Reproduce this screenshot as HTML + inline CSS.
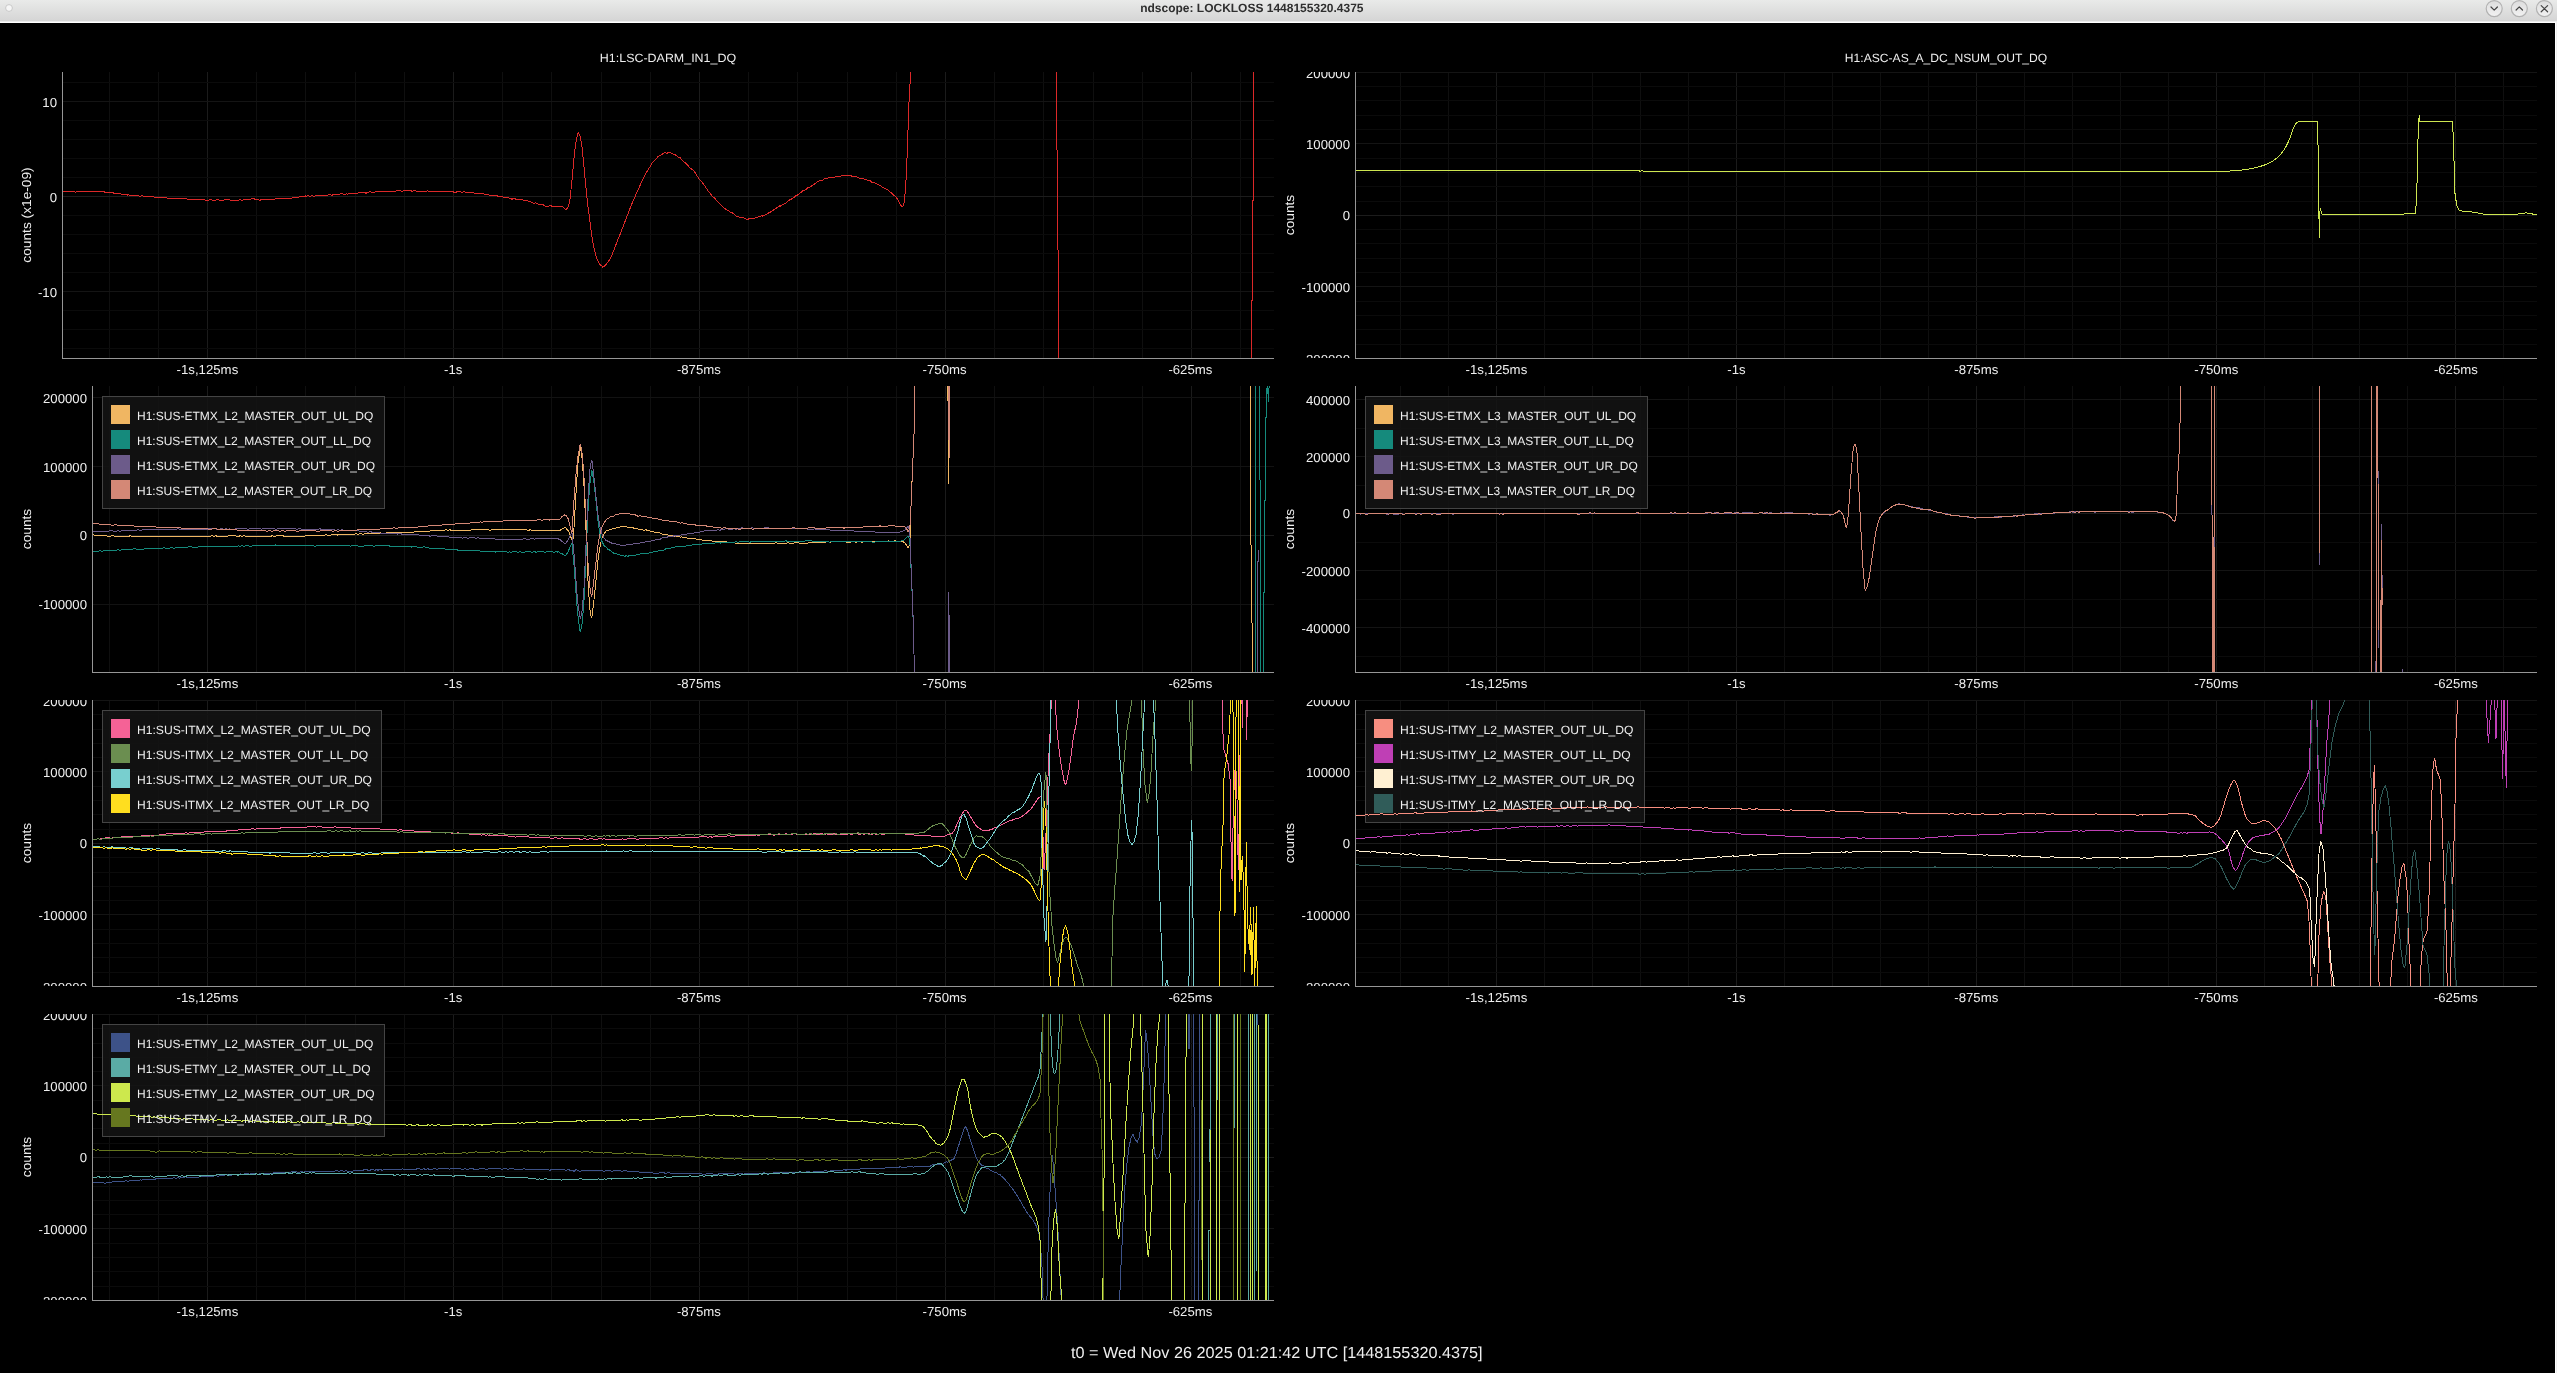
<!DOCTYPE html>
<html lang="en"><head><meta charset="utf-8"><title>ndscope: LOCKLOSS 1448155320.4375</title>
<style>html,body{margin:0;padding:0;background:#000;overflow:hidden}svg{display:block;will-change:transform}text{font-family:"Liberation Sans", sans-serif;text-rendering:geometricPrecision}</style></head><body>
<svg width="2557" height="1373" viewBox="0 0 2557 1373">
<defs>
<linearGradient id="tb" x1="0" y1="0" x2="0" y2="1"><stop offset="0" stop-color="#e9eae9"/><stop offset="1" stop-color="#d4d4d4"/></linearGradient>
<linearGradient id="bt" x1="0" y1="0" x2="0" y2="1"><stop offset="0" stop-color="#dcdcdc"/><stop offset="1" stop-color="#f2f2f2"/></linearGradient>
<clipPath id="c1"><rect x="62" y="72" width="1212" height="286"/></clipPath>
<clipPath id="a1"><rect x="-30" y="72" width="92" height="286"/></clipPath>
<clipPath id="c2"><rect x="1355" y="72" width="1182" height="286"/></clipPath>
<clipPath id="a2"><rect x="1263" y="72" width="92" height="286"/></clipPath>
<clipPath id="c3"><rect x="92" y="386" width="1182" height="286"/></clipPath>
<clipPath id="a3"><rect x="0" y="386" width="92" height="286"/></clipPath>
<clipPath id="c4"><rect x="1355" y="386" width="1182" height="286"/></clipPath>
<clipPath id="a4"><rect x="1263" y="386" width="92" height="286"/></clipPath>
<clipPath id="c5"><rect x="92" y="700" width="1182" height="286"/></clipPath>
<clipPath id="a5"><rect x="0" y="700" width="92" height="286"/></clipPath>
<clipPath id="c6"><rect x="1355" y="700" width="1182" height="286"/></clipPath>
<clipPath id="a6"><rect x="1263" y="700" width="92" height="286"/></clipPath>
<clipPath id="c7"><rect x="92" y="1014" width="1182" height="286"/></clipPath>
<clipPath id="a7"><rect x="0" y="1014" width="92" height="286"/></clipPath>
</defs>
<rect width="2557" height="1373" fill="#000"/>
<g id="plot1">
<g shape-rendering="crispEdges" fill="none" stroke-width="1">
<path stroke="#0f0f0f" d="M256.5 72V358M305.5 72V358M355.5 72V358M404.5 72V358M502.5 72V358M551.5 72V358M601.5 72V358M650.5 72V358M748.5 72V358M797.5 72V358M847.5 72V358M896.5 72V358M994.5 72V358M1043.5 72V358M1093.5 72V358M1142.5 72V358M158.5 72V358M1240.5 72V358M109.5 72V358"/>
<path stroke="#1b1b1b" d="M207.5 72V358M453.5 72V358M699.5 72V358M945.5 72V358M1191.5 72V358"/>
<path stroke="#0b0b0b" d="M62 82.5H1274M62 120.5H1274M62 139.5H1274M62 158.5H1274M62 177.5H1274M62 215.5H1274M62 234.5H1274M62 253.5H1274M62 272.5H1274M62 310.5H1274M62 329.5H1274M62 348.5H1274"/>
<path stroke="#141414" d="M62 101.5H1274M62 291.5H1274"/>
<path stroke="#1c1c1c" d="M62 196.5H1274"/>
</g>
<g clip-path="url(#c1)" fill="none" stroke-width="1" stroke-linejoin="round" shape-rendering="crispEdges">
<path stroke="#dc2828" d="M62 191.6L64 191.7L66 191.5L68 191.3L70 191.6L72 191.4L74 191.8L76 192.1L78 191.4L80 191.4L82 191.8L84 191.7L86 191.5L88 191L89.2 191.5L90 191.7L92 191L94 191.5L96 191L98 191.3L100 191.3L102 192L104 191.8L106 192.6L108 192.9L110 193L112 192.4L114 193.2L116 193.6L118 193.9L120 193.6L122 194.3L124 194.1L126 194.3L127.5 195.1L128 194.6L130 195.3L132 195.8L134 195.3L136 195.7L138 195.9L140 196.1L142 195.8L144 196.3L146 196.9L148 195.9L150 197L152 196.9L154 196.8L156 197.9L158 197.6L160 197L162 197.7L164 198L166 197.9L168 198.3L170 198.1L172 198.5L174 199L176 198.3L178 198.7L180 198.6L182 198.9L184 198.6L186 198.9L188 199.2L190 199.7L192 199.9L194 199.2L196 199.4L198 200L200 199.1L202 199.7L204 199.8L206 200.4L208 200.2L209 199.9L210 199.9L212 200L214 200.6L216 199.9L218 199.9L220 200.2L222 200L224 200.1L226 199.6L228 200L230 199.9L232 200.5L234 200.3L236 200L238 200.2L240 199.8L242 200.1L244 199.8L246 199.8L248 199L250 199.4L252 198.7L254 198.7L254.9 199.2L256 199.1L258 199.7L260 200.3L262 199.2L264 199.3L266 199.5L268 199.4L270 199.1L272 199L274 199.2L276 198.9L278 198.2L280 198.5L282 198.5L284 198.1L286 198.4L288 197.9L290 198.4L292 197.9L294 197.6L296 197.3L298 197.3L300 196.5L302 196.5L304 196.8L305.9 195.8L306 196.8L308 195.6L310 196.5L312 195.8L314 196.2L316 195.8L318 195.1L320 196L322 195.8L324 195.1L326 195.1L328 195L330 194.6L332 195.2L334 194.5L336 194.5L338 194.1L340 194.1L342 193.7L344 194.5L346 193.9L348 194.1L350 193.5L352 193.1L354 193.2L356 193L356.9 193.2L358 193L360 192.8L362 192.2L364 192.4L366 193.2L368 192.2L370 191.8L372 192.2L374 192.4L376 191.2L378 191.6L380 191.4L382 190.9L384 191.6L386 191.4L388 191.4L390 191.1L392 191.4L394 191L396 191.1L398 190.6L400 190.5L402 191.5L404 190.7L406 190.9L407.9 190.7L408 190.7L410 190.7L412 191.1L414 190.9L416 191L418 191.2L420 191.7L422 191.5L424 191.6L426 191.2L428 190.9L430 191.8L432 191.8L434 191.3L436 191.4L438 191.4L440 191.5L442 191.4L444 191L446 191.8L448 190.9L450 191.7L452 191.7L453.7 191.9L454 192.4L456 192.2L458 191.4L460 191.4L462 192.3L464 191.8L466 192.3L468 192.8L470 192L472 192L474 193.1L476 193.3L478 193.4L480 193.8L482 193.7L484 193.9L484.3 194.3L486 194.3L488 194.4L490 195.5L492 195.4L494 195.8L496 195.7L498 196.1L500 196.2L502 196.6L504 197.2L506 197.2L508 197.9L510 198.2L512 199.2L514 198.2L516 199.2L518 199.1L520 199.4L522 199.4L522.6 199.8L524 200.5L526 200.5L528 201.1L530 201.5L532 202.8L534 203.1L536 202.9L538 204L540 204L542 204L544 205.5L546 206.5L548 206.2L550 205.9L551.9 205.8L552 206.6L554 206.2L556 206L558 206L560 206.1L562 206.5L562.3 206.4L564 208.1L566 210L568 207.4L569.3 203.2L570 199.2L572 180L574 157.8L574.7 151.5L576 141.7L578 132.9L578.3 132.5L580 135.8L581.8 145.4L582 146.7L584 166.6L584.5 172L586 188.2L586.9 197.3L588 206.7L590 222L592 237L593 243L594 247.9L596 256.1L597.6 260.5L598 261.3L600 264.7L602 265.9L602.2 267.1L604 266.4L606 264.5L608 262.1L608.3 261.5L610 259L612 254.9L614 250L616 244.6L618 239.4L619 236.9L620 234.5L622 229.4L624 224.2L626 219L628 213.7L630 208.6L632 203.6L634 199L634.2 198.5L636 194.4L638 189.9L640 185.5L642 181.2L644 177.1L646 173.3L648 169.8L649.5 167.5L650 166.8L652 163.2L654 161L656 159.1L658 156.6L658.6 156.2L660 155.6L662 154.3L664 152.9L666 152.9L667.2 153.3L668 152.5L670 152.9L672 153.3L674 154.7L676 155.1L676.9 155.7L678 157.1L680 157.6L682 159.8L684 161.8L686 163.3L688 165.4L690 168L692 169.4L692.2 169.4L694 171L696 174L698 177.3L700 180L702 182L704 184.9L706 187.7L708 190.8L710 193.1L712 195.7L713.5 197.4L714 197.6L716 199.7L718 201.9L720 203.7L722 205.9L724 208.1L726 209.4L728 210.7L728.8 210.5L730 212L732 212.6L734 214L736 216L738 216.9L740 217.3L741 217L742 217.6L744 218L746 218.9L748 219.7L748.6 219L750 218.5L752 218.3L754 218.2L756 217.6L758 216.9L760 216.8L762 215.5L762.3 216.2L764 215.5L766 214.8L768 213.2L770 212.4L772 211.1L774 209.7L776 208.4L778 207L780 205.7L780.7 206.2L782 204.9L784 203.9L786 203.1L788 200.8L790 199.8L792 198.7L794 197.4L796 195.7L798 194.8L800 193.2L802 191.4L804 190.1L805 190.1L806 189.4L808 187.3L810 187.1L812 185.5L814 184.6L816 182.8L818 181.6L820 180.2L822 180.7L824 178.9L826 179L826.4 178L828 178.1L830 177.1L832 177.3L834 177.4L836 176.3L838 176.8L840 176.4L842 175.8L844 175.9L846 175.8L846.2 175.8L848 175.7L850 175.7L852 176.1L854 176.2L856 176.6L858 177.4L860 178.4L862 178L864 179L866 179.3L866.1 179.2L868 180.5L870 180.7L872 182.3L874 182.3L876 183.6L878 184.4L880 185.5L882 186.9L884 187.9L884.4 188.3L886 189L888 190L890 191.8L892 193.4L894 195.5L896 196.8L896.6 198L898 200.1L900 204.1L902 206.8L902.7 206.7L904 202.8L904.8 197.3L906 180.4L907.3 151.5L908 130.3L908.8 105.8L910 84.6L910.6 72.2L911.5 40"/>
<path stroke="#dc2828" d="M1056.5 72V150H1057.5V250H1058.5V358M1253.5 72V200H1252.5V300H1251.5V358"/>
</g>
<path d="M62.5 72V358.5H1274" fill="none" stroke="#969696" stroke-width="1" shape-rendering="crispEdges"/>
<g font-size="13" fill="#eeeeee">
<g text-anchor="end" clip-path="url(#a1)">
<text x="57" y="106.7" textLength="14.7" lengthAdjust="spacingAndGlyphs">10</text>
<text x="57" y="201.7" textLength="7.3" lengthAdjust="spacingAndGlyphs">0</text>
<text x="57" y="296.7" textLength="19.1" lengthAdjust="spacingAndGlyphs">-10</text>
</g>
<g text-anchor="middle">
<text x="207.4" y="374" textLength="61.7" lengthAdjust="spacingAndGlyphs">-1s,125ms</text>
<text x="453.2" y="374" textLength="18.3" lengthAdjust="spacingAndGlyphs">-1s</text>
<text x="698.9" y="374" textLength="44" lengthAdjust="spacingAndGlyphs">-875ms</text>
<text x="944.6" y="374" textLength="44" lengthAdjust="spacingAndGlyphs">-750ms</text>
<text x="1190.4" y="374" textLength="44" lengthAdjust="spacingAndGlyphs">-625ms</text>
</g>
<text transform="translate(31 215) rotate(-90)" text-anchor="middle" textLength="95.3" lengthAdjust="spacingAndGlyphs">counts (x1e-09)</text>
</g>
<text x="668" y="61.5" font-size="12" fill="#eeeeee" text-anchor="middle" textLength="136.3" lengthAdjust="spacingAndGlyphs">H1:LSC-DARM_IN1_DQ</text>
</g>
<g id="plot2">
<g shape-rendering="crispEdges" fill="none" stroke-width="1">
<path stroke="#0f0f0f" d="M1544.5 72V358M1592.5 72V358M1640.5 72V358M1688.5 72V358M1784.5 72V358M1832.5 72V358M1880.5 72V358M1928.5 72V358M2024.5 72V358M2072.5 72V358M2120.5 72V358M2168.5 72V358M2264.5 72V358M2312.5 72V358M2359.5 72V358M2407.5 72V358M1448.5 72V358M2503.5 72V358M1400.5 72V358"/>
<path stroke="#1b1b1b" d="M1496.5 72V358M1736.5 72V358M1976.5 72V358M2216.5 72V358M2455.5 72V358"/>
<path stroke="#0b0b0b" d="M1355 86.5H2537M1355 100.5H2537M1355 115.5H2537M1355 129.5H2537M1355 158.5H2537M1355 172.5H2537M1355 186.5H2537M1355 201.5H2537M1355 229.5H2537M1355 243.5H2537M1355 258.5H2537M1355 272.5H2537M1355 301.5H2537M1355 315.5H2537M1355 329.5H2537M1355 344.5H2537"/>
<path stroke="#141414" d="M1355 72.5H2537M1355 143.5H2537M1355 286.5H2537"/>
<path stroke="#1c1c1c" d="M1355 215.5H2537"/>
</g>
<g clip-path="url(#c2)" fill="none" stroke-width="1" stroke-linejoin="round" shape-rendering="crispEdges">
<path stroke="#cde650" d="M1355 170.5L1638 170.5L1639 170L1640 171.8L1641.5 170.6L1644 171.5L2180 171.5L2215 171.5M2215 171.5L2216.5 171.5L2218 171.5L2219.5 171.4L2221 171.4L2222.5 171.3L2224 171.3L2225.5 171.2L2226.6 171.2L2227 171.2L2228.5 171.1L2230 171L2231.5 170.9L2233 170.8L2234.5 170.7L2236 170.6L2237.5 170.4L2238 170.4L2239 170.3L2240.5 170.1L2242 170L2243.5 169.8L2245 169.6L2246.5 169.4L2248 169.1L2249.5 168.9L2249.9 168.8L2251 168.6L2252.5 168.3L2254 168L2255.5 167.7L2257 167.3L2258.5 166.9L2260 166.5L2261.5 166L2263 165.5L2264.5 165L2266 164.4L2267.5 163.7L2269 163L2270.5 162.3L2272 161.4L2273.2 160.7L2273.5 160.5L2275 159.5L2276.5 158.3L2278 157L2279.5 155.5L2281 153.8L2282.5 152L2284 149.9L2285.5 147.4L2287 144.5L2288.5 141.4L2289.5 139.2L2290 138L2291.5 133.7L2293 129.2L2294.2 126.4L2294.5 125.8L2296 123.4L2296.5 122.9L2297.5 122.2L2299 121.5L2299.3 121.5M2299.3 121.5L2317.5 121.5L2318.2 153.2L2318.9 211.4L2319.3 237.5L2319.8 211.4L2320.5 209L2322.1 214.2L2403.7 214.2L2404.5 213.2L2415.3 213.1L2416.7 199.8L2417.7 148.5L2418.6 120.6L2419.5 115.2L2420 121.5L2452.6 121.5L2453.8 153.2L2454.9 192.8M2454.9 192.8L2456.4 203.2L2457.3 206.8L2457.9 208.1L2459.4 210.2L2459.6 210.3L2460.9 210.7L2462.4 211L2463.9 211.2L2465.4 211.3L2466.9 211.4L2468.4 211.6L2469.9 211.7L2471.2 211.9L2471.4 211.9L2472.9 212.2L2474.4 212.4L2475.9 212.7L2477.4 212.9L2478.9 213.2L2480.4 213.5L2481.9 213.8L2482.9 214M2482.9 214L2517.8 214L2522 213.4L2526 212.8L2531 213.8L2536 214.5L2537 214.5"/>
</g>
<path d="M1355.5 72V358.5H2537" fill="none" stroke="#969696" stroke-width="1" shape-rendering="crispEdges"/>
<g font-size="13" fill="#eeeeee">
<g text-anchor="end" clip-path="url(#a2)">
<text x="1350" y="77.5" textLength="44" lengthAdjust="spacingAndGlyphs">200000</text>
<text x="1350" y="149" textLength="44" lengthAdjust="spacingAndGlyphs">100000</text>
<text x="1350" y="219.9" textLength="7.3" lengthAdjust="spacingAndGlyphs">0</text>
<text x="1350" y="292" textLength="48.4" lengthAdjust="spacingAndGlyphs">-100000</text>
<text x="1350" y="363.5" textLength="48.4" lengthAdjust="spacingAndGlyphs">-200000</text>
</g>
<g text-anchor="middle">
<text x="1496.4" y="374" textLength="61.7" lengthAdjust="spacingAndGlyphs">-1s,125ms</text>
<text x="1736.4" y="374" textLength="18.3" lengthAdjust="spacingAndGlyphs">-1s</text>
<text x="1976.3" y="374" textLength="44" lengthAdjust="spacingAndGlyphs">-875ms</text>
<text x="2216.3" y="374" textLength="44" lengthAdjust="spacingAndGlyphs">-750ms</text>
<text x="2455.9" y="374" textLength="44" lengthAdjust="spacingAndGlyphs">-625ms</text>
</g>
<text transform="translate(1294 215) rotate(-90)" text-anchor="middle" textLength="40.4" lengthAdjust="spacingAndGlyphs">counts</text>
</g>
<text x="1946" y="61.5" font-size="12" fill="#eeeeee" text-anchor="middle" textLength="202.3" lengthAdjust="spacingAndGlyphs">H1:ASC-AS_A_DC_NSUM_OUT_DQ</text>
</g>
<g id="plot3">
<g shape-rendering="crispEdges" fill="none" stroke-width="1">
<path stroke="#0f0f0f" d="M256.5 386V672M305.5 386V672M355.5 386V672M404.5 386V672M502.5 386V672M551.5 386V672M601.5 386V672M650.5 386V672M748.5 386V672M797.5 386V672M847.5 386V672M896.5 386V672M994.5 386V672M1043.5 386V672M1093.5 386V672M1142.5 386V672M158.5 386V672M1240.5 386V672M109.5 386V672"/>
<path stroke="#1b1b1b" d="M207.5 386V672M453.5 386V672M699.5 386V672M945.5 386V672M1191.5 386V672"/>
<path stroke="#121212" d="M92 397.5H1274M92 466.5H1274M92 604.5H1274"/>
<path stroke="#1c1c1c" d="M92 535.5H1274"/>
</g>
<rect x="102.5" y="396.5" width="282" height="112" fill="#141414" fill-opacity="0.85" stroke="#444444" stroke-width="1" shape-rendering="crispEdges"/>
<g clip-path="url(#c3)" fill="none" stroke-width="1" stroke-linejoin="round" shape-rendering="crispEdges">
<path stroke="#f0b662" d="M92 534.8L94 535L96 535.1L98 535L100 535.6L102 535.1L104 535.6L106 535.6L108 536.3L110 536.3L112 535.6L114 535.9L116 536.4L118 536.4L120 536.4L122 536.3L124 536.4L126 536.5L128 536.3L128.9 536.5L130 535.7L132 536.5L134 536.2L136 536.7L138 536.3L140 536.2L142 536.5L144 536.3L146 536.3L148 536.2L150 536.6L152 536.6L154 536.7L156 536.3L158 536.6L160 536.3L162 536.2L164 536.3L166 536.4L168 536.1L170 536.1L172 536.1L174 536.2L176 536L178 536.6L180 536.3L182 536.5L184 536.2L186 536.5L188 536.6L190 536.4L192 536.9L194 536.6L196 536.9L198 536.6L200 536.2L202 536.2L204 536.5L206 536.3L208 536.3L210 536.3L212 535.8L214 536.2L216 535.8L218 536.5L220 536.2L222 536.2L224 536.3L226 536.4L228 536L230 535.9L232 536L234 535.8L236 535.9L238 536.6L240 535.8L242 536.3L244 535.9L246 536.3L248 536.1L250 536.1L252 536.3L254 536.7L256 536.3L258 536.4L260 536.2L262 536.6L264 536.3L266 536.6L268 536.3L270 536.7L272 535.8L274 536.1L275.5 536.3L276 536L278 535.8L280 535.9L282 535.7L284 536.1L286 536.8L288 536.5L290 536L292 536L294 536.1L296 536.5L298 536L300 536L302 536.4L304 536.3L306 535.9L308 535.6L310 535.4L312 535.6L314 535L316 535.7L318 535.2L320 535.3L322 535.6L324 535.4L326 534.6L328 535.2L330 535.2L332 534.7L334 534.6L334.2 534.9L336 534.5L338 535.2L340 534.1L342 534.4L344 534.6L346 534.4L348 534.5L350 534.5L352 534.3L354 534.6L356 533.6L358 534.2L360 533.9L362 534L364 534L366 533.6L368 533.5L370 533.9L372 533.6L374 533.3L376 533.9L378 533.9L380 532.8L382 533.1L384 533.6L386 533L388 532.7L390 532.7L392 532.4L392.9 532.5L394 532.4L396 532.6L398 532.4L400 532.3L402 532.1L404 532.3L406 532L408 532.1L410 532.4L412 532.1L414 532L416 531.8L418 531.7L420 531.6L422 531.4L424 531.5L426 530.9L428 531.5L430 531L432 530.7L434 530.7L436 530.4L438 530.5L440 530.3L442 530.7L444 530.2L446 529.8L448 530.1L450 529.8L451.5 530.4L452 530.7L454 530.6L456 530.1L458 530.3L460 530.8L462 530.4L464 530.2L466 530.4L468 530.6L470 530.2L472 529.9L474 529.8L476 529.8L478 529.5L480 529.4L482 529.6L484 529.5L486 529.6L488 529.6L490 530.3L492 529.5L494 529.6L496 529.7L498 529.8L500 530L502 529.6L504 529.6L506 529.3L508 529.4L510 529.7L510.2 529.6L512 529.2L514 529.4L516 529.5L518 529.7L520 529.4L522 529.7L524 529.4L526 529.7L528 530.6L530 529.8L532 530.3L534 530.6L536 530.5L538 530.5L540 530.8L542 530.8L544 530.8L546 530.4L548 530.8L549.3 530.7L550 530.7L552 530.9L554 530.9L556 530.9L558 530.4L559 530.7L560 530.4L562 529.1L564 527.9L564.9 527.4L566 528L568 530.7L568.5 531L570 534.7L572 540.3L572.8 541L574 527.8L575 510L576 492.8L577.8 465L578 463.2L580 448.6L580.5 447.5L582 457.9L583.3 475L584 486.3L586 530L588 581.1L588.5 590L590 609.7L591.4 617.8L592 616.6L594 599.6L594.5 595L596 579.7L598 560L600 546.6L602 538L604 533.9L606 531.2L606.7 530.7L608 530.2L610 529.6L612 529.1L614 528.7L616 528.1L618 527.6L620 527L622 526.1L623.1 526.5L624 526.6L626 526.6L628 527.2L630 527.1L632 527.3L634 528.3L636 528.7L638 529L640 529.5L642 529.9L644 530.1L646 529.8L648 530.6L650 531.1L652 531.4L654 532L656 532.6L658 532.7L660 532.9L662 534.2L664 534L666 534.3L668 535L670 535.4L672 535.6L674 536.3L676 536.2L676.6 536.1L678 536.6L680 537.1L682 536.9L684 537.4L686 537.6L688 538.6L690 537.9L692 538.7L694 538.7L696 538.9L698 539.4L700 539.7L702 540L704 540L706 540L708 540.3L710 540.8L712 541L714 541.4L716 541.3L718 541.7L720 542.1L720.3 541.7L722 541.4L724 541.7L726 541.7L728 542.7L730 542.2L732 542.9L734 542.8L736 543.2L738 543.2L740 543.1L742 543.2L744 543.4L746 543.4L748 543.2L750 543.3L752 543.9L753.1 542.9L754 543.5L756 543.2L758 543.4L760 543.6L762 543.4L764 543.7L766 543.1L768 543.8L770 543.4L772 543.6L774 543.4L776 542.8L778 543.2L780 543.3L782 543.6L784 543.2L786 543.2L788 542.7L790 543.5L792 543.6L794 543L796 542.9L798 542.6L800 543.3L802 543.8L804 543.2L806 543.3L808 543.1L810 542.6L812 543.1L814 542.4L816 542.6L818 542.6L820 542.7L822 542.5L824 542.4L826 542L828 541.9L830 542.2L832 541.9L834 541.7L836 541.6L838 541.9L840 541.5L842 541.6L844 541.6L846 542L848 542.1L850 542.4L852 541.6L854 541.8L856 542.2L858 541.8L860 541.9L862 542.2L864 541.7L866 541.5L868 541.4L870 541.7L872 541.8L874 541.3L876 541.3L878 541.7L880 541.6L882 541.4L884 541.6L886 541.5L888 540.9L890 541.2L892 541.3L894 541L895.1 540.6L896 541.1L898 541.4L900 541.6L902 540.9L903 542.3L904 541.8L906 544.6L908 547.9L908.2 547.9L909.8 544L910 540.9L910.8 511L912 481.6L912.6 467.4L914 434.8L914.3 423.7L914.8 386L915 350"/>
<path stroke="#158a7c" d="M92 551.2L94 551.6L96 551.3L98 551.3L100 550.9L102 551.1L104 550.9L106 550.8L108 550.4L110 550.3L112 550.1L114 550L116 550.2L118 549.7L120 550.2L122 549.6L124 549.8L126 549.6L128 549.4L130 549.9L132 549.3L134 548.9L136 549L138 549L140 549.6L142 549L144 549.1L146 548.6L148 548.9L150 548.8L152 549L154 548.3L156 548.6L158 548.4L158.2 548.2L160 548.4L162 548.2L164 547.6L166 548.4L168 548.4L170 548L172 547.7L174 548.3L176 547.8L178 547.9L180 547.9L182 547.4L184 547.5L186 547.1L188 547L190 546.9L192 547L194 547.3L196 547.1L198 547L200 546.9L202 547L204 546.5L206 546.6L208 546.7L210 546.5L212 546.6L214 546.3L216 546.9L216.9 546.8L218 546.6L220 546.5L222 547.1L224 546.5L226 546.4L228 546.5L230 546.4L232 546.6L234 546.2L236 546.6L238 545.9L240 546.2L242 545.8L244 546.4L246 545.8L248 545.8L250 546.1L252 546.1L254 545.5L256 545.7L258 545.4L260 545.8L262 545.7L264 545.5L266 545.4L268 545.5L270 545.4L272 545.7L274 545.9L275.5 545L276 545.4L278 545.3L280 545.5L282 545.2L284 545.4L286 545.2L288 545.6L290 545.5L292 545.5L294 545.6L296 545.5L298 545.2L300 545.7L302 545.6L304 545.5L306 545.8L308 545.9L310 545.3L312 545.4L314 546L316 546L318 545.5L320 545.4L322 545.4L324 545.5L326 545.2L328 545.7L330 545.3L332 545.2L334 545.7L336 545.3L338 545.4L340 545.7L342 545.7L344 545.4L346 545.5L348 545.4L350 546.1L352 545.8L354 545.4L356 545.8L358 546L360 546.1L362 546.4L363.5 546.3L364 545.7L366 545.8L368 545.5L370 545.9L372 545.7L374 546.3L376 545.5L378 545L380 545.4L382 545.6L384 545.3L386 545.5L388 545.7L390 546.1L392 546.2L394 546.1L396 546.6L398 546.4L400 546.5L402 546.4L404 546.6L406 547L408 546.4L410 546.7L412 547.1L412.4 546.7L414 546.9L416 546.6L418 547.3L420 547.4L422 547.2L424 546.9L426 547.2L428 547.9L430 548.3L432 548.1L434 548.5L436 548.2L438 548.4L440 548.7L442 549L444 548.7L446 549.5L448 549.8L450 549.2L451.5 549.3L452 549.8L454 549.7L456 549.3L458 550.3L460 550.2L462 550.2L464 551L466 550.5L468 550.4L470 550.7L472 550.4L474 550.6L476 550.9L478 550.9L480 551L482 551.5L484 551.5L486 551.5L488 551.6L490 551.7L492 552L494 551.7L496 552.1L498 551.4L500 551.6L502 551.4L504 551.8L506 551.9L508 552.2L510 551.7L510.2 552L512 552L514 551.9L516 551.9L518 552.2L520 551.6L522 552.2L524 552.1L526 551.8L528 551.7L530 551.6L532 552.4L534 551.5L536 552.2L538 551.9L540 551.6L542 551.3L544 552L546 552.1L548 551.4L549.3 551.6L550 552L552 551.8L554 552.4L556 551.7L558 552.1L559 551.7L560 552.9L562 553.7L564 554.9L564.9 555.6L566 555L568 551.9L568.5 551L570 546.8L571.8 543.1L572 543.3L574 565.4L574.5 572L576 593.2L577.5 612L578 616.4L580 630.5L580.5 631L582 624L583.5 608L584 600.6L586 556L588 511.3L588.8 498L590 483L591.9 470.4L592 470.6L594 482.9L595 492L596 501.3L598 521.3L598.5 525L600 533.9L601.5 540L602 541.4L604 545.6L604.5 546.2L606 547L608 549.3L610 550.2L612 551.9L614 553.3L616 553.5L618 554.5L620 555L622 555.7L624 556L625.3 556.2L626 555.6L628 556.2L630 555.4L632 555.4L634 555.4L636 555L638 554.3L640 554L642 553.8L644 553.5L645 553.7L646 553L648 553.2L650 552.7L652 552.3L654 551.9L656 551.8L658 551L660 550.7L662 550.2L664 550L666 548.6L668 549L670 548.2L672 547.8L674 547.2L676 546.6L676.6 547L678 546.7L680 546.7L682 545.9L684 546.4L686 545.9L688 545.5L690 545.3L692 545L694 544.6L696 544.5L698 544.5L700 544.4L702 543.9L704 544L706 543.6L708 543.7L710 543.9L712 543.6L714 543.3L716 542.8L718 542.7L720 542.5L720.3 543.2L722 542.7L724 542.8L726 542.6L728 542.6L730 542.9L732 542.2L734 542.2L736 541.9L738 542.2L740 541.6L742 541.6L744 541.5L746 541.4L748 541.8L750 542.3L752 541.3L754 541.7L756 541.5L758 541.2L760 541.3L762 541.3L764 541.2L766 541.9L768 540.9L770 541.4L772 541.4L774 541.1L776 541.2L778 541.4L780 541.2L782 541.3L784 541.5L786 540.8L788 541.8L790 542L792 541.7L794 541.7L796 541L798 541.3L800 541.1L802 541L804 541.3L806 540.8L808 541L810 540.6L812 541.1L814 541.2L816 541.1L818 541.1L820 541.8L822 541L824 541.3L826 541.4L828 541.9L830 542.1L832 541.7L834 541.3L836 541.3L838 541.7L840 541.3L842 541.8L844 541.8L846 541.4L848 541.6L850 541.6L852 541.9L854 541.3L856 541.8L858 541.5L860 541.4L862 541.7L864 541.6L866 541.4L868 541.2L870 541.4L872 542L874 542.2L876 541.7L878 542L880 541.4L882 541.6L884 541.7L886 541.4L888 541.4L890 541.8L892 541.6L894 541.5L895.1 541.8L896 541.6L898 541.7L900 541.3L902 540.9L903 540.9L904 540.2L905.5 538.6L906 538.1L907.8 536.2L908 536.4L909.2 538L910 545L911.5 580L912 591.4L913.2 622L914 654.2L914.3 671.7L914.6 700"/>
<path stroke="#6c5b8a" d="M92 532L94 531.8L96 531.8L98 531.4L100 531.1L102 531.5L104 531.3L106 531.3L108 531.3L110 530.9L112 530.9L114 531.1L116 531.1L118 530.8L120 531.1L122 530.9L124 530.5L126 530.7L128 531L130 530.2L132 530.6L134 530.6L136 530.5L138 529.7L140 530.4L142 529.9L144 529.7L146 529.8L148 530L150 529.7L152 529.6L154 530L156 529.5L158 529.4L158.2 529.9L160 529.8L162 529.8L164 529.2L166 529.8L168 529.6L170 529.9L172 529.1L174 529.4L176 529.3L178 528.9L180 529.1L182 529.6L184 529.2L186 529.2L188 529.6L190 529.6L192 529.6L194 529.2L196 529.4L198 529.7L200 529.3L202 529.2L204 529.5L206 529.6L208 528.9L210 528.5L212 528.7L214 528.8L216 529L218 529.2L220 529L222 528.9L224 529.2L226 528.9L228 529.1L230 528.9L232 529.8L234 529.2L236 528.9L238 528.8L240 528.9L242 528.5L244 528.8L246 528.8L248 529.3L250 528.9L252 528.8L254 528.5L256 528.6L258 528.8L260 528.8L262 529.1L264 528.7L266 529L268 528.9L270 528.8L272 528.4L274 528.6L275.5 529.2L276 529.3L278 528.9L280 529L282 528.7L284 528.7L286 528.7L288 529L290 528.9L292 528.8L294 528.7L296 529L298 529L300 528.8L302 529.4L304 529.1L306 529.2L308 529.5L310 529.4L312 529.1L314 529.4L316 529L318 529.2L320 528.8L322 529.7L324 528.9L326 529.7L328 529.3L330 529.3L332 529.6L334 529.8L334.2 529.9L336 530.2L338 529.9L340 530.1L342 529.8L344 530.2L346 530.2L348 530.1L350 530.3L352 530.5L354 530.6L356 531L358 530.9L360 531.1L362 531.7L364 531.2L366 531.7L368 532.5L370 531.5L372 532.2L373.3 532.6L374 532L376 533.2L378 532L380 533.2L382 533.3L384 533.2L386 533.1L388 533.4L390 533.1L392 533.7L394 533.3L396 533.7L398 534.1L400 533.7L402 534.1L404 534.3L406 534L408 534.8L410 534.7L412 534.3L414 534.8L416 534.6L418 534.8L420 535.2L422 535.1L422.2 535.6L424 535.2L426 535.8L428 535.7L430 536.1L432 535.9L434 536L436 535.8L438 536.4L440 536.6L442 537L444 536.9L446 536.8L448 536.8L450 537.1L452 537.1L454 537.7L456 537.6L458 537.3L460 537.4L462 538.1L464 537.8L466 537.8L468 538.2L470 537.9L471.1 537.9L472 537.9L474 537.5L476 538.4L478 537.8L480 538.2L482 538.2L484 538.7L486 538.5L488 538.7L490 538.4L492 539L494 538.7L496 539.2L498 539.3L500 539.3L502 540L504 539.7L506 539.7L508 539.6L510 539.5L510.2 539.9L512 539.8L514 539.2L516 539.7L518 539.5L520 539.6L522 539.3L524 538.9L526 538.9L528 539.5L530 539L532 538.6L534 539.1L536 538.8L538 538.2L540 538.2L542 538.4L544 538.8L546 538.7L548 538.7L549.3 538.8L550 538.8L552 538.2L554 538.8L556 538.7L558 538.8L559 539.2L560 539.7L562 541.4L564 542.9L564.9 543.3L566 543.2L568 539.8L568.5 539L570 535.8L571.8 533L572 533.3L574 553.8L574.5 560L576 581.2L577.5 600L578 604.2L580 617.3L580.5 618.3L582 610.8L583.5 595L584 587.9L586 545L588 498.6L588.5 490L590 469.1L591.4 460.2L592 461.1L594 477.6L594.5 482L596 496.6L598 515L600 526.6L602 534L604 537.7L606 540.6L606.7 540.5L608 541.3L610 542.3L612 543.3L614 543.2L616 544.1L618 544.6L620 545.1L622 545.2L623.1 545.4L624 545L626 545.1L628 544.7L630 544.4L632 544.2L634 543.9L636 543.4L638 543.7L640 543.1L642 542.3L644 542.6L646 541.7L648 541.6L650 541.1L652 540.8L654 540.4L656 539.7L658 539.3L660 539.4L662 537.9L664 537.9L666 537.6L668 536.8L670 536.2L672 536.7L674 535.7L676 536.1L676.6 535.5L678 535.2L680 535.2L682 534.8L684 534.7L686 534.2L688 533.7L690 533.4L692 533.4L694 533L696 532.2L698 532L700 532L702 531.4L704 531.1L706 530.7L708 530.7L710 530.6L712 530.7L714 530.2L716 530.4L718 529.7L720 530.4L720.3 529.9L722 529.7L724 529.3L726 528.6L728 529.1L730 529L732 529.4L734 528.5L736 529.2L738 528.6L740 528.7L742 527.8L744 528.4L746 528.2L748 528.5L750 528.2L752 527.9L754 528.3L756 528.2L758 528.2L760 528.3L762 528.3L764 528L766 527.7L768 527.8L770 528.4L772 528.3L774 528.2L776 528.2L778 528.3L780 528.3L782 528.2L784 528.2L786 529L788 528.6L790 528.5L792 528.3L794 528.5L796 528.9L798 528.9L800 528.7L802 528.8L804 528.7L806 528.5L808 529.3L810 529.1L812 529.6L814 528.9L816 529.2L818 529.6L820 529.3L822 529.2L824 529.4L826 529.7L828 529.9L829.6 529.9L830 530.1L832 530.2L834 530.1L836 530.1L838 530.2L840 530.4L842 530.5L844 530.4L846 530.7L848 530.6L850 530.4L852 530.6L854 531.1L856 531.1L858 531.6L860 531.4L862 531.7L864 531.9L866 531.9L868 531.7L870 531.8L872 532L874 531.8L876 532.2L878 532.4L880 532.1L882 532.8L884 532.2L884.2 532.3L886 532.4L888 532.4L890 532.6L892 532.4L894 532.8L896 532.4L898 532.3L900 532L901.7 531.4L902 531.7L904 530.5L905 530.2L906 528.5L907.8 526.4L908 526.2L909.2 529L910 537.3L911.5 576.6L912 588.7L913.2 620.3L914 653.7L914.3 671.7L914.6 700"/>
<path stroke="#d48876" d="M92 523.6L94 523.6L96 523.4L98 523.7L100 524.2L102 524.5L104 524.1L106 524.2L108 525L110 524.5L112 525.3L114 525L116 524.8L118 525.4L120 525.7L122 524.9L124 525.8L126 525.4L128 526L130 525.6L132 525.4L134 526L136 526.2L138 526.5L140 526.5L142 526.4L144 526.3L146 526.3L148 526.6L150 526.5L152 526.8L154 526.3L156 527.1L158 527.2L160 527.9L162 527.5L164 527.2L166 527.6L168 527.2L170 527.4L172 527.1L174 528L176 527.9L178 527.5L180 527.9L182 528.2L184 528.2L186 528.2L188 528L190 528.2L192 528.4L194 528.7L196 528.3L198 528.3L200 528.9L202 528.5L204 529L206 528.8L207.1 528.9L208 529.1L210 529L212 529.1L214 528.7L216 528.9L218 529.2L220 529.6L222 529.6L224 530.1L226 529.6L228 529.6L230 530L232 529.8L234 529.8L236 529.7L238 530.4L240 530L242 530.3L244 530.1L246 530.8L248 530.3L250 530.9L252 530.3L254 530.6L256 531.1L258 530.6L260 530.9L262 530.8L264 530.5L266 531.1L268 531.1L270 530.7L272 531.2L274 530.9L275.5 530.8L276 531L278 530.8L280 531.4L282 530.5L284 531L286 531.1L288 530.3L290 530.3L292 530.9L294 530.7L296 531L298 531.2L300 530.8L302 530.6L304 530.2L306 531L308 530.8L310 530.9L312 530.9L314 530.3L316 531.1L318 531L320 531L322 530.4L324 530.6L326 530.6L328 530.7L330 530.6L332 531.1L334 531L334.2 531L336 530.8L338 531.2L340 530.9L342 530L344 530.5L346 530.7L348 530.8L350 530.5L352 530.3L354 530.1L356 530.3L358 529.8L360 529.7L362 529.7L364 529.8L366 529.4L368 529.1L370 529.7L372 529.3L374 529.4L376 529.4L378 529.4L380 529.1L382 528.7L384 528.6L386 528.1L388 528.8L390 528.3L392 528.5L392.9 528.1L394 527.7L396 528.5L398 527.9L400 527.9L402 527.7L404 527.8L406 527.7L408 527L410 527.6L412 527.1L414 527L416 527.4L418 527L420 526.6L422 526.1L424 526.4L426 526.3L428 526.1L430 525.6L432 525.6L434 525.3L436 525.6L438 525.6L440 525.5L442 524.9L444 525L446 524.8L448 524.3L450 524.3L451.5 524.8L452 524.3L454 524.2L456 523.7L458 523.7L460 523.1L462 523.5L464 523.7L466 523.7L468 523.3L470 523L472 522.7L474 522.4L476 522.4L478 522.4L480 521.9L482 522.2L484 521.7L486 521.3L488 521.5L490 521.2L492 521.2L494 521.7L496 521.2L498 521.2L500 521.3L502 521.3L504 520.7L506 521L508 520.7L510 520.5L510.2 520.6L512 520.1L514 520.2L516 520.3L518 520.4L520 520.1L522 520.2L524 520.5L526 520.6L528 520.4L530 520.5L532 520L534 520L536 520.1L538 519.9L540 519.8L542 520.2L544 519.7L546 519.5L548 519.8L549.3 520.1L550 519.5L552 519.7L554 519.2L556 519.1L558 519L559 519L560 519.1L562 516.6L564 515.7L564.9 514.8L566 515.5L568 518.6L568.5 519.5L570 526.1L571.8 533L572 532.4L574 500L576 474.4L577.5 460L578 456.4L580 445.2L580.5 444.5L582 452.7L583.5 470L584 477.5L586 520L588 562.4L588.5 570L590 588.2L591.4 596.1L592 594.9L594 579.2L594.5 575L596 561.7L598 545L600 533.8L601.5 528L602 526.7L604 522.8L604.5 522.1L606 520L608 518.5L610 517.1L612 516.4L614 516L616 514.5L618 514.5L620 513.5L622 513.3L623.1 513L624 514L626 513.6L628 513.9L630 514L632 514.8L634 514.3L636 515.3L638 516.3L640 515.9L642 516.3L644 516.8L646 516.7L648 517.2L650 517.8L652 518L654 518.4L656 518.6L658 519.1L660 519.3L662 520L664 520.2L666 520.4L668 520.2L670 521.4L672 521.7L674 521.6L676 521.7L678 522.3L680 523.1L682 522.9L684 523.3L686 523.7L688 524.3L690 524.2L692 524.4L694 524.5L696 525.2L698 525.4L698.5 525.2L700 525.1L702 525.4L704 526L706 525.8L708 526.6L710 526.7L712 526.9L714 527.2L716 527.3L718 527.1L720 527.5L722 528.4L724 527.7L726 528L728 528.6L730 528.4L732 528.3L734 528.2L736 528.7L738 529L740 529.1L742 528.8L742.2 529L744 528.5L746 528.8L748 528.5L750 528.9L752 529L754 529L756 528.4L758 528.9L760 528.3L762 528.2L764 528.4L766 528L768 528.3L770 528.3L772 528.2L774 528.4L776 528.3L778 528.5L780 528.1L782 528.4L784 528.2L786 528.2L788 528.4L790 528.5L792 528L794 527.9L796 528.1L798 528.2L800 528.3L802 528.3L804 528.4L806 528.2L808 528L810 527.7L812 527.8L814 527.9L816 528.1L818 528.1L820 528.1L822 528L824 528.2L826 528L828 527.9L830 527.9L832 527.6L834 527.4L836 527.8L838 527.6L840 527.5L842 527.5L844 528.2L846 527.5L848 527.6L850 527.6L852 527.2L854 527.4L856 527.9L858 527.6L860 527.3L862 527.2L864 526.8L866 526.9L868 526.7L870 526.7L872 526.7L874 526.8L876 526.6L878 526.6L880 525.8L882 526.6L884 526.9L886 526.6L888 526L890 525.9L892 526L894 525.7L895.1 526.2L896 526L898 526.3L900 526.6L902 525.9L903.9 526.8L904 526.5L906 527.7L906.5 528.3L908 531.6L908.2 532.1L909.6 529L910 525.3L910.8 511L912 482.9L912.6 467.4L914 434.8L914.3 423.7L914.8 386L915 350"/>
<path stroke="#f0b662" d="M948.5 386V484M947.5 386V401"/>
<path stroke="#d48876" d="M949.5 386V458M948.5 386V440"/>
<path stroke="#6c5b8a" d="M948.5 592V672M949.5 615V672"/>
<path stroke="#f0b662" d="M1250.5 386V545H1251.5V623H1252.5V672"/>
<path stroke="#158a7c" d="M1255.5 386V672M1259.5 386V480H1260.5V672M1263.5 672V592H1264.5V500H1265.5V417H1266.5V390L1267.5 386M1267.5 386L1268.5 402L1269 388L1269.5 386"/>
<path stroke="#6c5b8a" d="M1258.5 550V561H1257.5V672"/>
</g>
<rect x="111" y="405" width="19" height="19" fill="#f0b662" shape-rendering="crispEdges"/>
<text x="137" y="420.0" font-size="12" fill="#eeeeee" textLength="236.4" lengthAdjust="spacingAndGlyphs">H1:SUS-ETMX_L2_MASTER_OUT_UL_DQ</text>
<rect x="111" y="430" width="19" height="19" fill="#158a7c" shape-rendering="crispEdges"/>
<text x="137" y="445.0" font-size="12" fill="#eeeeee" textLength="234" lengthAdjust="spacingAndGlyphs">H1:SUS-ETMX_L2_MASTER_OUT_LL_DQ</text>
<rect x="111" y="455" width="19" height="19" fill="#6c5b8a" shape-rendering="crispEdges"/>
<text x="137" y="470.0" font-size="12" fill="#eeeeee" textLength="238" lengthAdjust="spacingAndGlyphs">H1:SUS-ETMX_L2_MASTER_OUT_UR_DQ</text>
<rect x="111" y="480" width="19" height="19" fill="#d48876" shape-rendering="crispEdges"/>
<text x="137" y="495.0" font-size="12" fill="#eeeeee" textLength="235.1" lengthAdjust="spacingAndGlyphs">H1:SUS-ETMX_L2_MASTER_OUT_LR_DQ</text>
<path d="M92.5 386V672.5H1274" fill="none" stroke="#969696" stroke-width="1" shape-rendering="crispEdges"/>
<g font-size="13" fill="#eeeeee">
<g text-anchor="end" clip-path="url(#a3)">
<text x="87" y="403.1" textLength="44" lengthAdjust="spacingAndGlyphs">200000</text>
<text x="87" y="471.8" textLength="44" lengthAdjust="spacingAndGlyphs">100000</text>
<text x="87" y="539.9" textLength="7.3" lengthAdjust="spacingAndGlyphs">0</text>
<text x="87" y="609.2" textLength="48.4" lengthAdjust="spacingAndGlyphs">-100000</text>
</g>
<g text-anchor="middle">
<text x="207.4" y="688" textLength="61.7" lengthAdjust="spacingAndGlyphs">-1s,125ms</text>
<text x="453.2" y="688" textLength="18.3" lengthAdjust="spacingAndGlyphs">-1s</text>
<text x="698.9" y="688" textLength="44" lengthAdjust="spacingAndGlyphs">-875ms</text>
<text x="944.6" y="688" textLength="44" lengthAdjust="spacingAndGlyphs">-750ms</text>
<text x="1190.4" y="688" textLength="44" lengthAdjust="spacingAndGlyphs">-625ms</text>
</g>
<text transform="translate(31 529) rotate(-90)" text-anchor="middle" textLength="40.4" lengthAdjust="spacingAndGlyphs">counts</text>
</g>
</g>
<g id="plot4">
<g shape-rendering="crispEdges" fill="none" stroke-width="1">
<path stroke="#0f0f0f" d="M1544.5 386V672M1592.5 386V672M1640.5 386V672M1688.5 386V672M1784.5 386V672M1832.5 386V672M1880.5 386V672M1928.5 386V672M2024.5 386V672M2072.5 386V672M2120.5 386V672M2168.5 386V672M2264.5 386V672M2312.5 386V672M2359.5 386V672M2407.5 386V672M1448.5 386V672M2503.5 386V672M1400.5 386V672"/>
<path stroke="#1b1b1b" d="M1496.5 386V672M1736.5 386V672M1976.5 386V672M2216.5 386V672M2455.5 386V672"/>
<path stroke="#0b0b0b" d="M1355 428.5H2537M1355 485.5H2537M1355 542.5H2537M1355 599.5H2537M1355 656.5H2537"/>
<path stroke="#141414" d="M1355 399.5H2537M1355 456.5H2537M1355 570.5H2537M1355 627.5H2537"/>
<path stroke="#1c1c1c" d="M1355 513.5H2537"/>
</g>
<rect x="1365.5" y="396.5" width="282" height="112" fill="#141414" fill-opacity="0.85" stroke="#444444" stroke-width="1" shape-rendering="crispEdges"/>
<g clip-path="url(#c4)" fill="none" stroke-width="1" stroke-linejoin="round" shape-rendering="crispEdges">
<path stroke="#f0b662" d="M1355 513.3L1357 513.8L1359 513.9L1361 514L1363 513.6L1365 514L1367 514.2L1369 513.6L1371 513.9L1373 513.2L1375 513.1L1377 513.7L1379 513.6L1381 513.6L1383 513.4L1385 513.5L1387 513.8L1389 514.1L1391 513.6L1393 513.2L1395 514L1397 513.8L1399 513.8L1401 513.8L1403 514.4L1405 513.9L1407 514L1409 513.3L1411 513.7L1413 513.7L1415 514L1417 514L1419 513.7L1421 514.3L1423 513.6L1425 513.8L1427 514L1429 513.5L1431 514L1433 514L1435 513.8L1437 514.4L1439 514L1441 514.1L1443 513.6L1445 513.4L1447 513.6L1449 513.7L1451 513.7L1453 514L1455 513.1L1457 513.3L1459 513.1L1461 514L1463 513.5L1465 513.6L1467 513.3L1469 513.8L1471 513.5L1473 513.7L1475 513.1L1477 513.8L1479 513.6L1481 513.7L1483 513.8L1485 513.6L1487 513.6L1489 513.9L1491 513.7L1493 513.6L1495 513.8L1497 513.6L1499 514L1500 514.1L1501 513.8L1503 514.2L1505 513.3L1507 513.6L1509 514.1L1511 513.5L1513 513.2L1515 513.9L1517 513.6L1519 513.1L1521 513.6L1523 513.2L1525 513.1L1527 513.4L1529 513.3L1531 513.1L1533 513.3L1535 513.2L1537 513.4L1539 513.5L1541 513.6L1543 513.4L1545 513.2L1547 513.2L1549 513.6L1551 514L1553 513.8L1555 513.5L1557 513.9L1559 513.4L1561 513.9L1563 513.5L1565 513.9L1567 513.8L1569 513.5L1571 513.6L1573 513.2L1575 513.5L1577 513.8L1579 514.5L1581 513.6L1583 513.5L1585 513.1L1587 513.6L1589 512.9L1591 513L1593 513.3L1595 512.9L1597 513.6L1599 513.6L1601 513.2L1603 513.2L1605 513.2L1607 513.2L1609 513.7L1611 513.7L1613 513.7L1615 513.7L1617 513.4L1619 513.5L1621 513L1623 513.2L1625 513.6L1627 513.5L1629 513L1631 513L1633 513.4L1635 513.6L1637 512.7L1639 513.1L1641 513.3L1643 513.5L1645 513.1L1647 513.5L1649 513.3L1650 514L1651 513.6L1653 513.6L1655 513.5L1657 513.8L1659 513.8L1661 513.3L1663 513.6L1665 513.2L1667 513.3L1669 513.1L1671 512.9L1673 513.1L1675 512.9L1677 513.3L1679 513.5L1681 513.2L1683 513L1685 513.6L1687 512.9L1689 513L1691 513.8L1693 513.8L1695 513.8L1697 513.4L1699 513L1701 513.1L1703 513.4L1705 513L1707 512.9L1709 512.8L1711 512.9L1713 513.4L1715 513.3L1717 512.9L1719 513L1721 513.1L1723 513.3L1725 512.9L1727 513L1729 512.4L1731 512.7L1733 513.2L1735 513.3L1737 512.8L1739 512.9L1741 513.4L1743 513L1745 513L1747 513.3L1749 513.2L1751 513.5L1753 513.4L1755 513L1757 513L1759 513L1761 512.8L1763 512.9L1765 513.4L1767 512.6L1769 513.3L1771 513.1L1773 513L1775 513.2L1777 513.3L1779 513.4L1780 513L1781 513.1L1783 513.2L1785 513.8L1787 513.5L1789 513.1L1791 513.3L1793 513.2L1795 513.4L1797 513.5L1799 514.1L1801 513.2L1803 513.8L1805 513.8L1807 513.6L1809 513.8L1811 513.9L1813 514.1L1815 514.5L1817 513.8L1819 514.6L1821 514.4L1823 514.8L1825 514.7L1827 515L1829 514.8L1831 515L1832.4 514.8L1833 514.5L1835 513.3L1836 512.6L1837 512.4L1839 510.5L1841 511.9L1841.5 512.7L1843 514.7L1843.4 515.5L1845 523.4L1846.2 527.6L1847 525L1848.2 515.5L1849 504.7L1849.6 495L1851 473.9L1853 451.4L1853.2 449.9L1854.2 444.6L1854.9 444.3L1855 444.2L1855.6 444.6L1856.9 452.1L1857 453L1859 491.6L1859.1 493.6L1861 531.7L1861.3 537.3L1863 567.8L1863.5 574.4L1865 589.3L1865.4 590.4L1867 587.1L1868.5 581L1869 578.6L1871 564.8L1871.8 559.2L1873 550.7L1875 536.7L1876.1 530.8L1877 527L1879 519.9L1880.5 516.5L1881 515.8L1883 513.3L1885 511.3L1887 510L1887.1 510.3L1889 509L1891 507.4L1893 506.1L1895 505.4L1897 504.1L1899 504.3L1899.1 504.3L1901 504.2L1903 504.7L1905 504.9L1907 505.5L1909 506.7L1911 506.9L1911.1 507.1L1913 507.2L1915 507.8L1917 508.1L1919 508.6L1921 509.2L1923 509L1925 509.5L1927 509.8L1929 509.2L1931 510.1L1932.9 510.9L1933 511L1935 511.1L1937 512.1L1939 512.7L1941 512.6L1943 513.5L1945 514.1L1947 514.2L1949 514.2L1951 515.2L1953 515.2L1954.8 515.2L1955 515.2L1957 515.3L1959 516.1L1961 516.3L1963 516.6L1965 516.7L1967 516.6L1969 516.9L1971 517.5L1973 517.4L1975 518.4L1976.6 517.6L1977 517.5L1979 518L1981 517.8L1983 517.5L1985 517.5L1987 517.6L1989 517.6L1991 517.5L1993 517.1L1995 517.3L1997 517.2L1998.5 517.2L1999 516.2L2001 516.6L2003 516.5L2005 516.6L2007 516.6L2009 516.6L2011 516.3L2013 516L2015 515.8L2017 516.2L2019 515.4L2021 515.4L2023 515.5L2025 514.9L2027 514.2L2029 514.7L2031 514.4L2033 514.3L2035 514.4L2037 514.1L2039 513.8L2041 514.1L2042.2 513.9L2043 513.8L2045 513.7L2047 513.5L2049 513.3L2051 513.1L2053 513.1L2055 512.7L2057 512.4L2059 512.9L2061 512.4L2063 512.4L2065 512.2L2067 512.1L2069 512L2071 512L2073 511.8L2075 512.2L2077 511.8L2079 512.2L2081 511.2L2083 511.4L2085 512L2085.9 511.7L2087 511.5L2089 511.8L2091 511.5L2093 511.9L2095 511.2L2097 511.7L2099 511.7L2101 511.9L2103 512L2105 511.5L2107 512.1L2109 511.6L2111 511.1L2113 511.1L2115 512.1L2117 511.6L2119 511.6L2121 511.5L2123 511.6L2125 512.1L2127 511.7L2129 512.2L2131 511.7L2133 511.1L2135 512L2137 511.5L2139 511.6L2141 512L2143 511.6L2145 511.9L2147 511.5L2149 511.3L2151 511.6L2151.4 511.4L2153 511.9L2155 511.9L2157 511.9L2159 512.2L2161 512.6L2163 512.8L2164.5 513.4L2165 513.2L2167 514.4L2169 515.5L2171 517.4L2171.1 517.6L2173 520L2174.4 521.4L2175 520.7L2176.1 515.5L2177 495L2177.6 478.3L2179 454.3L2179.4 445.5L2180.3 412.8L2180.7 386L2181 350"/>
<path stroke="#158a7c" d="M1355 513.3L1357 513.8L1359 513.9L1361 514L1363 513.6L1365 514L1367 514.2L1369 513.6L1371 513.9L1373 513.2L1375 513.1L1377 513.7L1379 513.6L1381 513.6L1383 513.4L1385 513.5L1387 513.8L1389 514.1L1391 513.6L1393 513.2L1395 514L1397 513.8L1399 513.8L1401 513.8L1403 514.4L1405 513.9L1407 514L1409 513.3L1411 513.7L1413 513.7L1415 514L1417 514L1419 513.7L1421 514.3L1423 513.6L1425 513.8L1427 514L1429 513.5L1431 514L1433 514L1435 513.8L1437 514.4L1439 514L1441 514.1L1443 513.6L1445 513.4L1447 513.6L1449 513.7L1451 513.7L1453 514L1455 513.1L1457 513.3L1459 513.1L1461 514L1463 513.5L1465 513.6L1467 513.3L1469 513.8L1471 513.5L1473 513.7L1475 513.1L1477 513.8L1479 513.6L1481 513.7L1483 513.8L1485 513.6L1487 513.6L1489 513.9L1491 513.7L1493 513.6L1495 513.8L1497 513.6L1499 514L1500 514.1L1501 513.8L1503 514.2L1505 513.3L1507 513.6L1509 514.1L1511 513.5L1513 513.2L1515 513.9L1517 513.6L1519 513.1L1521 513.6L1523 513.2L1525 513.1L1527 513.4L1529 513.3L1531 513.1L1533 513.3L1535 513.2L1537 513.4L1539 513.5L1541 513.6L1543 513.4L1545 513.2L1547 513.2L1549 513.6L1551 514L1553 513.8L1555 513.5L1557 513.9L1559 513.4L1561 513.9L1563 513.5L1565 513.9L1567 513.8L1569 513.5L1571 513.6L1573 513.2L1575 513.5L1577 513.8L1579 514.5L1581 513.6L1583 513.5L1585 513.1L1587 513.6L1589 512.9L1591 513L1593 513.3L1595 512.9L1597 513.6L1599 513.6L1601 513.2L1603 513.2L1605 513.2L1607 513.2L1609 513.7L1611 513.7L1613 513.7L1615 513.7L1617 513.4L1619 513.5L1621 513L1623 513.2L1625 513.6L1627 513.5L1629 513L1631 513L1633 513.4L1635 513.6L1637 512.7L1639 513.1L1641 513.3L1643 513.5L1645 513.1L1647 513.5L1649 513.3L1650 514L1651 513.6L1653 513.6L1655 513.5L1657 513.8L1659 513.8L1661 513.3L1663 513.6L1665 513.2L1667 513.3L1669 513.1L1671 512.9L1673 513.1L1675 512.9L1677 513.3L1679 513.5L1681 513.2L1683 513L1685 513.6L1687 512.9L1689 513L1691 513.8L1693 513.8L1695 513.8L1697 513.4L1699 513L1701 513.1L1703 513.4L1705 513L1707 512.9L1709 512.8L1711 512.9L1713 513.4L1715 513.3L1717 512.9L1719 513L1721 513.1L1723 513.3L1725 512.9L1727 513L1729 512.4L1731 512.7L1733 513.2L1735 513.3L1737 512.8L1739 512.9L1741 513.4L1743 513L1745 513L1747 513.3L1749 513.2L1751 513.5L1753 513.4L1755 513L1757 513L1759 513L1761 512.8L1763 512.9L1765 513.4L1767 512.6L1769 513.3L1771 513.1L1773 513L1775 513.2L1777 513.3L1779 513.4L1780 513L1781 513.1L1783 513.2L1785 513.8L1787 513.5L1789 513.1L1791 513.3L1793 513.2L1795 513.4L1797 513.5L1799 514.1L1801 513.2L1803 513.8L1805 513.8L1807 513.6L1809 513.8L1811 513.9L1813 514.1L1815 514.5L1817 513.8L1819 514.6L1821 514.4L1823 514.8L1825 514.7L1827 515L1829 514.8L1831 515L1832.4 514.8L1833 514.5L1835 513.3L1836 512.6L1837 512.4L1839 510.5L1841 511.9L1841.5 512.7L1843 514.7L1843.4 515.5L1845 523.4L1846.2 527.6L1847 525L1848.2 515.5L1849 504.7L1849.6 495L1851 473.9L1853 451.4L1853.2 449.9L1854.2 444.6L1854.9 444.3L1855 444.2L1855.6 444.6L1856.9 452.1L1857 453L1859 491.6L1859.1 493.6L1861 531.7L1861.3 537.3L1863 567.8L1863.5 574.4L1865 589.3L1865.4 590.4L1867 587.1L1868.5 581L1869 578.6L1871 564.8L1871.8 559.2L1873 550.7L1875 536.7L1876.1 530.8L1877 527L1879 519.9L1880.5 516.5L1881 515.8L1883 513.3L1885 511.3L1887 510L1887.1 510.3L1889 509L1891 507.4L1893 506.1L1895 505.4L1897 504.1L1899 504.3L1899.1 504.3L1901 504.2L1903 504.7L1905 504.9L1907 505.5L1909 506.7L1911 506.9L1911.1 507.1L1913 507.2L1915 507.8L1917 508.1L1919 508.6L1921 509.2L1923 509L1925 509.5L1927 509.8L1929 509.2L1931 510.1L1932.9 510.9L1933 511L1935 511.1L1937 512.1L1939 512.7L1941 512.6L1943 513.5L1945 514.1L1947 514.2L1949 514.2L1951 515.2L1953 515.2L1954.8 515.2L1955 515.2L1957 515.3L1959 516.1L1961 516.3L1963 516.6L1965 516.7L1967 516.6L1969 516.9L1971 517.5L1973 517.4L1975 518.4L1976.6 517.6L1977 517.5L1979 518L1981 517.8L1983 517.5L1985 517.5L1987 517.6L1989 517.6L1991 517.5L1993 517.1L1995 517.3L1997 517.2L1998.5 517.2L1999 516.2L2001 516.6L2003 516.5L2005 516.6L2007 516.6L2009 516.6L2011 516.3L2013 516L2015 515.8L2017 516.2L2019 515.4L2021 515.4L2023 515.5L2025 514.9L2027 514.2L2029 514.7L2031 514.4L2033 514.3L2035 514.4L2037 514.1L2039 513.8L2041 514.1L2042.2 513.9L2043 513.8L2045 513.7L2047 513.5L2049 513.3L2051 513.1L2053 513.1L2055 512.7L2057 512.4L2059 512.9L2061 512.4L2063 512.4L2065 512.2L2067 512.1L2069 512L2071 512L2073 511.8L2075 512.2L2077 511.8L2079 512.2L2081 511.2L2083 511.4L2085 512L2085.9 511.7L2087 511.5L2089 511.8L2091 511.5L2093 511.9L2095 511.2L2097 511.7L2099 511.7L2101 511.9L2103 512L2105 511.5L2107 512.1L2109 511.6L2111 511.1L2113 511.1L2115 512.1L2117 511.6L2119 511.6L2121 511.5L2123 511.6L2125 512.1L2127 511.7L2129 512.2L2131 511.7L2133 511.1L2135 512L2137 511.5L2139 511.6L2141 512L2143 511.6L2145 511.9L2147 511.5L2149 511.3L2151 511.6L2151.4 511.4L2153 511.9L2155 511.9L2157 511.9L2159 512.2L2161 512.6L2163 512.8L2164.5 513.4L2165 513.2L2167 514.4L2169 515.5L2171 517.4L2171.1 517.6L2173 520L2174.4 521.4L2175 520.7L2176.1 515.5L2177 495L2177.6 478.3L2179 454.3L2179.4 445.5L2180.3 412.8L2180.7 386L2181 350"/>
<path stroke="#6c5b8a" d="M1355 513.9L1357 514L1359 513.8L1361 514.1L1363 513.4L1365 513.6L1367 513.9L1369 513.5L1371 513.9L1373 513.6L1375 513.9L1377 513.7L1379 513.8L1381 513.9L1383 513.9L1385 513.8L1387 514.2L1389 513.8L1391 513.6L1393 514L1395 514L1397 514L1399 514.1L1401 513.6L1403 514L1405 514L1407 513.8L1409 513.9L1411 513.2L1413 513.7L1415 514L1417 513.4L1419 513.6L1421 513.8L1423 513.8L1425 514L1427 513.3L1429 513.6L1431 513.7L1433 513.3L1435 513.5L1437 513.8L1439 513.8L1441 513.6L1443 513L1445 513.5L1447 513.7L1449 513.6L1451 513.7L1453 514.3L1455 513.6L1457 513.4L1459 513.6L1461 513.6L1463 513.5L1465 513.6L1467 513.7L1469 513.6L1471 513.3L1473 513.6L1475 513.7L1477 513.5L1479 513.8L1481 513.7L1483 513.4L1485 513.6L1487 513.9L1489 513.8L1491 513.5L1493 513.7L1495 513.5L1497 513.3L1499 513.7L1500 513.7L1501 513.8L1503 513.7L1505 513.7L1507 513.6L1509 513.7L1511 513.8L1513 513.6L1515 513.8L1517 513.3L1519 513.4L1521 513.9L1523 514L1525 513.6L1527 513.6L1529 513.4L1531 513.7L1533 513.7L1535 513.4L1537 513.8L1539 513.8L1541 513.7L1543 513.5L1545 513.8L1547 513.5L1549 514L1551 513.8L1553 513.5L1555 514L1557 513.9L1559 513.6L1561 514L1563 513.4L1565 513.6L1567 513.7L1569 513.1L1571 513.6L1573 513.4L1575 513.5L1577 513.3L1579 513.6L1581 513.3L1583 513.3L1585 513.5L1587 513.4L1589 513.9L1591 513.4L1593 513.5L1595 513.5L1597 513.6L1599 513.7L1601 513.7L1603 513.5L1605 513.5L1607 513.5L1609 513.7L1611 513.7L1613 513.5L1615 513.2L1617 513.9L1619 513.7L1621 513.5L1623 513.5L1625 513.3L1627 513.2L1629 513.3L1631 513.4L1633 513.3L1635 513.2L1637 513.4L1639 513.6L1641 513.4L1643 513.6L1645 513.1L1647 513.4L1649 513.4L1650 513.2L1651 513.1L1653 513.5L1655 513.3L1657 513.5L1659 513.2L1661 513.5L1663 513.3L1665 513.1L1667 513.2L1669 513.3L1671 513.4L1673 513.2L1675 513.2L1677 513.4L1679 513.5L1681 513.5L1683 513.5L1685 513.5L1687 513.4L1689 513.4L1691 513.4L1693 513.3L1695 513.4L1697 513.8L1699 513.3L1701 513.2L1703 513.1L1705 513.2L1707 513.3L1709 512.9L1711 512.8L1713 513.2L1715 512.8L1717 513.2L1719 513.2L1721 513.4L1723 513.5L1725 513.3L1727 513.1L1729 513L1731 513L1733 513.1L1735 512.8L1737 513.1L1739 513L1741 513.1L1743 512.9L1745 513L1747 512.8L1749 512.9L1751 512.7L1753 513L1755 513.3L1757 513L1759 513L1761 512.8L1763 513.3L1765 512.9L1767 513.1L1769 513L1771 512.8L1773 513.2L1775 513.1L1777 513.1L1779 513.2L1780 513L1781 512.9L1783 513.1L1785 512.9L1787 513L1789 512.9L1791 512.8L1793 513L1795 513.1L1797 513.4L1799 513.7L1801 513.4L1803 513.9L1805 513.6L1807 513.9L1809 514.1L1811 513.9L1813 514L1815 514.4L1817 514.5L1819 514.5L1821 514.4L1823 515.1L1825 514.6L1827 514.6L1829 515.1L1831 515L1832.4 514.8L1833 515L1835 513.3L1836 512.7L1837 512L1839 511L1841 512.2L1841.5 512.5L1843 514.7L1843.4 515.5L1845 523.4L1846.2 527.3L1847 525L1848.2 515.5L1849 504.7L1849.6 495L1851 473.9L1853 451.4L1853.2 449.9L1854.2 444.6L1854.9 443.9L1855 444L1855.6 444.6L1856.9 452.1L1857 453L1859 491.6L1859.1 493.6L1861 531.7L1861.3 537.3L1863 567.8L1863.5 574.4L1865 589.3L1865.4 590.4L1867 587.1L1868.5 581L1869 578.6L1871 564.8L1871.8 559.2L1873 550.7L1875 536.7L1876.1 530.8L1877 527L1879 519.9L1880.5 516.5L1881 515.9L1883 513.6L1885 511.7L1887 510.2L1887.1 510.1L1889 508.9L1891 507.2L1893 506.1L1895 505L1897 504.3L1899 503.9L1899.1 503.9L1901 504.1L1903 504.3L1905 505.1L1907 505.6L1909 506.1L1911 506.7L1911.1 506.8L1913 507L1915 507.5L1917 507.6L1919 507.9L1921 508.3L1923 509.3L1925 509.1L1927 509.8L1929 510.3L1931 510.4L1932.9 511.1L1933 511.1L1935 511.5L1937 512.3L1939 512.4L1941 512.7L1943 513.3L1945 513.7L1947 513.9L1949 514.3L1951 515.3L1953 515.1L1954.8 515.5L1955 515.3L1957 515.7L1959 515.9L1961 516.1L1963 516.3L1965 516.6L1967 517L1969 517.4L1971 517.8L1973 517.8L1975 518L1976.6 517.8L1977 517.7L1979 517.4L1981 517.6L1983 517.1L1985 517.3L1987 517.6L1989 517.2L1991 517.4L1993 517.1L1995 516.9L1997 517L1998.5 516.9L1999 517.3L2001 517.4L2003 516.8L2005 516.8L2007 516.6L2009 516.4L2011 516L2013 516.1L2015 516L2017 515.8L2019 515.3L2021 515.3L2023 514.9L2025 515.1L2027 514.6L2029 514.5L2031 514.4L2033 514.2L2035 513.9L2037 513.6L2039 514.2L2041 513.7L2042.2 513.6L2043 513.9L2045 513.4L2047 513.4L2049 513.2L2051 513.3L2053 513.1L2055 513L2057 512.7L2059 512.7L2061 512.7L2063 512L2065 512.3L2067 512.1L2069 512.1L2071 511.7L2073 512.1L2075 511.8L2077 511.8L2079 511.7L2081 511.5L2083 511.6L2085 511.5L2085.9 511.5L2087 511.7L2089 511.7L2091 511.7L2093 511.7L2095 512.1L2097 511.8L2099 511.5L2101 511.6L2103 511.5L2105 511.6L2107 511.5L2109 511.5L2111 511.9L2113 511.6L2115 511.5L2117 511.5L2119 511.6L2121 512L2123 511.8L2125 511.9L2127 511.2L2129 511.8L2131 512L2133 512.2L2135 511.9L2137 511.5L2139 511.8L2141 511.6L2143 511.4L2145 511.6L2147 511.9L2149 512L2151 511.8L2151.4 511.5L2153 512.1L2155 511.5L2157 512L2159 512.1L2161 512.9L2163 513L2164.5 513.5L2165 513.4L2167 514.3L2169 515.9L2171 517.3L2171.1 517.8L2173 520.4L2174.4 521.4L2175 520.7L2176.1 515.5L2177 495L2177.6 478.3L2179 454.3L2179.4 445.5L2180.3 412.8L2180.7 386L2181 350"/>
<path stroke="#d48876" d="M1355 513.3L1357 513.8L1359 513.9L1361 514L1363 513.6L1365 514L1367 514.2L1369 513.6L1371 513.9L1373 513.2L1375 513.1L1377 513.7L1379 513.6L1381 513.6L1383 513.4L1385 513.5L1387 513.8L1389 514.1L1391 513.6L1393 513.2L1395 514L1397 513.8L1399 513.8L1401 513.8L1403 514.4L1405 513.9L1407 514L1409 513.3L1411 513.7L1413 513.7L1415 514L1417 514L1419 513.7L1421 514.3L1423 513.6L1425 513.8L1427 514L1429 513.5L1431 514L1433 514L1435 513.8L1437 514.4L1439 514L1441 514.1L1443 513.6L1445 513.4L1447 513.6L1449 513.7L1451 513.7L1453 514L1455 513.1L1457 513.3L1459 513.1L1461 514L1463 513.5L1465 513.6L1467 513.3L1469 513.8L1471 513.5L1473 513.7L1475 513.1L1477 513.8L1479 513.6L1481 513.7L1483 513.8L1485 513.6L1487 513.6L1489 513.9L1491 513.7L1493 513.6L1495 513.8L1497 513.6L1499 514L1500 514.1L1501 513.8L1503 514.2L1505 513.3L1507 513.6L1509 514.1L1511 513.5L1513 513.2L1515 513.9L1517 513.6L1519 513.1L1521 513.6L1523 513.2L1525 513.1L1527 513.4L1529 513.3L1531 513.1L1533 513.3L1535 513.2L1537 513.4L1539 513.5L1541 513.6L1543 513.4L1545 513.2L1547 513.2L1549 513.6L1551 514L1553 513.8L1555 513.5L1557 513.9L1559 513.4L1561 513.9L1563 513.5L1565 513.9L1567 513.8L1569 513.5L1571 513.6L1573 513.2L1575 513.5L1577 513.8L1579 514.5L1581 513.6L1583 513.5L1585 513.1L1587 513.6L1589 512.9L1591 513L1593 513.3L1595 512.9L1597 513.6L1599 513.6L1601 513.2L1603 513.2L1605 513.2L1607 513.2L1609 513.7L1611 513.7L1613 513.7L1615 513.7L1617 513.4L1619 513.5L1621 513L1623 513.2L1625 513.6L1627 513.5L1629 513L1631 513L1633 513.4L1635 513.6L1637 512.7L1639 513.1L1641 513.3L1643 513.5L1645 513.1L1647 513.5L1649 513.3L1650 514L1651 513.6L1653 513.6L1655 513.5L1657 513.8L1659 513.8L1661 513.3L1663 513.6L1665 513.2L1667 513.3L1669 513.1L1671 512.9L1673 513.1L1675 512.9L1677 513.3L1679 513.5L1681 513.2L1683 513L1685 513.6L1687 512.9L1689 513L1691 513.8L1693 513.8L1695 513.8L1697 513.4L1699 513L1701 513.1L1703 513.4L1705 513L1707 512.9L1709 512.8L1711 512.9L1713 513.4L1715 513.3L1717 512.9L1719 513L1721 513.1L1723 513.3L1725 512.9L1727 513L1729 512.4L1731 512.7L1733 513.2L1735 513.3L1737 512.8L1739 512.9L1741 513.4L1743 513L1745 513L1747 513.3L1749 513.2L1751 513.5L1753 513.4L1755 513L1757 513L1759 513L1761 512.8L1763 512.9L1765 513.4L1767 512.6L1769 513.3L1771 513.1L1773 513L1775 513.2L1777 513.3L1779 513.4L1780 513L1781 513.1L1783 513.2L1785 513.8L1787 513.5L1789 513.1L1791 513.3L1793 513.2L1795 513.4L1797 513.5L1799 514.1L1801 513.2L1803 513.8L1805 513.8L1807 513.6L1809 513.8L1811 513.9L1813 514.1L1815 514.5L1817 513.8L1819 514.6L1821 514.4L1823 514.8L1825 514.7L1827 515L1829 514.8L1831 515L1832.4 514.8L1833 514.5L1835 513.3L1836 512.6L1837 512.4L1839 510.5L1841 511.9L1841.5 512.7L1843 514.7L1843.4 515.5L1845 523.4L1846.2 527.6L1847 525L1848.2 515.5L1849 504.7L1849.6 495L1851 473.9L1853 451.4L1853.2 449.9L1854.2 444.6L1854.9 444.3L1855 444.2L1855.6 444.6L1856.9 452.1L1857 453L1859 491.6L1859.1 493.6L1861 531.7L1861.3 537.3L1863 567.8L1863.5 574.4L1865 589.3L1865.4 590.4L1867 587.1L1868.5 581L1869 578.6L1871 564.8L1871.8 559.2L1873 550.7L1875 536.7L1876.1 530.8L1877 527L1879 519.9L1880.5 516.5L1881 515.8L1883 513.3L1885 511.3L1887 510L1887.1 510.3L1889 509L1891 507.4L1893 506.1L1895 505.4L1897 504.1L1899 504.3L1899.1 504.3L1901 504.2L1903 504.7L1905 504.9L1907 505.5L1909 506.7L1911 506.9L1911.1 507.1L1913 507.2L1915 507.8L1917 508.1L1919 508.6L1921 509.2L1923 509L1925 509.5L1927 509.8L1929 509.2L1931 510.1L1932.9 510.9L1933 511L1935 511.1L1937 512.1L1939 512.7L1941 512.6L1943 513.5L1945 514.1L1947 514.2L1949 514.2L1951 515.2L1953 515.2L1954.8 515.2L1955 515.2L1957 515.3L1959 516.1L1961 516.3L1963 516.6L1965 516.7L1967 516.6L1969 516.9L1971 517.5L1973 517.4L1975 518.4L1976.6 517.6L1977 517.5L1979 518L1981 517.8L1983 517.5L1985 517.5L1987 517.6L1989 517.6L1991 517.5L1993 517.1L1995 517.3L1997 517.2L1998.5 517.2L1999 516.2L2001 516.6L2003 516.5L2005 516.6L2007 516.6L2009 516.6L2011 516.3L2013 516L2015 515.8L2017 516.2L2019 515.4L2021 515.4L2023 515.5L2025 514.9L2027 514.2L2029 514.7L2031 514.4L2033 514.3L2035 514.4L2037 514.1L2039 513.8L2041 514.1L2042.2 513.9L2043 513.8L2045 513.7L2047 513.5L2049 513.3L2051 513.1L2053 513.1L2055 512.7L2057 512.4L2059 512.9L2061 512.4L2063 512.4L2065 512.2L2067 512.1L2069 512L2071 512L2073 511.8L2075 512.2L2077 511.8L2079 512.2L2081 511.2L2083 511.4L2085 512L2085.9 511.7L2087 511.5L2089 511.8L2091 511.5L2093 511.9L2095 511.2L2097 511.7L2099 511.7L2101 511.9L2103 512L2105 511.5L2107 512.1L2109 511.6L2111 511.1L2113 511.1L2115 512.1L2117 511.6L2119 511.6L2121 511.5L2123 511.6L2125 512.1L2127 511.7L2129 512.2L2131 511.7L2133 511.1L2135 512L2137 511.5L2139 511.6L2141 512L2143 511.6L2145 511.9L2147 511.5L2149 511.3L2151 511.6L2151.4 511.4L2153 511.9L2155 511.9L2157 511.9L2159 512.2L2161 512.6L2163 512.8L2164.5 513.4L2165 513.2L2167 514.4L2169 515.5L2171 517.4L2171.1 517.6L2173 520L2174.4 521.4L2175 520.7L2176.1 515.5L2177 495L2177.6 478.3L2179 454.3L2179.4 445.5L2180.3 412.8L2180.7 386L2181 350"/>
<path stroke="#d48876" d="M2211.5 386V515H2212.5V672M2214.5 386V672M2213.5 537V672M2319.5 386V553M2371.5 386V672M2376.5 386V672M2377.5 386V478M2378.5 471V648M2381.5 524V672M2382.5 575V605M2380.5 600V672"/>
<path stroke="#6c5b8a" d="M2211.5 505V515M2214.5 537V547M2319.5 553V565M2378.5 471V484M2381.5 524V540M2382.5 575V588M2378.5 630V648M2375.5 661V672M2402.5 669V672"/>
</g>
<rect x="1374" y="405" width="19" height="19" fill="#f0b662" shape-rendering="crispEdges"/>
<text x="1400" y="420.0" font-size="12" fill="#eeeeee" textLength="236.2" lengthAdjust="spacingAndGlyphs">H1:SUS-ETMX_L3_MASTER_OUT_UL_DQ</text>
<rect x="1374" y="430" width="19" height="19" fill="#158a7c" shape-rendering="crispEdges"/>
<text x="1400" y="445.0" font-size="12" fill="#eeeeee" textLength="233.8" lengthAdjust="spacingAndGlyphs">H1:SUS-ETMX_L3_MASTER_OUT_LL_DQ</text>
<rect x="1374" y="455" width="19" height="19" fill="#6c5b8a" shape-rendering="crispEdges"/>
<text x="1400" y="470.0" font-size="12" fill="#eeeeee" textLength="237.7" lengthAdjust="spacingAndGlyphs">H1:SUS-ETMX_L3_MASTER_OUT_UR_DQ</text>
<rect x="1374" y="480" width="19" height="19" fill="#d48876" shape-rendering="crispEdges"/>
<text x="1400" y="495.0" font-size="12" fill="#eeeeee" textLength="235" lengthAdjust="spacingAndGlyphs">H1:SUS-ETMX_L3_MASTER_OUT_LR_DQ</text>
<path d="M1355.5 386V672.5H2537" fill="none" stroke="#969696" stroke-width="1" shape-rendering="crispEdges"/>
<g font-size="13" fill="#eeeeee">
<g text-anchor="end" clip-path="url(#a4)">
<text x="1350" y="404.7" textLength="44" lengthAdjust="spacingAndGlyphs">400000</text>
<text x="1350" y="461.7" textLength="44" lengthAdjust="spacingAndGlyphs">200000</text>
<text x="1350" y="518.1" textLength="7.3" lengthAdjust="spacingAndGlyphs">0</text>
<text x="1350" y="575.7" textLength="48.4" lengthAdjust="spacingAndGlyphs">-200000</text>
<text x="1350" y="632.7" textLength="48.4" lengthAdjust="spacingAndGlyphs">-400000</text>
</g>
<g text-anchor="middle">
<text x="1496.4" y="688" textLength="61.7" lengthAdjust="spacingAndGlyphs">-1s,125ms</text>
<text x="1736.4" y="688" textLength="18.3" lengthAdjust="spacingAndGlyphs">-1s</text>
<text x="1976.3" y="688" textLength="44" lengthAdjust="spacingAndGlyphs">-875ms</text>
<text x="2216.3" y="688" textLength="44" lengthAdjust="spacingAndGlyphs">-750ms</text>
<text x="2455.9" y="688" textLength="44" lengthAdjust="spacingAndGlyphs">-625ms</text>
</g>
<text transform="translate(1294 529) rotate(-90)" text-anchor="middle" textLength="40.4" lengthAdjust="spacingAndGlyphs">counts</text>
</g>
</g>
<g id="plot5">
<g shape-rendering="crispEdges" fill="none" stroke-width="1">
<path stroke="#0f0f0f" d="M256.5 700V986M305.5 700V986M355.5 700V986M404.5 700V986M502.5 700V986M551.5 700V986M601.5 700V986M650.5 700V986M748.5 700V986M797.5 700V986M847.5 700V986M896.5 700V986M994.5 700V986M1043.5 700V986M1093.5 700V986M1142.5 700V986M158.5 700V986M1240.5 700V986M109.5 700V986"/>
<path stroke="#1b1b1b" d="M207.5 700V986M453.5 700V986M699.5 700V986M945.5 700V986M1191.5 700V986"/>
<path stroke="#0b0b0b" d="M92 714.5H1274M92 729.5H1274M92 743.5H1274M92 757.5H1274M92 786.5H1274M92 800.5H1274M92 814.5H1274M92 829.5H1274M92 857.5H1274M92 872.5H1274M92 886.5H1274M92 900.5H1274M92 929.5H1274M92 943.5H1274M92 957.5H1274M92 972.5H1274"/>
<path stroke="#141414" d="M92 700.5H1274M92 771.5H1274M92 914.5H1274"/>
<path stroke="#1c1c1c" d="M92 843.5H1274"/>
</g>
<rect x="102.5" y="710.5" width="279" height="112" fill="#141414" fill-opacity="0.85" stroke="#444444" stroke-width="1" shape-rendering="crispEdges"/>
<g clip-path="url(#c5)" fill="none" stroke-width="1" stroke-linejoin="round" shape-rendering="crispEdges">
<path stroke="#f56296" d="M92 839.5L94 839L96 839.3L98 838.9L100 839.1L102 838.5L104 838.2L106 837.6L108 837.6L110 838L112 838.4L114 837.1L116 837.1L118 837.3L120 837.3L122 836.9L124 837L126 836.4L128 836.6L130 836.7L132 836.8L134 836.2L136 836.1L138 836.1L140 836.2L142 835.9L144 835.5L146 835.7L148 835.8L150 835.3L152 835.1L154 835.4L156 835.2L158 835.2L160 834.9L162 834.5L164 834.3L166 834L168 833.9L170 833.8L172 833.7L174 834L176 833.3L178 833.5L180 833.2L182 833.7L184 833.2L186 832.8L188 833.1L190 832.9L192 832.5L194 832.9L196 832.6L198 832.8L200 832.6L202 832.4L204 832.1L206 831.7L208 831.9L210 831.7L211.4 831.9L212 831.6L214 831.3L216 831L218 831.4L220 831.5L222 831L224 831L226 831.2L228 830.5L230 830.7L232 830.4L234 830.9L236 830.4L238 830.1L240 829.7L242 829.9L244 830L246 829.5L248 829.2L250 829.4L252 828.7L254 829L256 829L258 828.7L260 828.6L262 828.8L264 828.6L266 828.5L268 828.5L270 828.3L272 828L274 828L276 828.2L278 828.3L280 828.2L282 827.5L284 827.9L286 827.8L288 827.5L290 827.6L292 827.6L294 827.7L296 827L298 827.5L300 827.2L302 827.2L304 827.4L306 827.3L308 826.8L310 826.8L312 827L314 826.5L316 827.1L318 826.9L320 826.9L322 827L324 827.4L326 827L328 827L330 827.6L332 827L334 827L336 826.9L338 827.7L340 827.5L342 827.7L344 827.9L346 827.8L348 827.8L350 827.8L352 828.2L354 828.2L356 828.5L358 828L360 828.2L362 828.1L364 828.8L366 828.2L368 828.8L370 829L372 828.7L374 829L375.7 828.3L376 828.7L378 828.5L380 829L382 829.1L384 829.2L386 829.7L388 829.6L390 829.4L392 829.5L394 829.4L396 829.7L398 830.4L400 829.7L402 830L404 830L406 830.4L408 830.6L410 830.6L412 830.3L414 830.9L416 831.5L418 831.2L420 831.5L422 831.4L424 831.3L426 831.9L428 832L430 831.9L432 832.1L434 832.4L436 832.3L438 832.6L440 832.5L441.4 832L442 832.6L444 832.6L446 832.6L448 833L450 832.9L452 833.2L454 833.5L456 833.3L458 832.9L460 833.2L462 833.7L464 833.6L466 833.6L468 833.9L470 834.3L472 834.4L474 834.7L476 834.5L478 834.8L480 834.9L482 835.1L484 834.7L486 835.2L488 834.9L490 835.7L492 835.8L494 835.8L496 835.7L498 835.5L500 835.9L502 835.7L504 836L506 835.7L507.1 835.8L508 836.1L510 836.6L512 836.3L514 836.9L516 837.1L518 836.1L520 836.6L522 836.6L524 836.8L526 836.8L528 836.9L530 837.2L532 837.3L534 837.3L536 837.3L538 837.4L540 837.4L542 837.6L544 837.6L546 837.8L548 837.4L550 838L552 838.3L554 838L556 837.7L558 838.5L560 838.2L562 837.6L564 838.4L566 838.7L568 838.8L570 838.9L572 838.9L574 838.8L576 838.4L578 838.7L580 839.1L582 839.3L584 838.9L586 839L588 839.4L590 838.8L592 838.7L594 839.2L596 839.3L598 839.1L600 838.5L602 839.1L604 838.8L605.6 839.3L606 839.2L608 839.3L610 839.4L612 839.1L614 839.4L616 839.5L618 839.3L620 839.5L622 838.9L624 839.2L626 839.1L628 838.9L630 839L632 838.9L634 838.8L636 839L638 839.2L640 838.7L642 838.8L644 838.3L646 838.6L648 838.8L650 838.6L652 838.6L654 838.2L656 838.1L658 838.3L660 837.8L662 837.8L664 838.3L666 837.8L668 838.4L670 837.5L672 837.9L674 837.4L676 837.7L678 837.5L680 837.7L682 837.5L684 837.4L686 837.6L688 837.7L690 837.2L692 837.5L694 837.2L696 837L698 837.5L700 836.3L702 836.6L704 836.2L704.2 836.7L706 836.6L708 837.6L710 836.7L712 837.1L714 836.9L716 836.4L718 836.6L720 836.9L722 836.4L724 836.4L726 836.4L728 835.8L730 836L732 836.2L734 836.2L736 835.8L738 835.8L740 835.8L742 835.7L744 835.8L746 835.7L748 835.6L750 835.1L752 835.2L754 835.4L756 834.9L758 835.2L760 835L762 834.9L764 835L766 834.6L768 834.6L770 834.6L772 834.7L774 835.4L776 834.1L778 834.6L780 834.5L782 834.8L784 834.4L786 833.8L788 834.8L790 834.1L792 834.3L794 833.9L796 834L798 834L800 834.4L802 834.4L802.7 834L804 834.2L806 834L808 834.1L810 834.2L812 834.2L814 833.8L816 834L818 834.1L820 834L822 833.8L824 834.4L826 833.9L828 834.2L830 834.2L832 834.6L834 833.7L836 834.7L838 834.2L840 834L842 834.3L844 834.9L846 834.4L848 833.9L850 834L852 834.5L854 833.7L856 833.9L858 833.9L860 834.5L862 833.8L864 834.2L866 833.7L868 833.7L870 834.1L872 834.2L874 833.6L876 834.2L878 834.3L880 833.9L882 834.1L884 834.1L886 833.9L888 833.9L890 833.9L892 834L894 833.7L896 833.9L898 833.6L900 834L902 833.9L904 833.7L906 834.4L908 834.8L910 834.7L912 834.2L914 835.1L916 835L918 835L920 835L922 835.4L924 835.9L926 835.9L928 835.8L930 835.9L932 836.2L934 836.6L936 837L938 836.4L939.3 836.6L940 836.5L942 836.3L944 836.2L946 835.8L948 834.6L950 833.8L952 833.4L952.4 832.9L954 830.8L956 826.6L958 821.7L960 817.6L960.1 817.4L962 814.2L964 811.1L965.6 810.4L966 809.9L968 812.5L970 816L972 819L972.1 819.4L974 822.4L976 825.5L978 827.8L978.7 827.8L980 828.6L982 830.1L984 830.5L986 830.9L986.3 830.9L988 830.9L990 829.6L992 829.4L994 827.9L996 827.4L996.2 827.5L998 826L1000 825.5L1002 824.4L1004 823.5L1006 822.7L1008 821.5L1009.3 820.9L1010 821L1012 820.3L1014 819.3L1016 818.4L1018 818.7L1020 817.6L1022 816.5L1022.4 815.8L1024 814.9L1026 813.5L1028 811.4L1030 810.1L1031.1 808.6L1032 807.6L1034 804.6L1036 801.4L1038 798.5L1040 797L1041 796.6L1042 809.2L1042.3 815L1044 868.5L1044.2 869.8L1046 833.6L1046.5 820L1048 777L1048.6 760.7L1050 734.5L1051.4 699.8L1052 660M1054.5 660L1055.2 699.8L1056.5 724.2L1058 740L1058.5 744.8L1060.5 760.9L1062 770L1062.5 772.8L1064.5 783L1065.4 784.8L1066.5 782.6L1068.5 772.7L1069 770L1070.5 760L1072.5 743.8L1073 740L1074.5 731.8L1076.5 722.8L1078.5 704.2L1078.8 699.8L1079.5 660M1222 660L1222.5 699.8L1222.6 727.8L1224 749.6L1226 756.5L1227.3 760.6L1228 763.4L1230 779L1230.2 782.4L1230.6 826.1L1232 878.7L1232.3 880.8L1232.8 837L1233.9 793.3L1234 790.5L1235 770L1236 771L1236.5 771.5L1238 854.6L1238.5 869.8L1239.5 800L1240 756.1L1240.5 720L1241.5 690"/>
<path stroke="#6b8e50" d="M92 839.7L94 839.5L96 839.3L98 838.6L100 839.2L102 839L104 838.6L106 838.4L108 838.6L110 838.1L112 838.4L114 837.8L116 837.8L118 837.9L120 837.6L122 837.8L124 837.8L126 837.2L128 837.6L130 837.1L132 837.1L134 836.9L136 836.7L138 836.4L140 836L142 836.3L144 836.2L146 836.7L148 836.5L150 835.9L152 836.3L154 836L156 835.8L158 836L160 835.9L162 835.4L164 835.4L166 835.4L168 835L170 835.2L172 835.1L174 834.8L176 834.7L178 834.8L180 834.9L182 834.7L184 834.3L186 834.6L188 834.3L190 834.4L192 834.5L194 833.9L196 834L198 833.9L200 833.8L202 834.5L204 834.2L206 833.6L208 834L210 833.7L211.4 834.2L212 834L214 833.9L216 833.8L218 833.9L220 833.8L222 833.7L224 833.7L226 833.8L228 833.3L230 833.5L232 833.4L234 833.3L236 833.5L238 833L240 833.1L242 832.9L244 833.2L246 832.9L248 832.9L250 832.8L252 832.3L254 832.7L256 832.3L258 832.4L260 832.3L262 832.4L264 832.4L266 832.5L268 832.2L270 832L272 832L274 832.1L276 832.3L278 832L280 831.7L282 831.9L284 831.8L286 831.7L288 831.4L290 831L292 831.5L294 831.8L296 831.6L298 831L300 831.6L302 831.1L304 831.9L306 831.7L308 831.2L310 831.7L312 831.3L314 831.6L316 831.3L318 831L320 831.5L322 831L324 831.5L326 831.2L328 830.9L330 830.6L332 831.4L334 831.3L336 830.7L338 831.4L340 831L342 830.9L342.8 831L344 831L346 831.5L348 831.2L350 830.8L352 831.8L354 831.4L356 830.9L358 831.1L360 830.9L362 831.2L364 831.3L366 831.4L368 831.2L370 831.2L372 831.6L374 831.4L376 832L378 831.3L380 831.7L382 831.5L384 831.3L386 831.8L388 831.5L390 831.4L392 831.6L394 832L396 831.6L398 832.2L400 832L402 831.9L404 832.3L406 832.5L408 832.2L410 832.1L412 832.5L414 832.5L416 832L418 832.3L420 832.3L422 832.4L424 832.2L426 832.8L428 832.7L430 832.7L432 832.9L434 832.5L436 832.6L438 832.7L440 832.6L441.4 832.6L442 832.8L444 832.7L446 833.1L448 832.7L450 833L452 832.8L454 833.2L456 833.1L458 833.6L460 833.5L462 833.5L464 833.9L466 833.8L468 833.5L470 833.2L472 833L474 833.4L476 833.3L478 833.3L480 833.5L482 833.2L484 834.1L486 833.5L488 833.7L490 834.1L492 833.7L494 834.3L496 834.3L498 834L500 833.8L502 834L504 833.8L506 834.6L508 834.4L510 834.1L512 834.3L514 834.7L516 835L518 834.4L520 834.6L522 834.3L524 834.9L526 834.8L528 835.4L530 834.8L532 834.7L534 834.8L536 835.2L538 834.8L540 835.4L542 835.3L544 835.2L546 835.2L548 835.9L550 836.1L552 835.5L554 835.7L556 836L558 835.3L560 835.5L562 835.3L564 835.4L566 835.4L568 835.4L570 835.4L572 835.3L574 835.4L576 835.5L578 835.9L580 835.6L582 835.6L584 836.1L586 836.1L588 835.8L590 835.8L592 836.1L594 836.1L596 835.8L598 836.1L600 836L602 836.3L604 835.8L605.6 836.1L606 836L608 835.7L610 836.1L612 835.9L614 835.5L616 836.3L618 835.5L620 835.4L622 835.6L624 835.9L626 835.8L628 835.7L630 836.1L632 835.7L634 836L636 836.3L638 835.8L640 835L642 835.5L644 835.3L646 835.7L648 835.6L650 835.3L652 835.3L654 835.5L656 835.5L658 834.9L660 835.8L662 835.5L664 835.4L666 835.5L668 835L670 835.2L672 835.4L674 835.4L676 835.2L678 835L680 834.8L682 835.4L684 835.1L686 834.9L688 834.4L690 834.7L692 834.4L694 835.1L696 834.9L698 834.6L700 834.7L702 835.5L704 835.1L706 834.5L708 834.9L710 834.6L712 834.4L714 834.8L716 835.3L718 835.1L720 834.7L722 834.5L724 834.5L726 834.7L728 834L730 833.8L732 834.7L734 834.3L736 834.6L737 834.2L738 834.6L740 834.1L742 834.3L744 834.7L746 834.5L748 834.2L750 834.6L752 834.2L754 834L756 834.4L758 834.7L760 834.5L762 833.9L764 834.5L766 834.4L768 834L770 833.5L772 834.4L774 834.5L776 834.5L778 833.9L780 834L782 834.5L784 834.4L786 834.4L788 834.2L790 834.3L792 833.9L794 833.8L796 833.8L798 834.1L800 834L802 834.3L804 834.2L806 833.8L808 834.4L810 833.7L812 834.1L814 834.2L816 834.1L818 833.3L820 834.1L822 834.1L824 834.2L826 833.3L828 833.7L830 833.8L832 833.7L834 834.3L836 833.8L838 834.2L840 834.1L842 833.5L844 833.6L846 833.8L848 833.9L850 834L852 833.7L854 834L856 833.2L858 832.8L860 833.5L862 833.8L864 833.6L866 833.6L868 834L870 834.4L872 833.8L874 833.6L876 833.6L878 834.3L880 833.7L882 833.7L884 833.8L886 833.7L888 833.2L890 833.7L892 833.7L894 833.6L896 833.7L898 833.3L900 833.4L902 833.3L904 833.6L906 833.2L908 833.5L910 833L912 833.3L914 833.2L916 833.1L918 833.1L920 832.9L921.9 832.8L922 832.3L924 832.5L926 830.9L928 829.3L930 827.6L932 826.7L932.8 825.8L934 825.5L936 824.7L938 824L940 823.3L940.4 823.2L942 823.2L944 825.5L946 827.9L948 830.5L948.1 830.6L950 834.1L952 839.2L954 844.5L955.7 848L956 848.5L958 852L960 855.4L962 857.7L963.4 858L964 857.9L966 854.6L968 849.8L969.9 845.8L970 845.6L972 841.8L974 837.8L976 836.2L976.5 835.7L978 836.4L980 836.8L982 836.7L983 837.3L984 837.7L986 839.9L988 842.7L990 845.9L991.8 847.9L992 848.2L994 850L996 852L998 853.5L1000 855.1L1002 856.5L1002.7 856.6L1004 857.5L1006 858.1L1008 858.8L1010 859L1012 860L1014 860.6L1016 861L1018 862.2L1020 863.4L1022 864.6L1024 866.7L1026 869L1028 870.7L1028.9 871.4L1030 873.5L1032 877.2L1034 881.1L1036 884.2L1037.7 885.1L1038 884.8L1040 876.3L1040.3 874.2L1042 832.8L1043.1 804.3L1044 789.7L1045.8 772.6L1046 774L1047.5 826.1L1048 842.2L1049.7 891.7L1050 897.2L1052 925.6L1053 935.4L1054 944L1056 958.2L1057.3 962.2L1058 960.8L1060 953.2L1061.7 946.3L1062 945.4L1064 939.1L1065.4 937.1L1066 936.9L1068 939.5L1070 943.2L1070.5 944.1L1072 947.6L1074 953.7L1076 960.5L1077 963.8L1078 966.7L1080 971.9L1082 978.4L1083.6 986.3L1084 989.5L1086 1020M1111 1020L1111.3 986.3L1113 915.7L1113.1 913.5L1115 885.4L1116.3 869.8L1117 859.5L1119 828.8L1120.7 804.3L1121 800.4L1123 774.3L1125 750.3L1127 730.3L1127.3 727.8L1129 717.9L1131 706L1131.6 699.8L1133 660M1141 660L1141.5 699.8L1142.6 738.7L1143 748.9L1144.8 782.4L1145 784.6L1147 801.4L1147.4 802.2L1149 794L1150.2 782.4L1151 771.9L1153 735.7L1153.5 727.8L1155 711.6L1155.7 699.8L1156.5 660M1189 660L1189.5 700L1191 764.4L1191.5 770.4L1193 700L1193.3 660"/>
<path stroke="#78cfcf" d="M92 846.5L94 846.6L96 846.5L98 846.3L100 847L102 847.1L104 846.9L106 847.3L108 847.2L110 847.2L112 846.9L114 847.2L116 847.5L118 848.1L120 847.6L122 847.7L124 847.7L126 848L128 848.4L130 847.8L132 847.7L134 848.6L136 848.5L138 848.4L140 849L142 849L144 848.2L146 848.7L148 849.1L150 848.7L152 848.8L154 849.2L156 849L158 848.8L160 849L162 849L164 849.5L166 849L168 849.8L170 849.1L172 849.7L174 849.4L176 849.7L178 850.1L180 850.1L182 850.3L184 849.9L186 850L188 850.2L190 850.3L192 850.1L194 850.5L196 850.5L198 850.8L200 850.7L202 850.9L204 850.6L206 850.7L208 850.6L210 850.8L211.4 850.8L212 851.1L214 850.5L216 851.7L218 850.9L220 851.4L222 851.3L224 850.3L226 851.1L228 851.8L230 850.7L232 851.6L234 851.3L236 851.3L238 851.5L240 851L242 851.6L244 851.5L246 851.5L248 852.1L250 852.8L252 852.1L254 852.4L256 852.2L258 852.2L260 852.5L262 852.8L264 852.5L266 852.7L268 852.5L270 853.2L272 852.2L274 852.8L276 852.9L278 852.8L280 852.6L282 852.6L284 852.9L286 853L288 852.8L290 853L292 853.4L294 853.7L296 853.4L298 853.3L300 853.3L302 854.1L304 853.5L306 853.3L308 853.6L310 853.8L312 853.4L314 852.7L316 853L318 853L320 853L322 852.8L324 852.9L326 852.8L328 853.1L330 853L332 852.6L334 852.5L336 852.8L338 853L340 852.9L342 852.9L344 852L346 852.8L348 852.7L350 852.8L352 852.6L354 852.7L356 852.9L358 853.7L360 853.2L362 852.9L364 853L366 853L368 853L370 852.9L372 853L374 853.2L376 853.2L378 853L380 853.2L382 852.9L384 852.6L386 852.3L388 852.5L390 852.6L392 852.7L394 852.9L396 852.5L398 852.5L400 852.8L402 852.9L404 852.6L406 852.7L408 853L410 852.8L412 852.6L414 852L416 852.8L418 852.7L420 852.5L422 852.2L424 852.1L426 852.4L428 852.2L430 852.6L432 852L434 852.5L436 852.1L438 852.5L440 852L441.4 852.4L442 852.6L444 852.4L446 851.9L448 852.2L450 852.7L452 852.2L454 852.1L456 852.4L458 852L460 852.4L462 851.9L464 851.7L466 852L468 852.5L470 851.9L472 852.1L474 852.2L476 852L478 852.6L480 852.2L482 852.4L484 851.8L486 851.9L488 851.4L490 852.1L492 852L494 852.2L496 852.4L498 851.9L500 851.9L502 852.1L504 852.2L506 851.8L508 852.1L510 851.9L512 851.8L514 852.2L516 851.8L518 851.7L520 852.1L522 852L524 851.9L526 852L528 852.3L530 851.9L532 852.2L534 852.1L536 852.2L538 852.1L540 852L542 851.6L544 851.7L546 851.4L548 852.3L550 851.4L552 851.6L554 851.9L556 851.2L558 851.4L560 851.5L562 851.3L564 851.3L566 851.4L568 852L570 851.8L572 851.6L574 851.5L576 851.1L578 851.7L580 851.6L582 851.2L584 851.5L586 851.3L588 851.2L590 851.1L592 851.3L594 851.2L596 851.4L598 851.4L600 851.4L602 851.2L604 851.2L605.6 851.8L606 850.8L608 851.5L610 851.3L612 851.2L614 851.1L616 851.2L618 851.1L620 851L622 851.3L624 850.9L626 851.7L628 851.7L630 850.6L632 851.1L634 851.5L636 851.4L638 851.5L640 851.5L642 851.7L644 851.7L646 851.9L648 851.4L650 851.5L652 850.9L654 851.3L656 851L658 851.6L660 851.8L662 851.3L664 851L666 851.3L668 851.5L670 851.6L672 851.8L674 851.8L676 850.9L678 851.9L680 851.5L682 851.5L684 852L686 851.5L688 851.1L690 851.1L692 851.5L694 851.8L696 851.8L698 851.3L700 851.2L702 851.7L704 851.2L706 851.7L708 851.5L710 851.5L712 851.3L714 851.6L716 851.5L718 851.4L720 851.7L722 851.6L724 851.9L726 851.8L728 851.7L730 851.7L732 851.6L734 852.1L736 851.7L738 851.4L740 851.5L742 851.8L744 851.6L746 851.6L748 851.7L750 851.8L752 851.9L754 851.9L756 851.4L758 851.6L760 851.2L762 852.1L764 852.1L766 852.1L768 851.8L770 852L772 851.8L774 851.7L776 851.3L778 851.5L780 851.6L782 852.2L784 852.3L786 851.7L788 852L790 851.8L792 851.7L794 851.5L796 851.7L798 851.5L800 851.8L802 851.9L804 851.9L806 851.9L808 852L810 851.6L812 852L814 851.3L816 851.8L818 851.9L820 851.5L822 851.4L824 851.9L826 851.7L828 852L830 852.1L832 852L834 852L836 852.2L838 852.1L840 851.8L842 852.2L844 852.2L846 852.2L848 852.2L850 852.2L852 852.2L854 852L856 851.9L858 852.6L860 852.2L862 852.4L864 852L866 852.3L868 852L870 853.1L872 852.1L874 852.1L876 852.7L878 852.7L880 851.9L882 852.5L884 852.8L886 852.2L888 852.7L890 852.4L892 852.2L894 852.3L896 852.3L898 852.2L900 853.1L902 852.4L904 852.4L906 852.7L908 852.4L910 852.9L912 852.4L914 852.7L916 852.7L918 853L920 853.7L922 854.8L923.7 856.1L924 855.7L926 857L928 858.8L930 860.8L932 862.4L934 864.2L936 865L938 866.3L939.3 866.3L940 866.2L942 865.4L944 863.2L946 861.6L948 859.1L948.1 858.7L950 855.4L952 850L954 843.8L956 837.3L956.8 834.9L958 830.7L960 822.5L962 815.8L963.4 814.4L964 814.5L966 818.2L968 824.6L969.9 830.5L970 830.8L972 837.2L974 843.4L975.4 845.4L976 846.6L978 847.2L980 848.6L980.9 848.1L982 848.1L984 846.6L986 844.1L988 840.9L989.6 839.2L990 838.9L992 835.8L994 832.5L996 829.3L998 826.6L998.3 826.4L1000 824.1L1002 822.3L1004 820.3L1006 818.8L1008 816.7L1009.3 815.4L1010 815.1L1012 813.1L1014 812.5L1016 811L1018 809.7L1020 808.8L1022 806.9L1022.4 806.8L1024 804.2L1026 801.3L1028 797.5L1030 793.4L1031.1 791.2L1032 789.2L1034 783.6L1036 777.9L1038 773.8L1039.2 773.1L1040 775L1041 782.4L1042 848L1043.8 913.5L1044 917.6L1045.8 941.9L1046 940.5L1046.9 913.5L1048 844.4L1048.6 804.3L1050 743.7L1050.8 699.8L1051.2 660M1116 660L1116.3 699.8L1118 732.5L1118.5 738.7L1120 759.8L1122 784L1122.9 793.3L1124 804.2L1126 822.6L1128 835.5L1128.4 837L1130 841.7L1132 844.6L1132.1 844.7L1134 841.9L1136 834.9L1138 817.3L1140 788.5L1140.4 782.4L1142 751.6L1143.7 716.9L1144 712.6L1144.8 699.8L1145.5 660M1153 660L1153.5 699.8L1154.6 727.8L1155 738.9L1156.8 793.3L1157 799.8L1159 869.8L1161 932.4L1161.1 935.4L1162.9 986.3L1163 990.7L1163.5 1020M1165.3 1020L1165.5 986L1166.6 980.2L1167.3 980.9L1168.3 986.3L1168.5 1020M1188.5 1020L1188.9 986L1190.2 869.8L1190.5 855.4L1191.7 820.7L1192.5 847.9L1192.8 869.8L1193.3 986L1193.5 1020"/>
<path stroke="#ffde1f" d="M92 847.3L94 847.4L96 847.8L98 847.5L100 847.7L102 847.6L104 848.3L106 847.8L108 848.2L110 848.7L112 847.7L114 848.2L116 848.5L118 848.9L120 848.5L122 848.8L124 848.7L126 849.2L128 848.7L130 849.3L132 848.4L134 848.9L136 850L138 849.8L140 849.5L142 850.3L144 850L146 850.2L148 849.7L150 850L152 850L154 849.4L156 850.1L158 850L160 850.6L162 850.7L164 850.2L166 850.3L168 850.8L170 850.9L172 850.8L174 850.9L176 851.3L178 851.3L180 851.5L182 851.4L184 851.2L186 851L188 851.8L190 851.6L192 851.8L194 851.8L196 851.5L198 852L200 851.5L202 852.2L204 852.1L206 852.8L208 852.5L210 852.4L211.4 852.6L212 852.6L214 852.2L216 852.4L218 852.5L220 853.3L222 852.8L224 852.3L226 853.1L228 853.8L230 853L232 854.3L234 853.5L236 853.8L238 853.4L240 853.6L242 853.5L244 853.8L246 853.4L248 854.4L250 854L252 854.4L254 854.6L256 854.4L258 854.7L260 854.9L262 854.8L264 855.1L266 855.2L268 855L270 855.1L272 855.3L274 855.7L276 856.1L278 856.2L280 855.9L282 856.1L284 856L286 856.3L288 856.1L290 856.3L292 856.2L294 856.3L296 856.7L298 856L300 856.3L302 856.2L304 856.6L306 856.8L308 856.2L310 855.5L312 856.5L314 856.5L316 855.9L318 856.3L320 856.2L322 855.6L324 856.3L326 856.3L328 856.2L330 855.8L332 855.9L334 855.7L336 855.8L338 855.4L340 856L342 855.6L344 854.8L346 855.7L348 855.2L350 855L352 855.2L354 854.6L356 855.1L358 854.4L360 854.7L362 855.3L364 855.2L366 854.6L368 854.3L370 854.8L372 854.5L374 854.5L375.7 854.6L376 854.2L378 854.6L380 853.7L382 854.6L384 853.7L386 853.6L388 853.5L390 853.8L392 853.5L394 853.4L396 853.2L398 853.1L400 852.9L402 852.3L404 852.1L406 852.1L408 852.6L410 852.6L412 852.5L414 852.5L416 852.3L418 852L420 851.7L422 851.6L424 852.2L426 851.9L428 851.1L430 851.3L432 851.3L434 851.5L436 850.9L438 850.9L440 851L441.4 850.2L442 850.5L444 850.6L446 850.3L448 851L450 850.5L452 850.3L454 849.9L456 850.3L458 850.3L460 850L462 850L464 849.7L466 850L468 850.3L470 850.3L472 850.1L474 850.1L476 849.6L478 849.5L480 849.9L482 849.6L484 849.2L486 849.5L488 849.5L490 849.5L492 849.3L494 849L496 849.1L498 849.4L500 848.8L502 848.5L504 848.7L506 848.2L507.1 848.5L508 848.2L510 848.3L512 848L514 848.3L516 848.5L518 847.8L520 847.4L522 847.7L524 847.5L526 847.6L528 847.5L530 847.9L532 847.6L534 847L536 847.4L538 847.5L540 847.5L542 847L544 846.8L546 847.2L548 846.6L550 846.7L552 846.7L554 846.8L556 846.6L558 846.3L560 846.6L562 846.2L564 846.1L566 846.6L568 846.2L570 845.6L572 845.7L574 845.7L576 845.5L578 845.2L580 845.8L582 845.8L584 845.6L586 845.5L588 845.5L590 845.5L592 845.1L594 845.3L596 845.1L598 845.4L600 845.2L602 844.8L604 844.9L605.6 845.6L606 844.9L608 845.3L610 845L612 845.5L614 845.3L616 845.2L618 845.1L620 845.3L622 845.6L624 845.7L626 845L628 845.8L630 845.4L632 845L634 845.3L636 845L638 845.1L640 845L642 845.2L644 845.3L646 844.9L648 845.5L650 845.3L652 845.8L654 845.8L656 845.8L658 845.6L660 846L662 845.5L664 845.4L666 845.9L668 845.1L670 845.8L671.3 845.8L672 845.7L674 846.2L676 846.1L678 846L680 846L682 846.4L684 846.1L686 846.3L688 846.8L690 846.9L692 847.4L694 846.7L696 846.6L698 847.4L700 847.6L702 847.4L704 847.9L706 848.2L708 847.7L710 847.8L712 847.7L714 848.2L716 848.3L718 848.4L720 848L722 848.2L724 848L726 848.1L728 848.3L730 848.4L732 848.9L734 849.2L736 849.2L737 849.2L738 849L740 849.2L742 849.3L744 849.1L746 849.2L748 849.1L750 849.1L752 849.3L754 849L756 849.5L758 848.8L760 849.4L762 849L764 849.9L766 849.8L768 849.3L770 849.4L772 849.2L774 849.6L776 849.9L778 850.5L780 849.5L782 850.2L784 849.8L786 850.1L788 850.2L790 850.1L792 850.1L794 849.9L796 849.9L798 850L800 850.3L802 849.6L804 849.8L806 849.7L808 849.8L810 849.9L812 850.5L814 850.8L816 850.5L818 849.8L820 850.2L822 849.9L824 850.3L826 850.5L828 850.3L830 850.3L832 850.1L834 849.6L835.6 849.6L836 850.1L838 850.2L840 850.4L842 850L844 850.1L846 850.1L848 850.4L850 850.1L852 849.7L854 850.2L856 850L858 850.1L860 849.5L862 849.9L864 849.4L866 849.3L868 849.8L870 849.9L872 850.1L874 850.3L876 849.8L878 850.4L880 849.8L882 850.1L884 849.6L886 850L888 849.8L890 849.9L892 850.1L894 849.5L896 850L898 849.8L900 850L902 849.9L904 849.6L906 849.5L908 849.1L910 849.4L912 848.9L914 849L916 848.2L918 848.7L920 847.9L921.9 848.3L922 847.9L924 847.9L926 847.3L928 847L930 846.3L932 846.2L934 845.7L936 845.5L936.1 845.8L938 845.3L940 846.2L942 846.4L944 846.8L946 848.2L948 849.1L948.1 849.7L950 850.7L952 853.1L954 856.1L956 859.6L956.8 861.1L958 864.1L960 870.6L962 875.9L962.3 876.4L964 878L965.6 879.5L966 879.4L968 876.3L969.9 872L970 871.8L972 867.5L974 863L976 859.9L976.5 858.7L978 857.2L980 855.7L982 854.4L983 854.5L984 854.6L986 855.2L988 856.4L990 858.2L991.8 859.1L992 858.8L994 860.2L996 861.9L998 862.9L1000 864.6L1002 866L1004 867.4L1004.9 867.7L1006 868.3L1008 869.1L1010 870.3L1012 870.9L1014 872.5L1016 872.9L1018 873.9L1020 875.4L1020.2 875.4L1022 876.6L1024 878.1L1026 879.5L1028 881.4L1030 883.6L1031.1 885.3L1032 886.4L1034 890.6L1036 895.2L1038 898.9L1039.9 900.8L1040 900.3L1041.6 880.7L1042 869L1043.1 826.1L1044 808.2L1044.7 801.6L1046 826.1L1047.5 891.7L1048 911L1049 946.3L1050 975.9L1050.3 986.3L1051 1020M1058 1020L1058.4 986.3L1060 962.7L1060.6 957.2L1062 942L1063.5 931L1064 929.1L1065.4 925.9L1066 926.8L1067.8 933.2L1068 934.1L1070 950.1L1071.5 963.8L1072 967.1L1074 980.7L1074.4 986.3L1075 1020M1219 1020L1219.2 986.3L1220.1 902.7L1221 869.4L1221.4 858.9L1223 826.1L1223.6 782.4L1225 768L1226.2 760.6L1227 753.9L1229 734.8L1229.5 727.8L1230.6 699.8L1231 660"/>
<path stroke="#f56296" d="M1242 690L1242.3 727.8L1242.8 690M1246.3 690L1246.4 739.8L1247 690L1247.5 716.9L1248 690"/>
<path stroke="#ffde1f" d="M1232.8 690L1233.9 804L1235 916L1235.6 780L1236.2 690M1238 690L1239 800L1239.6 891.7L1240.4 690M1240.4 690L1241 880L1242.2 856.7L1243.7 885.2L1244.8 971.5L1246.3 842.5L1247.6 922.3L1249.2 946.4L1250.7 907L1252 974.8L1253.6 907L1254.6 986.3L1256.4 906L1257.3 986.3L1257.5 1020M1249.5 925V950M1250.5 930V955"/>
</g>
<rect x="111" y="719" width="19" height="19" fill="#f56296" shape-rendering="crispEdges"/>
<text x="137" y="734.0" font-size="12" fill="#eeeeee" textLength="233.8" lengthAdjust="spacingAndGlyphs">H1:SUS-ITMX_L2_MASTER_OUT_UL_DQ</text>
<rect x="111" y="744" width="19" height="19" fill="#6b8e50" shape-rendering="crispEdges"/>
<text x="137" y="759.0" font-size="12" fill="#eeeeee" textLength="231.1" lengthAdjust="spacingAndGlyphs">H1:SUS-ITMX_L2_MASTER_OUT_LL_DQ</text>
<rect x="111" y="769" width="19" height="19" fill="#78cfcf" shape-rendering="crispEdges"/>
<text x="137" y="784.0" font-size="12" fill="#eeeeee" textLength="235" lengthAdjust="spacingAndGlyphs">H1:SUS-ITMX_L2_MASTER_OUT_UR_DQ</text>
<rect x="111" y="794" width="19" height="19" fill="#ffde1f" shape-rendering="crispEdges"/>
<text x="137" y="809.0" font-size="12" fill="#eeeeee" textLength="232.3" lengthAdjust="spacingAndGlyphs">H1:SUS-ITMX_L2_MASTER_OUT_LR_DQ</text>
<path d="M92.5 700V986.5H1274" fill="none" stroke="#969696" stroke-width="1" shape-rendering="crispEdges"/>
<g font-size="13" fill="#eeeeee">
<g text-anchor="end" clip-path="url(#a5)">
<text x="87" y="705.6" textLength="44" lengthAdjust="spacingAndGlyphs">200000</text>
<text x="87" y="777.1" textLength="44" lengthAdjust="spacingAndGlyphs">100000</text>
<text x="87" y="848" textLength="7.3" lengthAdjust="spacingAndGlyphs">0</text>
<text x="87" y="920.1" textLength="48.4" lengthAdjust="spacingAndGlyphs">-100000</text>
<text x="87" y="991.6" textLength="48.4" lengthAdjust="spacingAndGlyphs">-200000</text>
</g>
<g text-anchor="middle">
<text x="207.4" y="1002" textLength="61.7" lengthAdjust="spacingAndGlyphs">-1s,125ms</text>
<text x="453.2" y="1002" textLength="18.3" lengthAdjust="spacingAndGlyphs">-1s</text>
<text x="698.9" y="1002" textLength="44" lengthAdjust="spacingAndGlyphs">-875ms</text>
<text x="944.6" y="1002" textLength="44" lengthAdjust="spacingAndGlyphs">-750ms</text>
<text x="1190.4" y="1002" textLength="44" lengthAdjust="spacingAndGlyphs">-625ms</text>
</g>
<text transform="translate(31 843) rotate(-90)" text-anchor="middle" textLength="40.4" lengthAdjust="spacingAndGlyphs">counts</text>
</g>
</g>
<g id="plot6">
<g shape-rendering="crispEdges" fill="none" stroke-width="1">
<path stroke="#0f0f0f" d="M1544.5 700V986M1592.5 700V986M1640.5 700V986M1688.5 700V986M1784.5 700V986M1832.5 700V986M1880.5 700V986M1928.5 700V986M2024.5 700V986M2072.5 700V986M2120.5 700V986M2168.5 700V986M2264.5 700V986M2312.5 700V986M2359.5 700V986M2407.5 700V986M1448.5 700V986M2503.5 700V986M1400.5 700V986"/>
<path stroke="#1b1b1b" d="M1496.5 700V986M1736.5 700V986M1976.5 700V986M2216.5 700V986M2455.5 700V986"/>
<path stroke="#0b0b0b" d="M1355 714.5H2537M1355 729.5H2537M1355 743.5H2537M1355 757.5H2537M1355 786.5H2537M1355 800.5H2537M1355 814.5H2537M1355 829.5H2537M1355 857.5H2537M1355 872.5H2537M1355 886.5H2537M1355 900.5H2537M1355 929.5H2537M1355 943.5H2537M1355 957.5H2537M1355 972.5H2537"/>
<path stroke="#141414" d="M1355 700.5H2537M1355 771.5H2537M1355 914.5H2537"/>
<path stroke="#1c1c1c" d="M1355 843.5H2537"/>
</g>
<rect x="1365.5" y="710.5" width="279" height="112" fill="#141414" fill-opacity="0.85" stroke="#444444" stroke-width="1" shape-rendering="crispEdges"/>
<g clip-path="url(#c6)" fill="none" stroke-width="1" stroke-linejoin="round" shape-rendering="crispEdges">
<path stroke="#f78e80" d="M1355 815.6L1357 815.6L1359 815.3L1361 815.1L1363 815L1365 815L1367 814.9L1369 815.1L1371 814.7L1373 814.6L1375 814.6L1377 814.4L1379 814.4L1381 813.8L1383 814L1385 814L1387 814.4L1389 814.2L1391 814.1L1393 814.4L1395 813.8L1397 814.2L1399 813.9L1401 813.5L1403 814.1L1405 813.3L1407 813.3L1409 813.4L1411 813.4L1413 813.2L1415 812.7L1417 813.1L1419 813.1L1421 813.6L1423 813.2L1425 812.7L1427 812.4L1429 812.7L1431 812.2L1433 812.4L1435 812.4L1437 812.2L1439 812.3L1441 812.2L1443 812L1445 812.4L1447 812.2L1449 811.9L1451 811.7L1453 811.8L1455 811.8L1457 811.8L1459 811.9L1461 811.6L1463 811.2L1465 811.9L1467 811.7L1469 811.6L1471 811.7L1471.4 810.9L1473 811.1L1475 811L1477 811.4L1479 810.7L1481 810.8L1483 811.2L1485 810.9L1487 810.5L1489 811L1491 810L1493 810.4L1495 810.1L1497 810.2L1499 809.8L1501 809.5L1503 809.8L1505 809.3L1507 809.8L1509 809.6L1511 809.8L1513 809.4L1515 809.4L1517 809.6L1519 809.8L1521 808.8L1523 809.2L1525 809.2L1527 808.6L1529 808.8L1531 809.1L1533 808.7L1535 808.7L1537 809.3L1539 808.7L1541 808.7L1543 808.4L1545 808.7L1547 808.5L1549 809.2L1551 809L1553 808.3L1555 809L1557 808.5L1559 808.2L1561 808.3L1563 808.1L1565 807.7L1567 807.3L1569 807.5L1571 807.7L1573 807.5L1575 807.3L1577 807.7L1579 807L1581 807.6L1583 807.3L1585 807.4L1587 806.9L1589 807.3L1591 807.2L1593 807L1595 807.4L1597 807.5L1599 807.6L1601 807.4L1602.8 807.1L1603 807.3L1605 806.8L1607 807L1609 807.6L1611 807.6L1613 807.4L1615 807.3L1617 807.5L1619 807.5L1621 806.8L1623 807.1L1625 807.7L1627 807.6L1629 807.4L1631 807.3L1633 807.2L1635 807.1L1637 807L1639 806.9L1641 807.4L1643 807.3L1645 807.4L1647 808L1649 807.7L1651 807.4L1653 807.8L1655 807.3L1657 807.9L1659 807.8L1661 807.7L1663 807.9L1665 808.1L1667 807.7L1669 807.6L1671 808.4L1673 807.9L1675 808.3L1677 807.6L1679 807.9L1681 807.7L1683 808L1685 807.8L1687 807.7L1689 808.4L1691 808.1L1693 807.5L1695 808L1697 807.9L1699 807.7L1701 807.9L1701.4 807.9L1703 808.1L1705 807.9L1707 807.7L1709 808.2L1711 808.6L1713 808L1715 808.6L1717 808.7L1719 808.5L1721 808.7L1723 808.5L1725 808.5L1727 808.4L1729 808.8L1731 809.1L1733 808.6L1735 809.1L1737 808.4L1739 808.9L1741 808.8L1743 809.5L1745 809L1747 809.3L1749 808.5L1751 809.1L1753 809.3L1755 809.2L1757 808.5L1759 809.4L1761 809.6L1763 809.9L1765 809.7L1767 809.3L1769 809.7L1771 810L1773 809.7L1775 810L1777 809.7L1779 809.9L1781 810.1L1783 809.8L1785 810.8L1787 810.2L1789 810.2L1791 809.9L1793 810.1L1795 810.2L1797 810L1799 810.1L1801 810.6L1803 810.6L1805 810L1807 810.2L1809 810.7L1811 810.8L1813 810.9L1815 810.4L1817 810.9L1819 810.7L1821 810.5L1823 810.6L1825 811L1827 811L1829 811.2L1831 810.8L1832.8 811L1833 810.8L1835 811L1837 811L1839 811.1L1841 811.4L1843 811.4L1845 811.5L1847 811.5L1849 811.8L1851 811.6L1853 811.9L1855 811.9L1857 812L1859 811.9L1861 811.6L1863 811.6L1865 812.5L1867 812.2L1869 812.3L1871 812L1873 812.1L1875 813L1877 812L1879 812.3L1881 812.2L1883 812.1L1885 812L1887 812.3L1889 812.5L1891 812.4L1893 812.8L1895 812.3L1897 812.7L1899 813.1L1901 813.1L1903 812.6L1905 812.2L1907 813.2L1909 813.3L1911 813.1L1913 813.6L1915 813.3L1917 813.4L1919 813.2L1921 813.6L1923 813.4L1925 813.4L1927 813.8L1929 813.5L1931 813.2L1931.3 813.8L1933 813.9L1935 813.5L1937 813.6L1939 813.7L1941 813.7L1943 813.8L1945 814L1947 813.6L1949 814.4L1951 813.7L1953 813.7L1955 814.3L1957 814.4L1959 813.9L1961 813.8L1963 813.6L1965 814.2L1967 813.8L1969 813.6L1971 814L1973 814.2L1975 814L1977 814.4L1979 814.1L1981 814L1983 813.9L1985 814.1L1987 814.3L1989 814.2L1991 814.3L1993 814.2L1995 814.3L1997 814.4L1999 814.1L2001 813.7L2003 814.5L2005 814.2L2007 813.8L2009 813.9L2011 813.7L2013 813.5L2015 813.8L2017 813.5L2019 813.9L2021 813.8L2023 814.1L2025 813.9L2027 814L2029 813.9L2031 813.7L2033 813.5L2035 814.1L2037 813.8L2039 813.7L2041 814L2043 813.8L2045 813.8L2047 814.1L2049 814.5L2051 814L2053 813.9L2055 814.2L2057 814.7L2059 814.1L2061 814.7L2063 814.3L2065 814.7L2067 814.4L2069 814L2071 814.2L2073 814.9L2075 814.3L2077 814.5L2079 814.2L2081 814.2L2083 814.3L2085 814.3L2087 814.8L2089 814.3L2091 814.2L2093 814.2L2095 814L2097 813.9L2099 814.5L2101 813.9L2103 814.7L2105 814.6L2107 814.4L2109 814.2L2111 814.4L2113 814.4L2115 814.6L2117 814.3L2119 814.3L2121 814.5L2123 814.4L2125 814.3L2127 814L2129 814.2L2131 814.5L2133 814.7L2135 814.8L2137 815.1L2139 815.1L2141 814.7L2143 815.1L2145 814.6L2147 814.4L2149 815.1L2151 814.3L2153 814.6L2155 814.6L2157 815L2159 814.5L2160 814.8L2161 814.4L2163 814.1L2165 814.4L2167 814.3L2169 813.8L2171 813.7L2173 813.6L2175 814L2177 813.8L2179 813.7L2181 813.8L2181.8 813.5L2183 813.7L2185 813.6L2187 813.7L2189 814.1L2191 814.8L2192.8 815L2193 815.3L2195 815.6L2197 817.7L2199 820L2201 821.6L2203 823.5L2203.7 824L2205 824.4L2207 826.2L2209 826.5L2211 827.6L2211.8 827.3L2213 826.7L2215 825L2217 822.4L2219 819.5L2221 814.8L2223 808.1L2225 801.4L2225.5 799.9L2227 795.3L2229 789.3L2231 784.6L2233 781.1L2234.3 780.2L2235 780.7L2237 785.2L2237.6 786.8L2239 791.8L2241 800.8L2241.9 804.2L2243 808L2245 814.5L2247 819.1L2247.4 819.3L2249 821.1L2251 823L2253 823.4L2254 823.9L2255 823.5L2257 823L2259 822.4L2261 821.4L2263 820.7L2264.9 820.8L2265 820.7L2267 821.3L2269 821.9L2271 823.7L2271.4 824.3L2273 825.7L2275 828.1L2277 831.2L2279 834.6L2279.1 834.8L2281 838.6L2283 843.2L2285 848.1L2286.7 852.3L2287 853L2289 858L2291 863L2293 868.1L2295 873L2295.5 874.2L2297 877.6L2299 882L2301 886.4L2303 890.9L2304.2 893.8L2305 895.5L2307 900.5L2307.5 902.6L2309 921.3L2309.7 935.3L2311 976.3L2311.2 986.2L2311.6 1020M2317.3 1020L2317.7 986L2319 935.3L2319.3 928.9L2321.2 902.6L2321.3 902L2323.3 892.3L2323.9 891.6L2325.3 896.1L2326 900.4L2327.3 919.2L2328.2 935.3L2329.3 952.1L2330.4 968.1L2331.3 977.1L2331.8 986.2L2332.2 1020M2370 1020L2370.2 986.2L2371.5 891.6L2372 858.5L2373 804.2L2374 772L2374.5 766L2375.9 826.1L2376 831.2L2377.4 913.5L2378 938.4L2379.1 986.2L2379.5 1020M2390 1020L2390.5 986.2L2392 960.6L2394 943.9L2394.9 935.3L2396 921.5L2398 896.2L2399.2 885.1L2400 879.4L2402 867.2L2403.6 863.3L2404 863.7L2406 877.2L2406.9 887.3L2408 913.2L2409.1 946.3L2410 963.7L2410.8 986.2L2411.2 1020M2419.5 1020L2420 986.2L2421.5 955.2L2423.3 939.7L2423.5 938.9L2425.5 935L2427 931L2427.5 926.7L2429.2 891.6L2429.5 882.6L2431.4 804.2L2431.5 801.4L2433.1 767.1L2433.5 763.6L2434.6 758.1L2435.5 762.9L2436.4 769.3L2437.5 772.5L2439.5 776.8L2440.3 780.2L2441.5 803.2L2442.3 826.1L2443.5 865.1L2444 880.7L2445.5 915.6L2446.2 935.3L2447.3 986.2L2447.5 1007.2L2447.6 1020M2449.8 1020L2450.1 986.2L2451.7 935.3L2451.8 931.5L2453.2 869.8L2453.8 848.6L2455 804.2L2455.8 748.7L2456 738.7L2457.6 699.8L2457.8 683.4L2458 660"/>
<path stroke="#bf3fb5" d="M1355 839.4L1357 838.8L1359 838.9L1361 838.6L1363 838.1L1365 838L1367 837.6L1369 837.7L1371 837L1373 837.4L1375 837.1L1377 837L1379 836.9L1381 837.3L1383 836.8L1385 836.8L1387 836.8L1389 836.8L1391 836.5L1393 836L1395 835.6L1397 835.5L1399 835.4L1401 835.4L1403 835.1L1405 835.3L1407 834.8L1409 835.1L1411 834.9L1413 834.3L1415 834.5L1417 833.3L1419 834.3L1421 833.9L1423 833.8L1425 833.2L1427 834.1L1429 833.3L1431 833.2L1433 833.5L1435 832.9L1437 832.6L1438.6 832.8L1439 832.3L1441 832.6L1443 832.3L1445 832.4L1447 831.8L1449 832.1L1451 831.9L1453 832.1L1455 831.2L1457 831.7L1459 831.3L1461 831.2L1463 830.5L1465 830.7L1467 830.7L1469 830.1L1471 829.9L1473 830L1475 830.5L1477 830L1479 830L1481 829.7L1483 829.5L1485 829.4L1487 829.1L1489 829.5L1491 829.1L1493 828.9L1495 828.4L1497 828.6L1499 828.3L1501 828.3L1503 828.5L1505 827.9L1507 828L1509 828.1L1511 828L1513 827.5L1515 827.7L1517 827.6L1519 827L1521 826.6L1523 826.6L1525 827.1L1527 826.9L1529 826.6L1531 826.7L1533 826.7L1535 826.7L1537 826.8L1537.1 827.5L1539 826.7L1541 826.9L1543 826.6L1545 826.6L1547 826.5L1549 826.5L1551 826.3L1553 826.5L1555 826.3L1557 825.8L1559 826.5L1561 825.6L1563 825.9L1565 826.4L1567 825.6L1569 826.1L1571 826.1L1573 825.8L1575 825.2L1577 826.1L1579 825.8L1581 825.6L1583 826L1585 825.5L1587 825.9L1589 825.6L1591 825.9L1593 825.4L1595 825.4L1597 825.3L1599 825.3L1601 825.5L1602.8 825.2L1603 825.4L1605 825.6L1607 825.2L1609 824.8L1611 825.3L1613 825.4L1615 825.8L1617 825.9L1619 825.9L1621 825.7L1623 826L1625 825.5L1627 826.4L1629 826.2L1631 826.2L1633 826.1L1635 826.4L1637 826.4L1639 826.8L1641 826.4L1643 827.1L1645 827.1L1647 827.7L1649 827.5L1651 827.6L1653 827.8L1655 827.9L1657 828L1659 827.8L1661 828L1663 828.2L1665 828.4L1667 828.2L1668.5 828.2L1669 828.5L1671 829L1673 828.9L1675 829.3L1677 829.5L1679 829.7L1681 829.4L1683 829.5L1685 829.3L1687 829.7L1689 830.1L1691 829.7L1693 830.5L1695 830.7L1697 830.4L1699 830.9L1701 830.6L1703 830.8L1705 831.1L1707 831.4L1709 831.6L1711 831.5L1713 832.3L1715 832L1717 832.2L1719 832.4L1721 832.4L1723 832.5L1725 832.5L1727 832.3L1729 833.2L1731 832.7L1733 832.7L1734.2 832.9L1735 832.8L1737 833.9L1739 833.6L1741 834.1L1743 834.2L1745 834.2L1747 834.3L1749 834.1L1751 834.4L1753 834.3L1755 834.5L1757 834.4L1759 835L1761 834.9L1763 834.7L1765 834.4L1767 835.2L1769 835.3L1771 835.2L1773 835.1L1775 835.6L1777 835.9L1779 835.3L1781 835.9L1783 835.4L1785 835.9L1787 836.5L1789 836.1L1791 836.2L1793 836L1795 836.1L1797 836.8L1799 836.8L1801 836.4L1803 836.5L1805 836.7L1807 837.4L1809 837L1811 837.4L1813 837.2L1815 837.1L1817 837.7L1819 837.5L1821 837.3L1823 837.4L1825 837.5L1827 837.5L1829 837.3L1831 838L1832.8 837.9L1833 838L1835 837.7L1837 838L1839 837.9L1841 838.2L1843 838.2L1845 838L1847 837.7L1849 837.5L1851 837.8L1853 837.8L1855 837.9L1857 837.8L1859 838.6L1861 838.3L1863 837.7L1865 838L1867 838L1869 838.4L1871 838.6L1873 838.1L1875 838.4L1877 838.3L1879 838.5L1881 838.6L1883 838.3L1885 838.4L1887 838.2L1889 838.2L1891 838.1L1893 838.5L1895 838.4L1897 838.4L1898.5 838.6L1899 838.6L1901 838.4L1903 838.5L1905 839L1907 838.6L1909 838.9L1911 838.1L1913 838L1915 838.3L1917 838.4L1919 837.9L1921 838.3L1923 838.2L1925 838.1L1927 837.7L1929 837.7L1931 837.1L1933 837.4L1935 837.4L1937 837.6L1939 836.7L1941 836.7L1943 836.5L1945 836.9L1947 835.9L1949 836.2L1951 836.9L1953 836.4L1955 835.7L1957 835.9L1959 836L1961 835.9L1963 835.6L1964.2 835.5L1965 835.8L1967 835.5L1969 835.6L1971 835.4L1973 835.1L1975 835.6L1977 834.9L1979 835.1L1981 834.7L1983 834.8L1985 834.7L1987 834.5L1989 834.7L1991 834.9L1993 834.9L1995 834.7L1997 834.2L1999 834.5L2001 834.1L2003 834.3L2005 833.4L2007 834L2009 833.3L2011 833.7L2013 833.2L2015 833.4L2017 833L2019 832.5L2021 832.7L2023 832.8L2025 832.8L2027 832L2029 832.2L2029.9 832.3L2031 832.5L2033 832.5L2035 832.1L2037 831.9L2039 832.2L2041 832L2043 832.3L2045 831.8L2047 831.9L2049 831.4L2051 831.7L2053 831.5L2055 831.6L2057 831.1L2059 831.2L2061 831L2063 831.1L2065 831.3L2067 831.8L2069 831L2071 831.1L2073 830.8L2075 831L2077 830.9L2079 831.1L2081 830.9L2083 831.3L2085 831L2087 830.3L2089 830.8L2091 830.7L2093 830.1L2095 830.4L2095.6 830.4L2097 830.4L2099 830.7L2101 830.2L2103 830.8L2105 830.9L2107 830.8L2109 830.7L2111 830.9L2113 830.8L2115 831.2L2117 831L2119 831.4L2121 830.8L2123 831.3L2125 830.7L2127 830.9L2129 830.6L2131 831L2133 830.8L2135 831.1L2137 831.4L2139 831.1L2141 831.2L2143 831.4L2145 831.2L2147 831.1L2149 831.4L2151 831.6L2153 831.7L2155 831.7L2157 831.3L2159 831.7L2160 831.9L2161 831.5L2163 831.8L2165 831.7L2167 832.1L2169 832.6L2171 832.4L2173 832.4L2175 832.9L2177 833L2179 833.4L2181 832.8L2181.8 832.9L2183 833.1L2185 832.6L2187 833.2L2189 832.3L2191 832.6L2193 832.3L2195 832.6L2197 832.9L2199 832.8L2201 832.8L2203 832.7L2205 831.9L2207 832.5L2209 831.9L2211 832.2L2211.8 832.2L2213 832.3L2215 833.7L2217 835L2219 837.5L2221 839L2223 841.3L2225 843.7L2227 846.6L2227.7 847.9L2229 851.8L2231 860.5L2233 867.2L2233.2 867.6L2235 869.9L2235.8 870.3L2237 868.9L2239 864.8L2239.7 863.2L2241 859.8L2243 853.5L2245 848.3L2245.2 847.9L2247 844.8L2249 841.5L2251 839.7L2253 837.3L2254 837.3L2255 836.9L2257 836.7L2259 835.9L2261 835.9L2263 835.5L2264.9 834.9L2265 834.9L2267 834.4L2269 834.2L2271 833.2L2273 832.1L2275 831L2275.8 830.3L2277 829.5L2279 827.4L2281 824.9L2283 821.8L2284.5 819.5L2285 818.7L2287 815.2L2289 811.2L2291 807L2293 802.7L2295 798.7L2295.5 797.7L2297 795L2299 791.7L2301 788.5L2303 785.1L2305 781.2L2306.4 778L2307 776.7L2309 770.4L2309.2 769.3L2310.8 727.8L2311 720.3L2311.4 699.8L2311.8 660M2316.3 660L2316.7 699.8L2317.3 738.7L2318.3 781.2L2319.1 804.2L2320.3 828.2L2321 833.7L2322.3 821.7L2323.4 804.2L2324.3 789.6L2326.3 752.1L2327.1 738.7L2328.3 726L2330 699.8L2330.3 679.1L2330.5 660"/>
<path stroke="#fff0d2" d="M1355 850.3L1357 850.5L1359 851.1L1361 851.1L1363 851.2L1365 851L1367 851.3L1369 851.8L1371 852.1L1373 851.6L1375 851.9L1377 852.1L1379 852.3L1381 852.3L1383 852.6L1385 852.2L1387 853.2L1389 852.6L1391 853.1L1393 853.4L1395 853.7L1397 853.7L1399 853.9L1401 854.1L1403 853.9L1405 854.2L1407 854.5L1409 854L1411 853.9L1413 854.2L1415 854.9L1417 855.1L1419 854.9L1421 855.1L1423 855.3L1425 855.6L1427 855L1429 855.5L1431 855.6L1433 855.9L1435 855.9L1437 855.8L1438.6 856.1L1439 855.5L1441 857L1443 856.6L1445 856.7L1447 856.6L1449 856.9L1451 857.4L1453 857.6L1455 857.3L1457 857.1L1459 857.5L1461 857.5L1463 857.9L1465 857.5L1467 857.9L1469 858.2L1471 858.1L1473 858.6L1475 858.1L1477 858L1479 858.4L1481 858.8L1483 858.6L1485 858.6L1487 859L1489 859.1L1491 859L1493 859.2L1495 859.4L1497 859.7L1499 859.6L1501 859.5L1503 859.7L1505 859.8L1507 860.1L1509 860.3L1511 860.1L1513 860.3L1515 860.5L1517 860.9L1519 860.8L1521 861.3L1523 860.8L1525 861L1527 860.7L1529 860.6L1531 861.1L1533 861.2L1535 861.2L1537 861.3L1537.1 861.1L1539 861.2L1541 861.5L1543 861.8L1545 862L1547 861L1549 862.1L1551 862.4L1553 862.5L1555 862.4L1557 862.6L1559 862.3L1561 862.5L1563 862.8L1565 862.4L1567 862.5L1569 862.9L1571 862.5L1573 862.9L1575 862.7L1577 863.2L1579 863.3L1581 863.1L1583 863.1L1585 863.3L1587 862.9L1589 863.4L1591 863.6L1593 863.8L1595 863.3L1596.2 863.4L1597 863.8L1599 863.8L1601 863.3L1603 863.6L1605 863.6L1607 863.4L1609 862.9L1611 863L1613 863.3L1615 863.7L1617 863.1L1619 863.4L1621 863.5L1623 862.6L1625 862.7L1627 863.2L1629 863L1631 862.8L1633 862.5L1635 862.6L1637 862.2L1639 862.8L1641 861.8L1643 861.5L1645 861.9L1647 862.1L1649 861.4L1651 861.5L1653 861.2L1655 861.4L1657 861.1L1659 861L1661 860.8L1663 860.7L1665 861.1L1667 860.6L1668.5 860.5L1669 861.1L1671 860.3L1673 860L1675 860.3L1677 859.8L1679 860.2L1681 860.3L1683 859.6L1685 859.6L1687 859.9L1689 859L1691 859.1L1693 859.1L1695 858.7L1697 858.4L1699 858.9L1701 858.2L1703 858.3L1705 858L1707 857.9L1709 857.4L1711 857.9L1713 857.3L1715 857.6L1717 856.9L1719 856.9L1721 857.1L1723 856.9L1725 856.5L1727 856.6L1729 856.2L1731 856.4L1733 855.7L1734.2 856.3L1735 856.6L1737 856.2L1739 856.1L1741 855.7L1743 855.7L1745 855.4L1747 855.3L1749 855.2L1751 854.3L1753 855.2L1755 855.1L1757 855L1759 854.5L1761 854.8L1763 854.7L1765 854.1L1767 854.1L1769 854.3L1771 854.2L1773 854.3L1775 854L1777 854.5L1779 853.6L1781 853.6L1783 853.6L1785 853.5L1787 853.7L1789 853.9L1791 853.4L1793 853.8L1795 853.9L1797 853.7L1799 854L1801 853.6L1803 853.3L1805 853.5L1807 853.2L1809 853.4L1811 852.9L1813 852.4L1815 852.6L1817 852.9L1819 852.9L1821 852.6L1823 852.9L1825 852.2L1827 852.3L1829 852.7L1831 852.5L1832.8 852.5L1833 852.7L1835 852.7L1837 852.2L1839 852.4L1841 851.9L1843 852.2L1845 852.2L1847 851.5L1849 852.3L1851 852.3L1853 851.8L1855 851.9L1857 852L1859 851.6L1861 851.8L1863 851.5L1865 851L1867 851.1L1869 851.2L1871 851.7L1873 851.4L1875 851.7L1877 851.3L1879 851.1L1881 852L1882 852.2L1883 851.6L1885 851.4L1887 851.7L1889 851.2L1891 851.4L1893 851L1895 851.6L1897 851.6L1899 851.5L1901 851.5L1903 851.3L1905 851.4L1907 852L1909 851.6L1911 852.2L1913 851.6L1915 851.9L1917 851.8L1919 852L1921 852.4L1923 851.9L1925 852.6L1927 852.7L1929 852.5L1931 852.7L1933 852.6L1935 852.9L1937 852.9L1939 852.6L1941 853L1943 853.3L1945 853.3L1947 853.4L1947.7 853.3L1949 853.2L1951 853.3L1953 853L1955 853.5L1957 853.9L1959 853.5L1961 853.4L1963 853.9L1965 853.8L1967 854L1969 854.3L1971 854.4L1973 854.3L1975 854.2L1977 855L1979 854.7L1981 854.6L1983 855L1985 855.2L1987 854.6L1989 855.4L1991 855.2L1993 855.7L1995 855.5L1997 855.4L1999 855.8L2001 855.8L2003 855.7L2005 856L2007 855.8L2009 856.2L2011 855.7L2013 856.1L2015 855.6L2017 856.3L2019 855.7L2021 856L2023 856.3L2025 856.2L2027 856.2L2029 856.2L2029.9 856.3L2031 856.1L2033 856.7L2035 856.8L2037 856.9L2039 856.7L2041 857.1L2043 857.1L2045 857.2L2047 857.1L2049 857.1L2051 856.9L2053 856.6L2055 857.4L2057 857.3L2059 857.9L2061 856.9L2063 857.6L2065 857.2L2067 857.5L2069 857.4L2071 857.6L2073 857.6L2075 857.8L2077 857.7L2079 857.8L2081 858.1L2083 858L2085 857.9L2087 858.3L2089 858L2091 858.1L2093 857.8L2095 857.7L2095.6 857.1L2097 858L2099 857.4L2101 857.8L2103 858L2105 857.3L2107 857.8L2109 857.6L2111 857.8L2113 857.5L2115 857.7L2117 857.7L2119 858L2121 858.1L2123 857.6L2125 857.5L2127 858.2L2129 857.5L2131 857.4L2133 857.3L2135 857.6L2137 857.6L2139 857.2L2141 857.3L2143 857.8L2145 857.7L2147 857.3L2149 857.2L2151 857.1L2153 857.2L2155 856.8L2157 856.9L2159 856.6L2160 856.5L2161 856.5L2163 856.5L2165 856.3L2167 856.4L2169 856.4L2171 856.2L2173 856L2175 856.1L2177 856.3L2179 856.4L2181 856.2L2183 856L2185 855.9L2187 856.2L2189 855.9L2191 855.3L2193 855.5L2195 855.2L2197 855L2199 854.5L2201 854.7L2203 854.2L2203.7 854.4L2205 854.7L2207 854.4L2209 853.6L2211 853.3L2213 853L2215 852.4L2217 852.1L2219 851.6L2221 850.7L2223 850.3L2225 849.2L2225.5 848.8L2227 847.7L2229 843.5L2231 839L2232.1 837L2233 835.4L2235 831.5L2236.5 830.6L2237 830.6L2239 833.6L2240.8 837L2241 837.3L2243 840.6L2245 843.8L2247 845.8L2247.4 846.9L2249 847.9L2251 849.2L2253 850.9L2255 851.5L2256.1 851.9L2257 852.4L2259 852.5L2261 853.2L2263 853.2L2265 853.6L2267 853.9L2269 854.1L2271 854.1L2271.4 854.9L2273 855.1L2275 856.6L2277 857.5L2279 859.1L2281 860.8L2282.4 862.2L2283 862.3L2285 864.2L2287 865.4L2289 867.5L2291 869.5L2293 871.5L2295 873L2295.5 874.1L2297 875L2299 877L2301 877.6L2303 879.5L2305 880.9L2307 883.6L2309 887.7L2309.7 889.5L2311 919.6L2311.2 924.4L2312.9 957.2L2313 958.1L2314.5 966.6L2315 956.5L2315.6 935.3L2317 897.2L2317.7 880.7L2319 853.7L2319.5 847.9L2321 841.6L2322.8 847.9L2323 849.1L2325 872.2L2325.6 880.7L2327 904L2328.2 924.4L2329 936.4L2331 963.1L2331.5 968.1L2333 976.8L2334.1 986.2L2335 1020"/>
<path stroke="#305c59" d="M1355 864.5L1357 864.8L1359 865L1361 865.3L1363 865.3L1365 865.5L1367 865.7L1369 865.2L1371 865.7L1373 865.2L1375 865.8L1377 865.6L1379 865.5L1381 866.3L1383 866.1L1385 866.5L1387 866.1L1389 866.1L1391 866.6L1393 866.5L1395 866.8L1397 866.8L1399 866.9L1401 866.9L1403 867.7L1405 867.3L1407 867.1L1409 867.6L1411 867.7L1413 867.6L1415 867.6L1417 867.6L1419 867.6L1421 867.2L1423 867.4L1425 867.6L1427 868.1L1429 868.5L1431 868.3L1433 868.4L1435 868.9L1437 868.6L1438.6 868.9L1439 868.9L1441 868.6L1443 869L1445 869L1447 868.7L1449 868.8L1451 868.7L1453 869.4L1455 869.7L1457 869.5L1459 869.8L1461 869.3L1463 870.1L1465 870.3L1467 870.3L1469 869.8L1471 870.4L1473 870.2L1475 870.5L1477 870.1L1479 870.3L1481 870.2L1483 870.5L1485 870.5L1487 870.9L1489 870.9L1491 870.9L1493 871L1495 871.1L1497 871.2L1499 871.5L1501 871.5L1503 871.6L1505 871.5L1507 871.6L1509 871.5L1511 871.2L1513 871.8L1515 871.9L1517 871.5L1519 872.3L1521 871.6L1523 872.3L1525 872.2L1527 872.3L1529 872.5L1531 872.6L1533 872.3L1535 872.2L1537 872.1L1537.1 872.4L1539 872.7L1541 872.6L1543 872.4L1545 872.5L1547 872.7L1549 873.1L1551 872.4L1553 872.9L1555 872.8L1557 872.6L1559 872.5L1561 873.1L1563 872.9L1565 872.8L1567 872.9L1569 873.3L1571 873.1L1573 873.5L1575 873L1577 872.8L1579 873L1581 872.9L1583 873L1585 873.4L1587 873.5L1589 873.2L1591 873.2L1593 873L1595 873L1597 873.4L1599 873.3L1601 873.2L1603 873.3L1605 873.8L1607 873.7L1609 873.4L1611 873.5L1613 873.9L1615 873.5L1617 873.5L1619 873.1L1621 873L1623 873.1L1625 873L1627 873.6L1629 873.7L1631 873.4L1633 873.9L1635 874L1635.7 873.9L1637 873.5L1639 874.2L1641 874.1L1643 873.6L1645 874.2L1647 873.8L1649 873.5L1651 873.5L1653 873.1L1655 873.5L1657 873.2L1659 873.8L1661 873.5L1663 873L1665 873.3L1667 872.6L1669 873L1671 872.9L1673 872.7L1675 872.3L1677 872.4L1679 872.3L1681 872.4L1683 872.7L1685 872.7L1687 872.7L1689 872L1691 871.9L1693 872L1695 872.1L1697 871.3L1699 871.6L1701 872.1L1703 871.2L1705 871.2L1707 871.1L1709 871.3L1711 871.1L1713 870.8L1715 870.5L1717 871L1719 870.7L1721 870.4L1723 870.7L1725 870.8L1727 870.1L1729 870L1731 870.2L1733 870.3L1734.2 869.6L1735 870.2L1737 870.7L1739 870.1L1741 870.4L1743 869.3L1745 869.9L1747 870.2L1749 870.1L1751 869.6L1753 869.5L1755 869.7L1757 869.2L1759 869.5L1761 869.2L1763 869.6L1765 869.6L1767 870L1769 869.5L1771 869.1L1773 869.2L1775 868.9L1777 869.1L1779 869L1781 869L1783 869L1785 868.2L1787 868.8L1789 868.8L1791 868.2L1793 868.8L1795 868.1L1797 868.8L1799 868.3L1801 868.4L1803 868.3L1805 868.3L1807 867.7L1809 867.9L1811 867.7L1813 868.2L1815 868L1817 868.3L1819 868.2L1821 867.7L1823 868.3L1825 868.2L1827 868.2L1829 868.2L1831 868.1L1832.8 868L1833 868.3L1835 867.7L1837 867.7L1839 867.7L1841 868.2L1843 867.7L1845 868.3L1847 867L1849 867.7L1851 867.9L1853 868.1L1855 868.3L1857 868L1859 867.7L1861 868.2L1863 868.4L1865 867.3L1867 868L1869 867.8L1871 867.5L1873 867.5L1875 867.7L1877 867.7L1879 867.7L1881 867.3L1883 867.7L1885 867.5L1887 867.7L1889 867.5L1891 867.8L1893 867.9L1895 867.8L1897 867.8L1899 867.4L1901 867.8L1903 867.8L1905 867.6L1907 867.6L1909 866.9L1911 867.6L1913 867.5L1915 867L1917 867.7L1919 867.4L1921 867.6L1923 867.4L1925 867.6L1927 867.6L1929 867.4L1931 867.6L1933 867.6L1935 866.8L1937 867.5L1939 867.2L1941 867.1L1943 867.7L1945 867.5L1947 867.1L1949 867.2L1951 867.7L1953 867.4L1955 867.4L1957 867.1L1959 867.5L1961 867.8L1963 867.5L1965 867.6L1967 868L1969 867.8L1971 867.9L1973 867.6L1975 867.8L1977 867.1L1979 867.4L1981 867.1L1983 868.1L1985 867.5L1987 867.4L1989 867.3L1991 867.2L1993 866.8L1995 868L1997 867.4L1999 867.5L2001 867L2003 867.4L2005 867.5L2007 867.3L2009 867.6L2011 867.2L2013 867.5L2015 867.7L2017 867.7L2019 867.7L2021 867.5L2023 867.3L2025 867.7L2027 867.3L2029 867.2L2031 867.6L2033 867L2035 867.2L2037 867.5L2039 867.6L2041 867.2L2043 867.3L2045 867.6L2047 867.4L2049 867.2L2051 867.6L2053 867.6L2055 867.6L2057 867.8L2059 867.6L2061 867.4L2063 867.6L2065 868.1L2067 867.4L2069 867.5L2071 867.4L2073 867.7L2075 867.3L2077 867.8L2079 867.8L2081 867.5L2083 867.4L2085 867.2L2087 867.6L2089 867.3L2091 867.4L2093 867.5L2095 867.4L2097 867.9L2099 868.2L2101 867.2L2103 867.6L2105 867.8L2107 867.4L2109 867.5L2111 867.8L2113 868L2115 868L2117 867.5L2119 867.6L2121 867.5L2123 867.5L2125 867.3L2127 867.1L2129 867.5L2131 867.9L2133 867.8L2135 867.2L2137 867.7L2139 867.5L2141 867.7L2143 867.4L2145 867.9L2147 867.6L2149 867.8L2151 867.8L2153 866.9L2155 867.4L2157 867.9L2159 867.6L2160 867.9L2161 867.7L2163 867.5L2165 867.7L2167 868L2169 868.1L2171 867.9L2173 867.2L2175 867.7L2177 867.1L2179 867.5L2181 867.5L2183 867.5L2185 867.5L2187 867.7L2189 867.2L2190.6 867.5L2191 867.3L2193 866.6L2195 865.3L2197 864.3L2199 862.9L2201 861.7L2203 860.2L2203.7 860L2205 859.6L2207 858.7L2209 858L2211 857.8L2211.8 857.2L2213 858.1L2215 858.2L2217 861.3L2219 863.1L2221 866.4L2223 870.7L2225 875.3L2227 879.5L2227.7 880.7L2229 882.9L2231 886.6L2233 888.5L2233.8 889.5L2235 888L2237 884.3L2238.7 880.7L2239 880.1L2241 875.1L2243 869.7L2245 865.6L2245.2 864.7L2247 863.1L2249 860.8L2251 859.3L2252.9 859.1L2253 859L2255 859.3L2257 860.2L2259 860.9L2261 861.7L2263 862.4L2264.9 862.2L2265 862.4L2267 861.7L2269 861.2L2271 860.1L2273 858.4L2275 856.7L2275.8 856.2L2277 855.2L2279 853.4L2281 850.4L2283 847.4L2285 844.2L2286.7 841.4L2287 840.9L2289 837.6L2291 833.9L2293 830.2L2295 826.5L2297 822.8L2297.6 821.7L2299 819.4L2301 816.6L2303 813.6L2305 809.8L2306.4 806.4L2307 804.7L2309 794.9L2309.2 793.3L2310.8 749.6L2311 743.9L2312.3 699.8L2312.7 660M2315.8 660L2316.2 699.8L2317.7 749.6L2317.8 751.6L2319.8 781.5L2320.6 789L2321.8 798.5L2323.8 807.9L2323.9 807.7L2325.8 795.1L2327.1 782.4L2327.8 776.7L2329.8 759.2L2331.8 743.5L2332.6 738.7L2333.8 732.6L2335.8 724L2337.8 716.8L2339.2 712.5L2339.8 711L2341.8 707.8L2343.8 703.3L2344.6 699.8L2345.8 667L2346 660M2369 660L2369.3 699.8L2370.2 738.7L2371 777.9L2371.5 804.2L2373 891.6L2374.5 955L2375 946.6L2376.3 891.6L2377 863.6L2378.5 815.2L2379 810.1L2381 797.4L2381.8 794.4L2383 790.4L2385 786.4L2385.5 786L2387 791L2388.3 799.9L2389 805.4L2391 827.1L2392.7 847.9L2393 851.5L2395 877.1L2397 902.6L2399 928L2401 949.7L2401.4 952.8L2403 963.9L2404.3 967.9L2405 965.7L2406.9 946.3L2407 945.2L2409 912.2L2410.2 891.6L2411 879L2412.8 856.7L2413 855.6L2414.5 850.4L2415 851.8L2416.7 865.4L2417 868L2419 890.3L2420 902.6L2421 917.4L2423 944.7L2423.3 946.3L2425 949.7L2426.5 952.8L2427 954.8L2429 972.8L2429.8 986.2L2430.5 1020M2442.5 1020L2443 986.2L2444 946.3L2444.5 926.7L2445.8 880.7L2446.5 861.8L2447.3 847.9L2448.5 841.7L2448.8 841.7L2450.5 851.4L2450.6 852.3L2452.5 894.6L2452.8 902.6L2454.5 956.8L2455 968.1L2456.5 986.2L2457 1020"/>
<path stroke="#bf3fb5" d="M2485.5 690L2488.4 742.6L2492.1 690M2494.3 690L2496 738.7L2497.6 690M2500.8 690L2502.6 779L2504.1 690L2506.3 788L2507.8 690"/>
</g>
<rect x="1374" y="719" width="19" height="19" fill="#f78e80" shape-rendering="crispEdges"/>
<text x="1400" y="734.0" font-size="12" fill="#eeeeee" textLength="233.5" lengthAdjust="spacingAndGlyphs">H1:SUS-ITMY_L2_MASTER_OUT_UL_DQ</text>
<rect x="1374" y="744" width="19" height="19" fill="#bf3fb5" shape-rendering="crispEdges"/>
<text x="1400" y="759.0" font-size="12" fill="#eeeeee" textLength="230.7" lengthAdjust="spacingAndGlyphs">H1:SUS-ITMY_L2_MASTER_OUT_LL_DQ</text>
<rect x="1374" y="769" width="19" height="19" fill="#fff0d2" shape-rendering="crispEdges"/>
<text x="1400" y="784.0" font-size="12" fill="#eeeeee" textLength="234.7" lengthAdjust="spacingAndGlyphs">H1:SUS-ITMY_L2_MASTER_OUT_UR_DQ</text>
<rect x="1374" y="794" width="19" height="19" fill="#305c59" shape-rendering="crispEdges"/>
<text x="1400" y="809.0" font-size="12" fill="#eeeeee" textLength="231.8" lengthAdjust="spacingAndGlyphs">H1:SUS-ITMY_L2_MASTER_OUT_LR_DQ</text>
<path d="M1355.5 700V986.5H2537" fill="none" stroke="#969696" stroke-width="1" shape-rendering="crispEdges"/>
<g font-size="13" fill="#eeeeee">
<g text-anchor="end" clip-path="url(#a6)">
<text x="1350" y="705.6" textLength="44" lengthAdjust="spacingAndGlyphs">200000</text>
<text x="1350" y="777.1" textLength="44" lengthAdjust="spacingAndGlyphs">100000</text>
<text x="1350" y="848" textLength="7.3" lengthAdjust="spacingAndGlyphs">0</text>
<text x="1350" y="920.1" textLength="48.4" lengthAdjust="spacingAndGlyphs">-100000</text>
<text x="1350" y="991.6" textLength="48.4" lengthAdjust="spacingAndGlyphs">-200000</text>
</g>
<g text-anchor="middle">
<text x="1496.4" y="1002" textLength="61.7" lengthAdjust="spacingAndGlyphs">-1s,125ms</text>
<text x="1736.4" y="1002" textLength="18.3" lengthAdjust="spacingAndGlyphs">-1s</text>
<text x="1976.3" y="1002" textLength="44" lengthAdjust="spacingAndGlyphs">-875ms</text>
<text x="2216.3" y="1002" textLength="44" lengthAdjust="spacingAndGlyphs">-750ms</text>
<text x="2455.9" y="1002" textLength="44" lengthAdjust="spacingAndGlyphs">-625ms</text>
</g>
<text transform="translate(1294 843) rotate(-90)" text-anchor="middle" textLength="40.4" lengthAdjust="spacingAndGlyphs">counts</text>
</g>
</g>
<g id="plot7">
<g shape-rendering="crispEdges" fill="none" stroke-width="1">
<path stroke="#0f0f0f" d="M256.5 1014V1300M305.5 1014V1300M355.5 1014V1300M404.5 1014V1300M502.5 1014V1300M551.5 1014V1300M601.5 1014V1300M650.5 1014V1300M748.5 1014V1300M797.5 1014V1300M847.5 1014V1300M896.5 1014V1300M994.5 1014V1300M1043.5 1014V1300M1093.5 1014V1300M1142.5 1014V1300M158.5 1014V1300M1240.5 1014V1300M109.5 1014V1300"/>
<path stroke="#1b1b1b" d="M207.5 1014V1300M453.5 1014V1300M699.5 1014V1300M945.5 1014V1300M1191.5 1014V1300"/>
<path stroke="#0b0b0b" d="M92 1028.5H1274M92 1043.5H1274M92 1057.5H1274M92 1071.5H1274M92 1100.5H1274M92 1114.5H1274M92 1128.5H1274M92 1143.5H1274M92 1171.5H1274M92 1186.5H1274M92 1200.5H1274M92 1214.5H1274M92 1243.5H1274M92 1257.5H1274M92 1271.5H1274M92 1286.5H1274"/>
<path stroke="#141414" d="M92 1014.5H1274M92 1085.5H1274M92 1228.5H1274"/>
<path stroke="#1c1c1c" d="M92 1157.5H1274"/>
</g>
<rect x="102.5" y="1024.5" width="282" height="112" fill="#141414" fill-opacity="0.85" stroke="#444444" stroke-width="1" shape-rendering="crispEdges"/>
<g clip-path="url(#c7)" fill="none" stroke-width="1" stroke-linejoin="round" shape-rendering="crispEdges">
<path stroke="#3d5288" d="M92 1183.1L94 1182L96 1182.1L98 1182.4L100 1182L102 1182.3L104 1183.1L106 1183.1L108 1182.1L110 1182.2L112 1182.1L114 1181.6L116 1181.1L118 1181.7L120 1181.2L122 1181.3L124 1181.2L126 1180.6L128 1181.3L130 1180.6L132 1180.5L134 1180.2L136 1180.6L138 1180.6L140 1179.9L142 1180.1L144 1179.6L146 1179.2L148 1179.3L150 1179.5L152 1179.4L154 1179.6L156 1178.8L158 1178.8L160 1178.9L162 1178.9L164 1178.5L166 1178.3L168 1178L170 1178.7L172 1178.3L174 1177.7L176 1178.4L178 1177.7L178.6 1177.9L180 1178.1L182 1177.4L184 1177.2L186 1176.9L188 1177.5L190 1177.4L192 1177.4L194 1177.4L196 1177.1L198 1177.4L200 1176.4L202 1176.8L204 1176.8L206 1176.4L208 1176.9L210 1176.3L212 1176.3L214 1176L216 1175.6L218 1176.2L220 1175.8L222 1175.3L224 1175.2L226 1174.7L228 1175L230 1175L232 1175.1L234 1174.7L236 1174.9L238 1174.5L240 1173.9L242 1174.1L244 1174L246 1173.8L248 1173.9L250 1174.2L252 1173.5L254 1173.1L256 1173.6L258 1174.6L260 1173.2L262 1173.4L264 1173.1L266 1173.6L268 1173.7L270 1173L272 1173.4L274 1172.6L276 1173L277.1 1172.5L278 1173L280 1172.6L282 1172.6L284 1172.1L286 1172.5L288 1172.5L290 1172.1L292 1171.9L294 1171.7L296 1171.9L298 1172.1L300 1172L302 1171.9L304 1172.1L306 1171.4L308 1171.6L310 1171.7L312 1171.6L314 1171.5L316 1171.3L318 1171.9L320 1171.2L322 1171L324 1171.4L326 1171.7L328 1171.6L330 1171.1L332 1171.3L334 1171.1L336 1170.8L338 1171L340 1171L342 1170.7L344 1171.3L346 1170.7L348 1171.2L350 1171.4L352 1171.4L354 1170.8L356 1170.5L358 1170L360 1170.5L362 1171.1L364 1169.6L366 1169.5L368 1170.2L370 1170.2L372 1169.3L374 1170L375.7 1170.1L376 1169.4L378 1170.2L380 1169.4L382 1170.2L384 1169.9L386 1169.5L388 1169.2L390 1169.5L392 1169.5L394 1169.4L396 1169.2L398 1169.2L400 1169.5L402 1168.9L404 1169.1L406 1169.3L408 1169.1L410 1169.4L412 1169.6L414 1169L416 1169.2L418 1168.2L420 1169.1L422 1169.5L424 1168.8L426 1169.6L428 1168.7L430 1169.7L432 1169.1L434 1168.9L436 1169L438 1169L440 1168.7L442 1168.7L444 1168.8L446 1169L448 1168.8L450 1169.1L452 1168.5L454 1168.5L456 1168.5L458 1168.7L460 1168.8L462 1169.3L464 1169L466 1168.9L468 1169.4L470 1168.5L472 1168.4L474 1169.2L474.2 1169L476 1169L478 1169.2L480 1168.8L482 1168.8L484 1168.9L486 1169.1L488 1169.1L490 1168.7L492 1168.8L494 1167.9L496 1169.1L498 1168.1L500 1168.6L502 1169.5L504 1168.6L506 1168.3L508 1169.4L510 1168.7L512 1168.8L514 1169L516 1169.3L518 1169.4L520 1169L522 1169.5L524 1168.8L526 1169.4L528 1169L530 1169.5L532 1169L534 1169.2L536 1169.8L538 1169L540 1169L542 1169.6L544 1169.4L546 1169.4L548 1169.5L550 1170.3L552 1169.2L554 1169.6L556 1169.7L558 1169.4L560 1169.8L562 1170L564 1169.7L566 1170.3L568 1169.7L570 1170.1L572 1170.2L574 1171.3L576 1169.7L578 1170.5L580 1171.4L582 1170.4L584 1171L586 1170.7L588 1170.2L590 1170.9L592 1170.5L594 1170.9L596 1170.4L598 1171.1L600 1170L602 1170.7L604 1171.2L605.6 1170.9L606 1170.7L608 1170.6L610 1170.4L612 1171.5L614 1170.8L616 1170.7L618 1170.7L620 1170.9L622 1171.3L624 1170.9L626 1170.9L628 1171.2L630 1171.3L632 1171.5L634 1171.6L636 1171.8L638 1171.6L640 1172.4L642 1172.2L644 1172.2L646 1172.6L648 1172.6L650 1172.1L652 1172.6L654 1173.3L656 1173.1L658 1173.4L660 1172.7L662 1172.5L664 1172.8L666 1173.5L668 1172.8L670 1172.9L672 1173.6L674 1173.2L676 1173.2L678 1173.5L680 1173.5L682 1173.4L684 1173.6L686 1173.4L688 1173.6L690 1173.8L692 1173.4L694 1173.8L696 1173.3L698 1173.9L700 1173.8L702 1174L704 1174L704.2 1174.1L706 1174.1L708 1173.5L710 1174.1L712 1173.6L714 1174.6L716 1174L718 1174L720 1173.3L722 1174L724 1173.9L726 1173.1L728 1173.5L730 1173.5L732 1173.5L734 1174.1L736 1174.4L738 1173.5L740 1174.1L742 1173.7L744 1174.2L746 1172.9L748 1173.5L750 1174L752 1173.2L754 1173.8L756 1173.2L758 1173.9L760 1173.6L762 1173.2L764 1172.9L766 1173.1L768 1173.5L769.9 1173.2L770 1173L772 1174.2L774 1172.5L776 1172.9L778 1173L780 1172.6L782 1172.9L784 1172.6L786 1172.1L788 1172.9L790 1172.2L792 1172.4L794 1172.9L796 1172.1L798 1172.6L800 1172.8L802 1172.8L804 1172.5L806 1172.1L808 1171.6L810 1172.1L812 1172.3L814 1171.9L816 1171.5L818 1172L820 1171.1L822 1171.5L824 1171.1L826 1170.6L828 1171.5L830 1171L832 1170.9L834 1170.2L836 1170.7L838 1170.7L840 1170.2L842 1170.7L844 1169.5L846 1170.2L848 1169.3L850 1169.2L852 1169.2L854 1169.6L856 1169L858 1169L860 1169L862 1168.6L864 1168.8L866 1168.5L868 1168.7L868.4 1168.6L870 1167.9L872 1168.5L874 1169.1L876 1168.4L878 1168.6L880 1168.2L882 1168.2L884 1168.2L886 1167.7L888 1168L890 1167.3L892 1167.9L894 1167.1L896 1167.6L898 1167.7L900 1166.7L902 1167.4L904 1166.9L906 1167.5L908 1166.8L910 1166.8L912 1166.7L914 1167.2L916 1166.1L918 1166.8L920 1166.5L922 1166.2L924 1166.1L926 1166.4L928 1166.2L930 1166.2L932 1165.2L932.8 1164.6L934 1164.9L936 1164.7L938 1164.3L940 1164.6L942 1164.5L944 1163.2L946 1161.9L948 1162.1L950 1160.7L952 1159.8L953.5 1159.3L954 1158.6L956 1153.7L958 1147.4L959 1144.5L960 1141.5L962 1134.6L964 1128.8L965.6 1126.9L966 1127L968 1131.8L970 1139.1L971 1142.3L972 1145.1L974 1151.1L976 1156.8L978 1161L978.7 1161.9L980 1163.4L982 1165.6L984 1165.7L986 1168L987.4 1168.5L988 1168.4L990 1169.9L992 1170.8L994 1172.1L996 1172.3L998 1174L1000 1174.5L1000.5 1175.4L1002 1176.7L1004 1178.4L1006 1180.8L1008 1182.8L1010 1185.8L1012 1188L1013.6 1190.1L1014 1190.9L1016 1193.9L1018 1197.1L1020 1200.5L1022 1204L1024 1207.5L1026 1211L1026.7 1212.2L1028 1214L1030 1216.3L1032 1218.8L1034 1221.7L1036 1225.4L1038 1230.4L1038.8 1233L1040 1240.7L1041.6 1260.3L1042 1266.8L1043.1 1300.3L1043.5 1340M1046.5 1340L1046.9 1300.3L1048.5 1230.6L1048.6 1227.5L1050.5 1180.1L1050.8 1175.1L1052.5 1155.2L1054.1 1175.1L1054.5 1180.4L1056.3 1205.7L1056.5 1208.5L1057.8 1227.5L1058.5 1241.5L1059.8 1271L1060.5 1281.9L1061.2 1300.3L1061.5 1340M1119.3 1340L1119.6 1300.3L1121.3 1258.3L1121.8 1249.4L1123.3 1216.1L1125.1 1183.8L1125.3 1181.3L1127.3 1159.7L1129.3 1145.4L1129.5 1144.5L1131.3 1137.2L1132.7 1134.2L1133.3 1135L1135.3 1139.5L1137.1 1142.2L1137.3 1142.3L1139.3 1136.9L1141.3 1124.2L1141.5 1122.6L1143.3 1084L1143.7 1074.6L1145.3 1035.2L1145.8 1030.9L1147.3 1043.5L1148 1052.7L1149.3 1072.6L1151.3 1107.3L1153.3 1140.4L1154.6 1153.2L1155.3 1155.5L1157.2 1158.8L1157.3 1158.6L1159.3 1156.4L1161.1 1151L1161.3 1149.8L1163.3 1107.3L1164.9 1052.7L1165.3 1029.3L1165.5 1013.8L1165.8 980"/>
<path stroke="#5aaba5" d="M92 1177.3L94 1177L96 1177.2L98 1176.7L100 1177.1L102 1177.5L104 1177.4L106 1176.9L108 1177.1L110 1176.9L112 1177.1L114 1177.1L116 1177.5L118 1177.2L120 1177.4L122 1177.5L124 1176.3L126 1176.7L128 1176.4L130 1175.8L132 1176L134 1176.1L136 1176.8L138 1176.3L140 1176.1L142 1176.3L144 1176L146 1176.4L148 1176.4L150 1175.9L152 1176.3L154 1177.7L156 1176.6L158 1176.4L160 1176.6L162 1176L164 1176.3L166 1176.4L168 1175.5L170 1175.8L172 1175.9L174 1176L176 1175.8L178 1176L180 1176.2L182 1175.9L184 1176.3L186 1176.2L188 1175.5L190 1175.8L192 1175.5L194 1175.9L196 1175.5L198 1175.5L200 1176.2L202 1175.4L204 1175L206 1175.5L208 1175.4L210 1175.1L211.4 1175.2L212 1175.6L214 1175.1L216 1175L218 1174.8L220 1175L222 1174.8L224 1174.5L226 1174.7L228 1175.3L230 1174.1L232 1174.1L234 1174.7L236 1174.1L238 1175.3L240 1174.2L242 1174.2L244 1174.4L246 1174.9L248 1174.7L250 1174.6L252 1174.6L254 1174.9L256 1173.7L258 1174.3L260 1174.6L262 1173.7L264 1174.1L266 1174.5L268 1174.5L270 1173.9L272 1174.3L274 1173.9L276 1174L278 1173.2L280 1173.3L282 1173.4L284 1174.1L286 1172.7L288 1172.8L290 1173.5L292 1173.3L294 1172.3L296 1173.1L298 1173.2L300 1173.5L302 1172.4L304 1172.7L306 1173.4L308 1173.5L310 1172.8L312 1173.1L314 1172.7L316 1173.6L318 1173L320 1173.7L322 1173.6L324 1173.1L326 1173.2L328 1173.6L330 1173.5L332 1173.9L334 1173.7L336 1173.5L338 1173.5L340 1173L342 1173L344 1173.5L346 1173.3L348 1172.8L350 1173.2L352 1172.9L354 1173.1L356 1173.8L358 1173.1L360 1173.3L362 1173.7L364 1173.7L366 1173.9L368 1173.4L370 1174L372 1173.9L374 1173.9L376 1174L378 1174.2L380 1174.6L382 1174.9L384 1174.4L386 1174.8L388 1174.4L390 1174L392 1174.7L394 1175.1L396 1175L398 1174.4L400 1175.5L402 1174.4L404 1174.6L406 1174.7L408 1175.4L408.5 1174.9L410 1175.1L412 1174.2L414 1174.8L416 1175L418 1175.2L420 1174.8L422 1175.3L424 1174.6L426 1174.5L428 1174.4L430 1175.4L432 1175.4L434 1174.8L436 1175.6L438 1175.3L440 1175.4L442 1175.1L444 1175.4L446 1175.7L448 1175.7L450 1175.5L452 1176L454 1176.2L456 1175.4L458 1176L460 1175.3L462 1176.1L464 1175.7L466 1176.1L468 1176.3L470 1176.2L472 1176.7L474 1176.3L476 1176.4L478 1176.8L480 1176.6L482 1176.8L484 1176.7L486 1176.6L488 1177.1L490 1176.9L492 1177.2L494 1177.4L496 1176.7L498 1176.7L500 1176.8L502 1176.8L504 1176.4L506 1177.6L507.1 1177.3L508 1177.9L510 1177L512 1177.6L514 1177.5L516 1177.5L518 1177.9L520 1177.7L522 1177.8L524 1178L526 1177.4L528 1178L530 1178.2L532 1179L534 1178.8L536 1179L538 1179.1L540 1178.9L542 1179.4L544 1179L546 1178.7L548 1179.4L550 1179.7L552 1179.5L554 1179.5L556 1179.6L558 1180L560 1179.8L562 1180.1L564 1179.6L566 1180.1L568 1178.9L570 1179.7L572 1179.3L572.8 1179.3L574 1178.9L576 1179.6L578 1179.1L580 1178.9L582 1179L584 1179.2L586 1179.2L588 1179L590 1179L592 1179.3L594 1179.1L596 1179.7L598 1178.9L600 1179.2L602 1179.5L604 1178.9L606 1179.2L608 1178.9L610 1178.7L612 1179.1L614 1178.2L616 1178.3L618 1178L620 1178.4L622 1178.7L624 1178.3L626 1178.5L628 1178L630 1178.6L632 1178.1L634 1177.9L636 1178.5L638 1177.8L638.5 1178L640 1178L642 1178.1L644 1177.8L646 1177.3L648 1177.8L650 1177.8L652 1177.7L654 1177.5L656 1178.2L658 1177.2L660 1177.4L662 1177.5L664 1177L666 1176.9L668 1177.4L670 1177.3L672 1177L674 1176.3L676 1176.6L678 1176.8L680 1176.7L682 1176.8L684 1176.6L686 1176.6L688 1176.8L690 1175.5L692 1176.6L694 1176.1L696 1176.4L698 1176.3L700 1175.8L702 1175.8L704 1176.2L706 1175.7L708 1175.9L710 1175.4L712 1176.2L714 1175.2L716 1175.8L718 1174.9L720 1175.3L722 1175.4L724 1174.6L726 1174.7L728 1175.1L730 1175.3L732 1175.5L734 1175.2L736 1175.2L737 1174.4L738 1174.7L740 1175.3L742 1174.6L744 1174.6L746 1174.1L748 1174.5L750 1174L752 1174.5L754 1174.8L756 1174.4L758 1174.2L760 1173.9L762 1174.2L764 1173.5L766 1173.6L768 1174.4L770 1173.3L772 1173.4L774 1173.2L776 1174L778 1173.5L780 1172.9L782 1173L784 1173.7L786 1173.4L788 1173.2L790 1172.9L792 1173L794 1173.2L796 1172.8L798 1172.2L800 1171.9L802 1172.1L804 1172.6L806 1172.2L808 1172.3L810 1172.5L812 1172.2L814 1172L816 1172.7L818 1172.6L820 1172.5L822 1172.5L824 1172.7L826 1172.2L828 1172.1L830 1171.4L832 1172L834 1171.9L835.6 1172.4L836 1172.4L838 1172.5L840 1172.4L842 1172.4L844 1172.3L846 1172.3L848 1172.1L850 1172.2L852 1171.9L854 1172.3L856 1172.4L858 1171.9L860 1171.8L862 1172.6L864 1172.8L866 1172.9L868 1173.5L870 1173L872 1173L874 1173.7L876 1174L878 1174.3L880 1173.5L882 1173.9L884 1173.9L886 1174.5L888 1174.5L890 1174.3L892 1174.6L894 1174.3L896 1174.3L898 1174.5L900 1174.3L902 1174.5L904 1174.8L906 1174.6L908 1175L910 1174.8L912 1174.4L914 1173.8L916 1173.9L918 1174.2L920 1174.1L921.9 1173.8L922 1174.1L924 1173.6L926 1172.2L928 1170.8L930 1169.1L932 1167.2L934 1165.5L936 1164.3L938 1163.7L939.3 1163.1L940 1162.9L942 1164.3L944 1166.8L946 1168.7L947 1170.9L948 1172.3L950 1177L952 1182.8L954 1189.1L956 1194.9L956.8 1196.9L958 1200L960 1205.6L962 1210.5L964 1213.1L964.5 1213.4L966 1211.2L968 1204.1L969.9 1196.9L970 1196.6L972 1189.4L974 1181.9L976 1176.1L976.5 1175.1L978 1172.6L980 1169.7L982 1167.4L983 1167.3L984 1167.2L986 1166.9L988 1166.9L990 1166.6L992 1166.2L994 1166L996 1166.2L996.2 1166.7L998 1165.4L1000 1164L1002 1163.1L1004 1160.6L1004.9 1160L1006 1158.3L1008 1154.3L1010 1149.4L1012 1144.1L1013.6 1140.1L1014 1139.1L1016 1134.2L1018 1129L1020 1123.8L1022 1118.5L1024 1113.3L1024.6 1111.7L1026 1108.1L1028 1103L1030 1097.9L1032 1092.8L1034 1087.4L1035.5 1083.3L1036 1082L1038 1077.6L1039.9 1070.2L1040 1069.5L1041.6 1041.8L1042 1031.7L1042.5 1013.8L1043 980M1050 980L1050.3 1013.8L1051.2 1041.8L1052 1056.7L1053 1068L1054 1072.8L1054.7 1074L1056 1069.7L1056.9 1063.6L1058 1049.9L1059.1 1030.9L1060 1013.8L1060.5 980"/>
<path stroke="#cde84d" d="M92 1112.8L94 1113.4L96 1113.8L98 1114.1L100 1114.5L102 1114.7L104 1114.5L106 1114.5L108 1114.9L110 1114.6L112 1114.4L114 1114.5L116 1115L118 1115.2L120 1115.4L122 1114.6L124 1115.5L126 1114.9L128 1115.4L130 1115.9L132 1115.4L134 1115.7L136 1115.9L138 1116.7L140 1116.5L142 1116.1L144 1116.6L146 1116.8L148 1116.8L150 1116.6L152 1117.3L154 1116.7L156 1117.3L158 1116.7L160 1117.4L162 1117.4L164 1117.8L166 1116.8L168 1117.9L170 1118.1L172 1118L174 1118.6L176 1119L178 1118.6L180 1118.8L182 1119.1L184 1118.8L186 1119.2L188 1119L190 1118.6L192 1118.6L194 1119.5L196 1119.4L198 1119L200 1119.3L202 1119.9L204 1118.9L206 1119.4L208 1120L210 1120.2L211.4 1119.5L212 1119.6L214 1120L216 1120.3L218 1119.9L220 1119.2L222 1120.4L224 1120.2L226 1120.1L228 1119.9L230 1120.7L232 1120.5L234 1120.6L236 1120.7L238 1120.7L240 1120.8L242 1121.2L244 1120.3L246 1120.6L248 1120.6L250 1121.5L252 1121L254 1120.6L256 1121.1L258 1121L260 1121L262 1121.2L264 1121.1L266 1121L268 1122.3L270 1121.6L272 1121.3L274 1121.9L276 1122.2L278 1121.3L280 1121.8L282 1122.1L284 1121.7L286 1122.2L288 1121.6L290 1122L292 1122.2L294 1122.4L296 1122.2L298 1121.9L300 1122.1L302 1121.6L304 1123.1L306 1122.3L308 1122.3L310 1122.7L312 1122.9L314 1123L316 1122.7L318 1122.4L320 1122.9L322 1122.7L324 1122.9L326 1123L328 1123L330 1123.5L332 1123L334 1122.6L336 1123.4L338 1123.6L340 1122.8L342 1123.5L342.8 1123.6L344 1123.4L346 1123.7L348 1123.7L350 1123.8L352 1124L354 1123.6L356 1123.6L358 1124.6L360 1123.5L362 1123.9L364 1123.8L366 1124.4L368 1124.4L370 1123.7L372 1124.7L374 1123.9L376 1125.2L378 1124L380 1124.6L382 1124.2L384 1124.6L386 1124.2L388 1124.5L390 1124.5L392 1124.6L394 1124.8L396 1124.5L398 1124.5L400 1124.2L402 1124.6L404 1124.5L406 1125.1L408 1125.1L410 1124.7L412 1125.1L414 1125.4L416 1125L418 1124.7L420 1125.9L422 1125.3L424 1125.3L426 1125.9L428 1124.7L430 1125.3L432 1124.5L434 1125.3L436 1125.2L438 1124.9L440 1125L442 1125.3L444 1125.1L446 1125.8L448 1125.1L450 1125.1L452 1125.1L454 1124.6L456 1124.9L457.8 1124.5L458 1125.1L460 1124.4L462 1124.7L464 1125.1L466 1124.4L468 1124.6L470 1125.4L472 1124.5L474 1125L476 1125L478 1124.5L480 1124.2L482 1125.2L484 1124.5L486 1124.7L488 1124.1L490 1124.5L492 1123.9L494 1123.8L496 1123.9L498 1124L500 1123.8L502 1123.8L504 1124L506 1123.5L508 1124L510 1123.3L512 1123.6L514 1123.7L516 1123.6L518 1122.3L520 1123.4L522 1122.2L524 1123.4L526 1122.6L528 1122.6L530 1122L532 1122.7L534 1122.6L536 1122L538 1121.9L539.9 1122.4L540 1122.4L542 1122.4L544 1122L546 1122.1L548 1122.2L550 1122.2L552 1122.3L554 1121.9L556 1121.6L558 1121.8L560 1121.8L562 1121.5L564 1121.8L566 1121.3L568 1121.5L570 1121L572 1121.9L574 1121.6L576 1121.2L578 1120.5L580 1120.5L582 1121.2L584 1120.9L586 1121.2L588 1120.6L590 1120.5L592 1120.8L594 1120.7L596 1120.5L598 1120.6L600 1121L602 1120.6L604 1120.8L606 1121.1L608 1120.7L610 1120.6L612 1120.4L614 1120.9L616 1120L618 1120L620 1120.4L622 1119.8L624 1120.5L626 1119.9L628 1120.3L630 1119.9L632 1119.8L634 1119.8L636 1119.1L638 1119.3L638.5 1119.5L640 1120.5L642 1119.9L644 1119.8L646 1119.1L648 1119.6L650 1119.7L652 1119.4L654 1119.9L656 1118.5L658 1118.3L660 1118.4L662 1118L664 1118.1L666 1118.1L668 1117.7L670 1117.6L672 1117.6L674 1117.5L676 1116.9L678 1116.9L680 1117.3L682 1116.8L684 1116.5L686 1116.7L688 1116.3L690 1116.3L692 1116.1L694 1116.1L696 1116.1L698 1115.5L700 1115.1L702 1116L704 1115.1L706 1114.8L708 1114.7L710 1115.4L712 1115.2L714 1114.8L716 1115.1L718 1115.1L720 1115.8L722 1115.6L724 1115.7L726 1115.2L728 1115.5L730 1115.8L732 1115.7L734 1116.1L736 1115.8L738 1116.1L740 1116L742 1115.7L744 1116.3L746 1116.1L748 1116.3L750 1115.7L752 1115.7L754 1116.1L756 1116L758 1116.6L760 1116.5L762 1116.9L764 1116.7L766 1116.1L768 1116.9L770 1116.5L772 1116.6L774 1116.9L776 1116.9L778 1117.3L780 1117.8L782 1117.2L784 1117.7L786 1117.3L788 1117.5L790 1117.1L792 1117.2L794 1117.9L796 1117.7L798 1117.9L800 1117.7L802 1118.6L802.7 1117.9L804 1117.8L806 1118.1L808 1118.5L810 1118.6L812 1118.9L814 1118.2L816 1118.3L818 1119L820 1119.5L822 1118.6L824 1118.9L826 1118.6L828 1119L830 1119.1L832 1119.7L834 1119.4L836 1120.3L838 1120.3L840 1120.5L842 1120.9L844 1120.6L846 1120.4L848 1121.2L850 1121.9L852 1121.4L854 1121.7L856 1121.4L858 1121.3L860 1121.7L862 1120.8L864 1121.3L866 1121.5L868 1121.8L868.4 1122.5L870 1122.8L872 1122.5L874 1122.7L876 1123L878 1123.3L880 1122.6L882 1122.8L884 1123.1L886 1123.2L888 1122.6L890 1123.4L892 1122.8L894 1123.7L896 1123.8L898 1122.9L900 1124.1L902 1124.1L904 1123.9L906 1124.5L908 1125L910 1124.6L912 1124.3L914 1124.4L916 1124.7L918 1124.9L920 1125.9L921.9 1126L922 1125.9L924 1127.5L926 1129.9L928 1133.1L930 1136.5L932 1138.8L932.8 1139.8L934 1140.5L936 1143.4L938 1144.4L940 1145L940.4 1145.6L942 1144.4L944 1143L946 1139.7L948 1135.9L948.1 1135.7L950 1129.6L952 1120L954 1110L954.6 1107.3L956 1100.9L958 1091.5L960 1084.6L960.1 1084.4L962 1079.6L963.4 1079.5L964 1079.5L966 1083.6L966.7 1085.5L968 1091.3L970 1104.1L971 1109.5L972 1113.9L974 1122.1L976 1128.2L976.5 1129.2L978 1131.7L980 1134.3L982 1136.1L984 1137.5L984.1 1137L986 1136.7L988 1136.1L990 1134.5L992 1133.6L994 1133.1L996 1133.7L998 1134.5L1000 1135.4L1000.5 1136.2L1002 1137.2L1004 1139.7L1006 1142.8L1008 1146.4L1009.3 1148.9L1010 1150.3L1012 1154.8L1014 1160.1L1016 1165.6L1018 1171.3L1020 1176.8L1020.2 1177.3L1022 1182L1024 1187.2L1026 1192.4L1028 1197.6L1030 1202.8L1031.1 1205.7L1032 1207.9L1034 1212.3L1036 1217.3L1037.7 1223.2L1038 1224.5L1039.9 1238.5L1040 1239.9L1041.6 1300.3L1042 1340M1050.5 1340L1050.8 1300.3L1051.9 1249.4L1052.5 1236.6L1054.1 1216.6L1054.5 1214L1055.6 1210L1056.5 1216.5L1057.3 1227.5L1058.5 1250.9L1059.5 1271.2L1060.5 1281L1061.7 1300.3L1062 1340M1102.5 1340L1102.8 1300.3L1103.7 1210L1104.3 1150L1104.5 1114.2L1104.8 1050L1105 1013.8L1105.2 980M1109 980L1109.4 1013.8L1109.8 1074.6L1111 1119.2L1112 1140.1L1113 1163.4L1115 1201.4L1115.3 1205.7L1117 1228.7L1118.5 1238.2L1119 1236.8L1121 1208.1L1121.8 1194.8L1123 1175.2L1125 1138.9L1126.2 1118.3L1127 1105.6L1129 1075.1L1130.6 1052.7L1131 1047.9L1133 1027.9L1133.8 1013.8L1134.5 980M1140 980L1140.4 1013.8L1141.5 1052.7L1142 1071.7L1143.7 1140.1L1144 1153.3L1145.8 1227.5L1146 1230.9L1148 1254.7L1148.5 1256L1150 1236.8L1151.3 1205.7L1152 1185.9L1154 1113.8L1154.6 1096.4L1156 1063.3L1157.9 1030.9L1158 1029.8L1160 1013.8L1160.5 980M1168 980L1168.4 1013.8L1169.2 1118.3L1170 1173.3L1170.5 1205.7L1171.6 1300.3L1172 1340M1184 1340L1184.1 1300.3L1185.2 1183.8L1185.8 1074.6L1186 1057.7L1186.7 1013.8L1187 980"/>
<path stroke="#66771f" d="M92 1149.8L94 1149.7L96 1150.2L98 1149.9L100 1150.2L102 1150.6L104 1150.9L106 1150.4L108 1150.7L110 1150.7L112 1150.2L114 1150.6L116 1150.1L118 1150.3L120 1150.5L122 1150L124 1150.6L126 1150.4L128 1150.5L130 1150.7L132 1150.2L134 1150L136 1150.8L138 1150.7L140 1150.9L142 1150.7L144 1150.9L146 1150.9L148 1150.8L150 1151L152 1151.1L154 1151.4L156 1152.4L158 1151.2L160 1150.9L162 1151.6L164 1151.1L166 1151.3L168 1151.5L170 1151.6L172 1151.6L174 1151.7L176 1151.5L178 1151.9L180 1151.8L182 1151.3L184 1151.4L186 1151.2L188 1151.9L190 1151.6L192 1152.4L194 1151.7L196 1152.5L198 1151.8L200 1151.5L202 1152L204 1152.3L206 1152.6L208 1152L210 1152.6L211.4 1152.2L212 1152.2L214 1152.2L216 1153L218 1152.5L220 1152.6L222 1152.2L224 1152.7L226 1152.8L228 1153.3L230 1152.7L232 1152.8L234 1152.8L236 1152.9L238 1153.4L240 1152.9L242 1153.6L244 1153.3L246 1153L248 1153.1L250 1152.9L252 1152.9L254 1153.7L256 1153.7L258 1153.2L260 1153.3L262 1154L264 1153.3L266 1153.7L268 1153.9L270 1153.7L272 1153.9L274 1153.8L276 1154.1L278 1153.6L280 1154.1L282 1154.2L284 1153.8L286 1154.4L288 1154L290 1153.5L292 1153.7L294 1154.3L296 1154.5L298 1154.3L300 1154L302 1154.3L304 1154.8L306 1154.5L308 1154.1L310 1154.7L312 1154.5L314 1154.6L316 1154.5L318 1154.6L320 1154.5L322 1154.2L324 1154.5L326 1154.6L328 1154.9L330 1154.1L332 1154.5L334 1154.4L336 1154.8L338 1154.6L340 1153.8L342 1155.2L344 1154.7L346 1154.7L348 1154.6L350 1154.6L352 1154.5L354 1155L356 1155.2L358 1155L360 1155.1L362 1154.6L364 1155.2L366 1155L368 1155.3L370 1155.3L372 1154.9L374 1155.3L375.7 1155.1L376 1154.8L378 1155.5L380 1155.4L382 1154.2L384 1153.9L386 1154.5L388 1154.9L390 1155.1L392 1155L394 1154.7L396 1155L398 1154.7L400 1154.2L402 1154.4L404 1154.7L406 1154.1L408 1154L410 1153.9L412 1154.5L414 1154.3L416 1154.4L418 1153.9L420 1154L422 1154.3L424 1153.7L426 1154.1L428 1153.8L430 1153.7L432 1153.9L434 1153.9L436 1154.3L438 1153.5L440 1154.1L441.4 1153.2L442 1153.2L444 1152.7L446 1153.7L448 1153.9L450 1153.1L452 1153.3L454 1153.4L456 1152.9L458 1153.4L460 1153.4L462 1152.9L464 1152.8L466 1153L468 1153L470 1152.1L472 1152.4L474 1152.7L476 1151.6L478 1152.5L480 1152.9L482 1151.9L484 1152.7L486 1152.1L488 1152.5L490 1152.1L492 1151.6L494 1151.5L496 1152.9L498 1151.7L500 1151.9L502 1152.5L504 1152.2L506 1152L508 1151.3L510 1151.7L512 1151.4L514 1151L516 1151.5L518 1151.6L520 1150.9L522 1150.9L524 1151.2L526 1151.4L528 1150.8L530 1151.7L532 1151.8L534 1151.6L536 1151.3L538 1151.9L539.9 1151.9L540 1152.4L542 1151.6L544 1152.2L546 1151.3L548 1151.6L550 1151.5L552 1151.6L554 1152.1L556 1151.4L558 1151.9L560 1151.4L562 1151.5L564 1151.3L566 1151.6L568 1150.9L570 1151.4L572 1151.8L574 1151.8L576 1151L578 1151.2L580 1151.6L582 1152.5L584 1151.7L586 1151.9L588 1151.9L590 1152.1L592 1151.8L594 1152.2L596 1152.3L598 1152.5L600 1152L602 1152.8L604 1153.1L606 1152.7L608 1152.8L610 1151.9L612 1153.2L614 1153.4L616 1153.2L618 1153L620 1153.2L622 1154.1L624 1152.9L626 1153L628 1153.5L630 1153.3L632 1152.6L634 1153.4L636 1153.5L638 1153.2L640 1153.8L642 1153.9L644 1153.3L646 1154.2L648 1154.9L650 1155L652 1154.2L654 1154.3L656 1154.8L658 1155L660 1154.5L662 1154.7L664 1155.6L666 1155.3L668 1155.8L670 1155.6L672 1156.1L674 1155.8L676 1155.7L678 1155.7L680 1155.6L682 1156.2L684 1155.9L686 1156.2L687.8 1156.4L688 1156.4L690 1156.6L692 1156.6L694 1156.8L696 1157.4L698 1157.1L700 1157.4L702 1156.7L704 1157.3L706 1158.2L708 1157.5L710 1157.5L712 1158.3L714 1157.6L716 1158.4L718 1158.1L720 1158.1L722 1157.6L724 1158.8L726 1158L728 1158.1L730 1158.9L732 1158.3L734 1159.1L736 1158.8L738 1158.9L740 1158.8L742 1159L744 1159.3L746 1159L748 1159.5L750 1159.4L752 1159.5L754 1159.4L756 1159.5L758 1159.5L760 1159.6L762 1159.4L764 1159.4L766 1159L768 1158.9L769.9 1159.5L770 1159.8L772 1159.2L774 1158.9L776 1159.3L778 1159.7L780 1159.9L782 1159.5L784 1159.2L786 1159.6L788 1159.8L790 1159.6L792 1160L794 1159.5L796 1160L798 1160.3L800 1159.5L802 1159.6L804 1160L806 1161.1L808 1160.3L810 1160.2L812 1160.6L814 1160.1L816 1159.6L818 1159.8L820 1160.6L822 1159.5L824 1159.6L826 1160.4L828 1160.1L830 1160.5L832 1159.6L834 1159.7L835.6 1159.9L836 1159.6L838 1160L840 1160L842 1160.3L844 1160.1L846 1160L848 1160.4L850 1160.7L852 1160.7L854 1160.3L856 1160.1L858 1160L860 1159.7L862 1160.1L864 1160.1L866 1160.6L868 1159.9L870 1160L872 1160.3L874 1159.1L876 1159.4L878 1159.5L880 1159.7L882 1159.2L884 1159.9L886 1160L888 1159.8L890 1159.9L892 1159.2L894 1160L896 1159.3L898 1158.8L900 1159.4L902 1159.4L904 1158.9L906 1158.5L908 1158.5L910 1158.7L912 1157.6L914 1158.6L916 1158.3L918 1157.7L920 1157.9L921.9 1157.1L922 1156.7L924 1156.8L926 1156L928 1154.5L930 1153.2L932 1152.4L934 1152.5L936 1151.8L936.1 1152.8L938 1152.1L940 1153L942 1153.9L944 1155.1L946 1157L947 1157.2L948 1158.8L950 1163L952 1168.7L954 1174.8L955.7 1179.5L956 1180.3L958 1186.4L960 1193.1L962 1198.6L964 1202.1L964.5 1201.7L966 1200.1L968 1194.3L970 1186.7L972 1179.8L972.1 1179.5L974 1173.9L976 1168.1L978 1163.3L978.7 1162L980 1159.9L982 1156.6L984 1154.6L985.2 1154.2L986 1154L988 1153.3L990 1154L992 1154L994 1154.1L996 1153L996.2 1152.7L998 1152.8L1000 1151.4L1002 1150.5L1004 1148.9L1006 1147.5L1007.1 1146.3L1008 1145.8L1010 1142.8L1012 1140L1014 1136.4L1016 1132.7L1018 1129.2L1020 1125.9L1022 1122.5L1024 1119.1L1026 1115.7L1028 1112.3L1030 1109L1031.1 1107.6L1032 1106.2L1034 1104.5L1036 1102.2L1038 1099.2L1039.9 1094.2L1040 1093.7L1041.6 1063.6L1042 1053.9L1043.1 1013.8L1043.5 980M1047.8 980L1048.2 1013.8L1049 1096.4L1049.8 1127.7L1050.8 1151L1051.8 1170.6L1053 1182.7L1053.8 1178.8L1055.2 1162L1055.8 1152.8L1057.8 1109.3L1058.4 1096.4L1059.8 1067.5L1061.7 1030.9L1061.8 1029.3L1062.8 1013.8L1063.3 980M1078 980L1078.8 1013.8L1080 1021.3L1082 1027.2L1083.6 1030.9L1084 1032.1L1086 1037.8L1088 1043.1L1090 1048.1L1090.1 1048.3L1092 1052.4L1094 1056.1L1096 1060.4L1097.8 1065.8L1098 1066.5L1100 1078.9L1101 1118.3L1102 1149L1102.8 1183.8L1103.7 1300.3L1104 1340"/>
<path stroke="#3d5288" d="M1188.5 1014V1049M1189.5 1014V1049M1193.5 1014V1107H1194.5V1300M1199.5 1014V1200H1198.5V1300M1257.5 1014V1025"/>
<path stroke="#66771f" d="M1201.5 1100V1260M1233.5 1014V1300M1240.5 1014V1300"/>
<path stroke="#cde84d" d="M1202.5 1014V1300M1210.5 1014V1300M1216.5 1014V1300M1219.5 1014V1300M1237.5 1014V1300M1250.5 1014V1300M1252.5 1014V1300M1258.5 1025V1300M1265.5 1014V1300M1266.5 1014V1300"/>
<path stroke="#5aaba5" d="M1210.5 1014V1129H1209.5V1162M1209.5 1230H1208.5V1300M1217.5 1014V1100M1234.5 1014V1128M1248.5 1014V1300M1254.5 1014V1300M1256.5 1014V1271M1268.5 1014V1300"/>
</g>
<rect x="111" y="1033" width="19" height="19" fill="#3d5288" shape-rendering="crispEdges"/>
<text x="137" y="1048.0" font-size="12" fill="#eeeeee" textLength="236.4" lengthAdjust="spacingAndGlyphs">H1:SUS-ETMY_L2_MASTER_OUT_UL_DQ</text>
<rect x="111" y="1058" width="19" height="19" fill="#5aaba5" shape-rendering="crispEdges"/>
<text x="137" y="1073.0" font-size="12" fill="#eeeeee" textLength="233.5" lengthAdjust="spacingAndGlyphs">H1:SUS-ETMY_L2_MASTER_OUT_LL_DQ</text>
<rect x="111" y="1083" width="19" height="19" fill="#cde84d" shape-rendering="crispEdges"/>
<text x="137" y="1098.0" font-size="12" fill="#eeeeee" textLength="237.6" lengthAdjust="spacingAndGlyphs">H1:SUS-ETMY_L2_MASTER_OUT_UR_DQ</text>
<rect x="111" y="1108" width="19" height="19" fill="#66771f" shape-rendering="crispEdges"/>
<text x="137" y="1123.0" font-size="12" fill="#eeeeee" textLength="235" lengthAdjust="spacingAndGlyphs">H1:SUS-ETMY_L2_MASTER_OUT_LR_DQ</text>
<path d="M92.5 1014V1300.5H1274" fill="none" stroke="#969696" stroke-width="1" shape-rendering="crispEdges"/>
<g font-size="13" fill="#eeeeee">
<g text-anchor="end" clip-path="url(#a7)">
<text x="87" y="1019.6" textLength="44" lengthAdjust="spacingAndGlyphs">200000</text>
<text x="87" y="1091.1" textLength="44" lengthAdjust="spacingAndGlyphs">100000</text>
<text x="87" y="1162" textLength="7.3" lengthAdjust="spacingAndGlyphs">0</text>
<text x="87" y="1234.1" textLength="48.4" lengthAdjust="spacingAndGlyphs">-100000</text>
<text x="87" y="1305.6" textLength="48.4" lengthAdjust="spacingAndGlyphs">-200000</text>
</g>
<g text-anchor="middle">
<text x="207.4" y="1316" textLength="61.7" lengthAdjust="spacingAndGlyphs">-1s,125ms</text>
<text x="453.2" y="1316" textLength="18.3" lengthAdjust="spacingAndGlyphs">-1s</text>
<text x="698.9" y="1316" textLength="44" lengthAdjust="spacingAndGlyphs">-875ms</text>
<text x="944.6" y="1316" textLength="44" lengthAdjust="spacingAndGlyphs">-750ms</text>
<text x="1190.4" y="1316" textLength="44" lengthAdjust="spacingAndGlyphs">-625ms</text>
</g>
<text transform="translate(31 1157) rotate(-90)" text-anchor="middle" textLength="40.4" lengthAdjust="spacingAndGlyphs">counts</text>
</g>
</g>
<text x="1071" y="1357.5" font-size="16" fill="#eeeeee" textLength="411.6" lengthAdjust="spacingAndGlyphs">t0 = Wed Nov 26 2025 01:21:42 UTC [1448155320.4375]</text>
<g id="titlebar">
<rect x="0" y="0" width="2557" height="22" fill="url(#tb)"/>
<rect x="0" y="21" width="2557" height="1" fill="#ececec"/>
<rect x="0" y="22" width="2557" height="1" fill="#ffffff"/>
<rect x="2555" y="22" width="1" height="1351" fill="#ffffff"/>
<rect x="2556" y="22" width="1" height="1351" fill="#f0f0f0"/>
<circle cx="9" cy="8" r="3.4" fill="#f6f6f6" stroke="#c4c4c4" stroke-width="0.9"/>
<text x="1140.2" y="12" font-size="12" font-weight="bold" fill="#2f2f2f" textLength="223.3" lengthAdjust="spacingAndGlyphs">ndscope: LOCKLOSS 1448155320.4375</text>
<circle cx="2494.2" cy="8.6" r="8" fill="url(#bt)" stroke="#b2b2b2" stroke-width="1.2"/>
<circle cx="2519.3" cy="8.6" r="8" fill="url(#bt)" stroke="#b2b2b2" stroke-width="1.2"/>
<circle cx="2544.4" cy="8.6" r="8" fill="url(#bt)" stroke="#b2b2b2" stroke-width="1.2"/>
<g fill="none" stroke="#444444" stroke-width="1.2" stroke-linecap="round" stroke-linejoin="round">
<path d="M2491 7L2494.2 10.2L2497.4 7"/>
<path d="M2516.1 10L2519.3 6.8L2522.5 10"/>
<path d="M2541.2 5.6L2547.6 11.8M2547.6 5.6L2541.2 11.8"/>
</g></g>
</svg></body></html>
